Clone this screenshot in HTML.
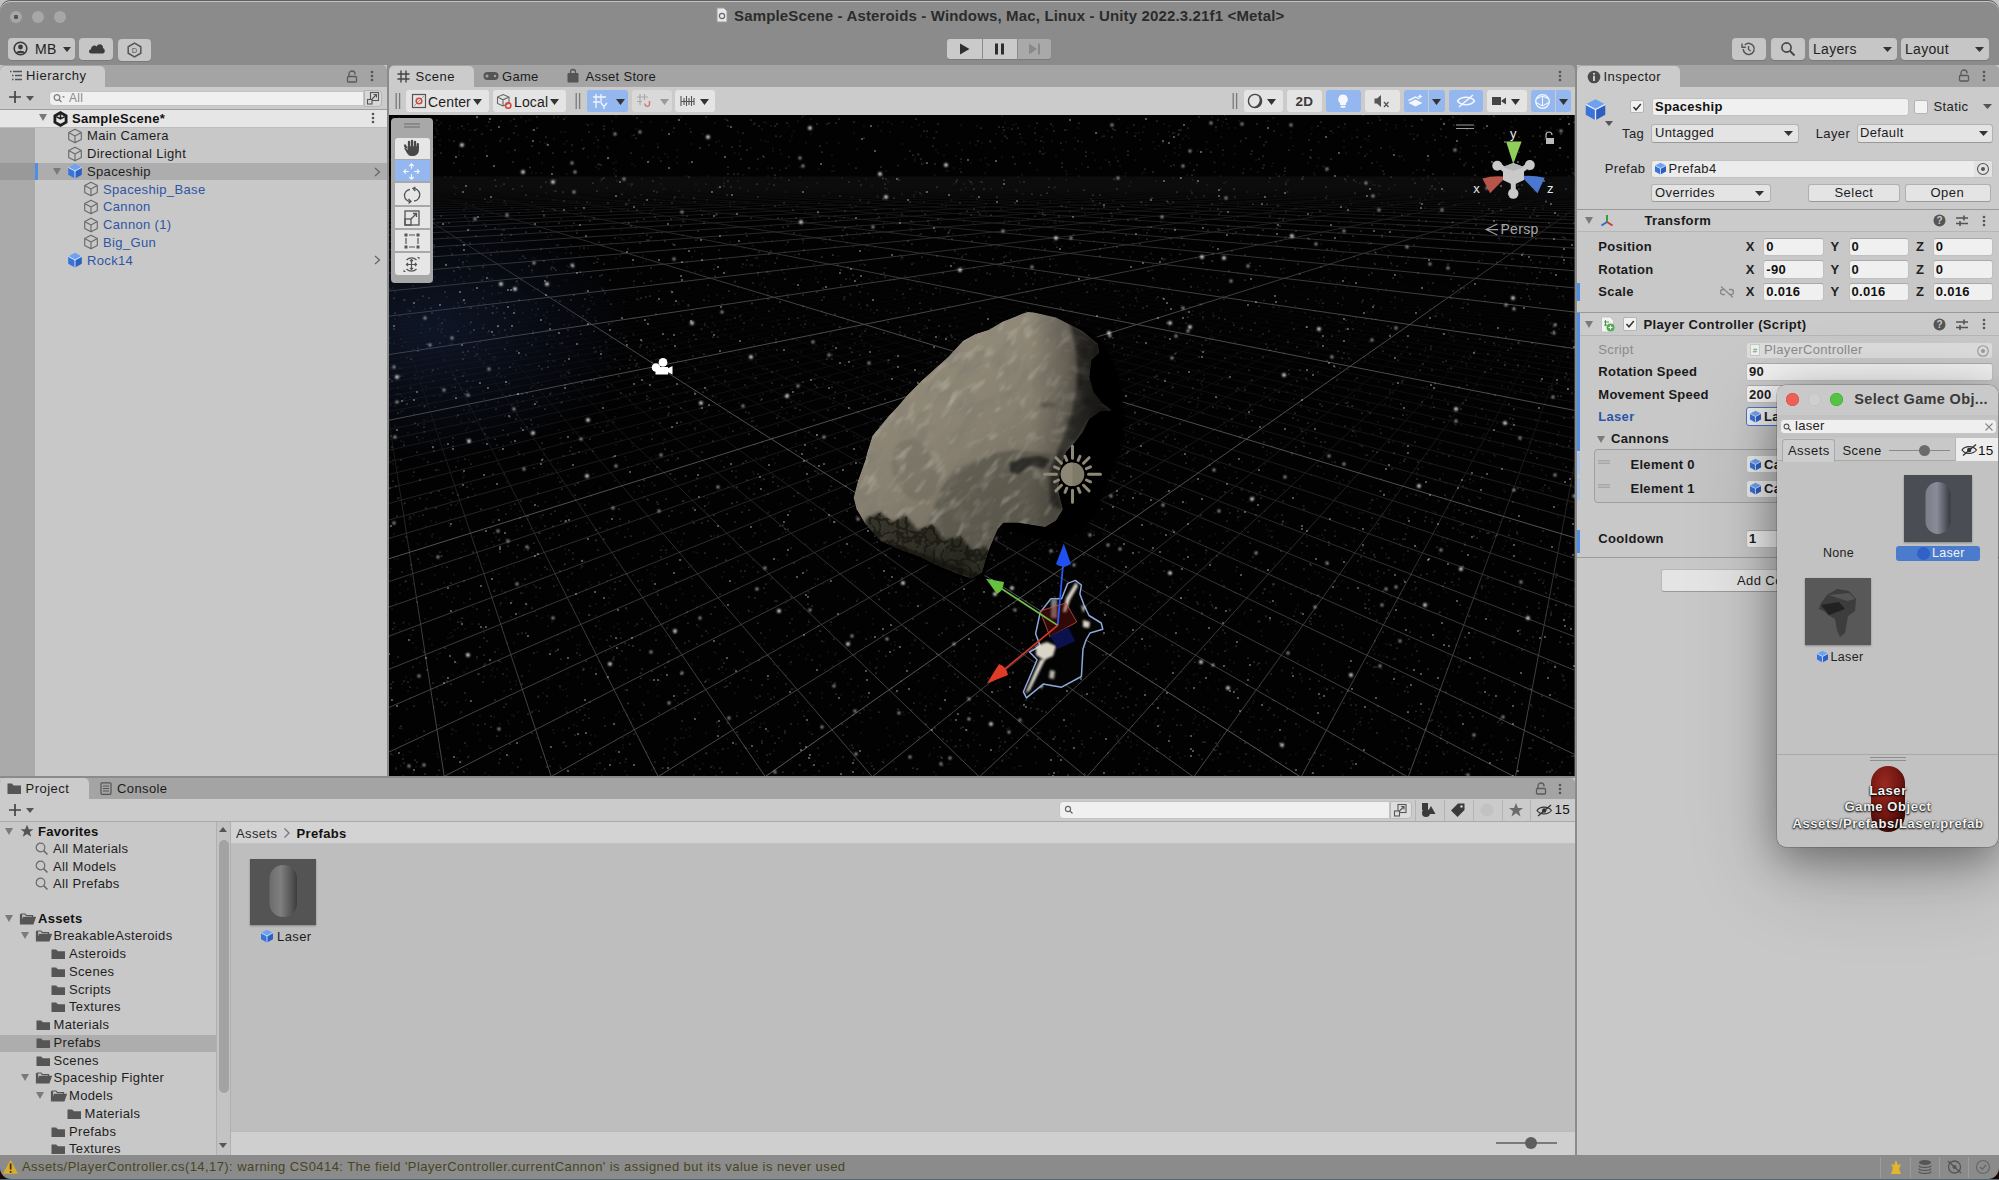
<!DOCTYPE html><html><head><meta charset="utf-8"><title>Unity</title><style>
*{box-sizing:border-box;margin:0;padding:0}
html,body{width:1999px;height:1180px;overflow:hidden;background:#c3c3c3}
body{position:relative;font-family:"Liberation Sans",sans-serif;font-size:13px;color:#1c1c1c}
div{position:absolute}
.t{height:18px;line-height:18px;white-space:nowrap;letter-spacing:0.4px}
.b{font-weight:bold;letter-spacing:0.2px}
.btn{background:#e4e4e4;border:1px solid #b0b0b0;border-bottom-color:#999;border-radius:3px}
.tb{background:#c6c6c6;border-radius:4px;box-shadow:0 1px 0 #7a7a7a}
.fld{background:#f0f0f0;border:1px solid #c0c0c0;border-top-color:#aaa;border-radius:3px}
.dd{background:#e4e4e4;border:1px solid #b3b3b3;border-bottom-color:#999;border-radius:3px}
svg{position:absolute;overflow:visible}
</style></head><body><div style="left:0;top:0;width:1999px;height:1180px;background:#8b8b8b;border-radius:11px 11px 0 0;overflow:hidden;box-shadow:inset 0 1px 0 #5e5e5e, inset 0 2px 0 #c4c4c4">
</div>
<div style="left:9.5px;top:10.5px;width:12px;height:12px;border-radius:6px;background:#a7a7a7"></div>
<div style="left:31.700000000000003px;top:10.5px;width:12px;height:12px;border-radius:6px;background:#a7a7a7"></div>
<div style="left:54px;top:10.5px;width:12px;height:12px;border-radius:6px;background:#a7a7a7"></div>
<div style="left:13.5px;top:14.5px;width:4px;height:4px;border-radius:1px;background:#555"></div>
<svg style="left:716px;top:7px" width="12" height="16"><path d="M1 1H8L11 4V15H1Z" fill="#e8e8e8" stroke="#9a9a9a"/><circle cx="6" cy="9" r="2.6" fill="none" stroke="#666" stroke-width="1.2"/></svg>
<div class="t" style="left:734px;top:7px;font-weight:bold;font-size:15px;letter-spacing:0.15px;color:#2b2b2b">SampleScene - Asteroids - Windows, Mac, Linux - Unity 2022.3.21f1 &lt;Metal&gt;</div>
<div class="tb" style="left:8px;top:38px;width:67px;height:21.5px;"></div>
<svg style="left:13px;top:41px" width="16" height="16"><circle cx="7.5" cy="7.5" r="6.3" fill="none" stroke="#3a3a3a" stroke-width="1.6"/><circle cx="7.5" cy="6" r="2.4" fill="#3a3a3a"/><path d="M3.3 12.2C4.5 9.8 10.5 9.8 11.7 12.2" fill="#3a3a3a" stroke="#3a3a3a" stroke-width="1.4"/></svg>
<div class="t" style="left:35px;top:39.5px;font-size:14px;color:#222;letter-spacing:0.3px">MB</div>
<svg style="left:63px;top:46.5px" width="8" height="5"><path d="M0 0H8L4.0 5Z" fill="#333"/></svg>
<div class="tb" style="left:79px;top:38px;width:34px;height:21.5px;"></div>
<svg style="left:88px;top:42px" width="18" height="13"><path d="M3 11.5C0.5 11.5 0.3 7.6 3 7.3C3 4 6.5 2.4 8.8 4.5C10 1 15.5 1.8 15 6.3C17.5 6.8 17.3 11.5 14.8 11.5Z" fill="#3c3c3c"/></svg>
<div class="tb" style="left:118px;top:38.5px;width:33px;height:22.5px;"></div>
<svg style="left:126px;top:42px" width="17" height="16"><path d="M8.5 1.2L14.8 4.8V11.2L8.5 14.8L2.2 11.2V4.8Z" fill="none" stroke="#555" stroke-width="1.5"/><text x="8.5" y="11.3" font-size="7.5" text-anchor="middle" fill="#555" font-family="Liberation Sans">D</text></svg>
<div style="left:947px;top:38.5px;width:35px;height:20.5px;background:#cacaca;border-radius:3px 0 0 3px;box-shadow:0 1px 0 #7a7a7a"></div>
<div style="left:982.5px;top:38.5px;width:34.5px;height:20.5px;background:#cacaca;box-shadow:0 1px 0 #7a7a7a"></div>
<div style="left:1017.5px;top:38.5px;width:33.5px;height:20.5px;background:#a9a9a9;border-radius:0 3px 3px 0;box-shadow:0 1px 0 #7a7a7a"></div>
<svg style="left:959px;top:43px" width="12" height="12"><path d="M1 0.5L10.5 6L1 11.5Z" fill="#2e2e2e"/></svg>
<svg style="left:994px;top:43px" width="12" height="12"><rect x="1" y="0.5" width="3" height="11" fill="#2e2e2e"/><rect x="7" y="0.5" width="3" height="11" fill="#2e2e2e"/></svg>
<svg style="left:1028px;top:43px" width="14" height="12"><path d="M1 0.5L9 6L1 11.5Z" fill="#8a8a8a"/><rect x="10" y="0.5" width="2" height="11" fill="#8a8a8a"/></svg>
<div class="tb" style="left:1732px;top:38px;width:34px;height:21.5px;"></div>
<svg style="left:1740px;top:41px" width="17" height="16"><path d="M3.2 8A5.5 5.5 0 1 0 4.8 4" fill="none" stroke="#555" stroke-width="1.5"/><path d="M2 2.5V6.3H5.8" fill="none" stroke="#555" stroke-width="1.4"/><path d="M8.5 5V8.5L10.7 10" fill="none" stroke="#555" stroke-width="1.4"/></svg>
<div class="tb" style="left:1771px;top:38px;width:34px;height:21.5px;"></div>
<svg style="left:1780px;top:41px" width="17" height="16"><circle cx="6.5" cy="6.5" r="4.6" fill="none" stroke="#444" stroke-width="1.6"/><path d="M10 10L14.5 14.5" stroke="#444" stroke-width="1.8"/></svg>
<div class="tb" style="left:1809px;top:38px;width:87.5px;height:21.5px;"></div>
<div class="t" style="left:1813px;top:39.5px;font-size:14px;color:#222;letter-spacing:0.3px">Layers</div>
<svg style="left:1883px;top:46.5px" width="9" height="5"><path d="M0 0H9L4.5 5Z" fill="#333"/></svg>
<div class="tb" style="left:1901px;top:38px;width:88px;height:21.5px;"></div>
<div class="t" style="left:1905px;top:39.5px;font-size:14px;color:#222;letter-spacing:0.3px">Layout</div>
<svg style="left:1975px;top:46.5px" width="9" height="5"><path d="M0 0H9L4.5 5Z" fill="#333"/></svg>
<div style="left:0px;top:65px;width:386.5px;height:711px;background:#c8c8c8"></div>
<div style="left:0px;top:65px;width:386.5px;height:22px;background:#a4a4a4;border-radius:5px 5px 0 0"></div>
<div style="left:0px;top:65.5px;width:105px;height:21.5px;background:#cbcbcb;border-radius:5px 5px 0 0"></div>
<svg style="left:9px;top:70px" width="14" height="12" viewBox="0 0 14 12"><path d="M1 1.5H2.5 M4 1.5H13 M3 5.5H4.5 M6 5.5H13 M3 9.5H4.5 M6 9.5H13" stroke="#555" stroke-width="1.3"/></svg>
<div class="t" style="left:26px;top:67px;color:#1e1e1e;letter-spacing:0.55px">Hierarchy</div>
<svg style="left:346px;top:70px" width="12" height="13" viewBox="0 0 12 13"><path d="M3 6V4A3 3 0 0 1 9 4V4.5" fill="none" stroke="#5a5a5a" stroke-width="1.3"/><rect x="1.5" y="6.5" width="9" height="5.5" rx="1" fill="none" stroke="#5a5a5a" stroke-width="1.3"/></svg>
<svg style="left:370px;top:70px" width="4" height="12" viewBox="0 0 4 12"><circle cx="2" cy="2" r="1.3" fill="#555"/><circle cx="2" cy="6" r="1.3" fill="#555"/><circle cx="2" cy="10" r="1.3" fill="#555"/></svg>
<div style="left:0px;top:87px;width:386.5px;height:22.5px;background:#cbcbcb;border-bottom:1px solid #9d9d9d"></div>
<svg style="left:8px;top:90px" width="14" height="14" viewBox="0 0 14 14"><path d="M7 1V13 M1 7H13" stroke="#444" stroke-width="1.7"/></svg>
<svg style="left:26px;top:95.5px" width="8" height="5"><path d="M0 0H8L4.0 5Z" fill="#555"/></svg>
<div style="left:49px;top:90.5px;width:315px;height:15.5px;background:#f0f0f0;border:1px solid #c4c4c4;border-radius:4px 0 0 4px"></div>
<svg style="left:53px;top:93px" width="12" height="10" viewBox="0 0 12 10"><circle cx="4" cy="4.5" r="2.8" fill="none" stroke="#777" stroke-width="1.2"/><path d="M6 6.5L8.5 9 M9.5 3.8L11.5 3.8" stroke="#777" stroke-width="1.2"/></svg>
<div class="t" style="left:69px;top:89.3px;color:#8a8a8a;font-size:12px;letter-spacing:0.3px">All</div>
<div style="left:364px;top:90px;width:18px;height:16.5px;background:#d8d8d8;border:1px solid #b5b5b5;border-radius:0 4px 4px 0"></div>
<svg style="left:366px;top:91px" width="14" height="14" viewBox="0 0 14 14"><rect x="4.5" y="1.5" width="8" height="8" fill="none" stroke="#555" stroke-width="1.1"/><rect x="1.5" y="8.5" width="4.5" height="4.5" fill="#d8d8d8" stroke="#555" stroke-width="1.1"/><path d="M6 8L10.5 3.5 M7.5 3.5H10.5V6.5" fill="none" stroke="#555" stroke-width="1.1"/></svg>
<div style="left:0px;top:127.5px;width:35px;height:648.5px;background:#aaaaaa"></div>
<div style="left:0px;top:110px;width:386.5px;height:17.5px;background:#e6e6e6;border-bottom:1px solid #bdbdbd"></div>
<svg style="left:38px;top:113px" width="10" height="10" viewBox="0 0 10 10"><path d="M1 1H9L5 8Z" fill="#7a7a7a"/></svg>
<svg style="left:52px;top:109.5px" width="17" height="18" viewBox="0 0 17 18"><path d="M8.5 1L15.5 5V13L8.5 17L1.5 13V5Z" fill="#1e1e1e"/><path d="M8.5 4.2L12.7 6.6V11.4L8.5 13.8L4.3 11.4V6.6Z" fill="#e6e6e6"/><path d="M8.5 4.2V9 M4.3 6.6L8.5 9L12.7 6.6" stroke="#1e1e1e" stroke-width="1.5" fill="none"/></svg>
<div class="t" style="left:72px;top:109.5px;font-weight:bold;letter-spacing:0.3px;color:#111">SampleScene*</div>
<svg style="left:371px;top:112px" width="4" height="12" viewBox="0 0 4 12"><circle cx="2" cy="2" r="1.3" fill="#555"/><circle cx="2" cy="6" r="1.3" fill="#555"/><circle cx="2" cy="10" r="1.3" fill="#555"/></svg>
<svg style="left:66.5px;top:127.80000000000001px" width="16" height="16" viewBox="0 0 16 16"><path d="M8 1.2L14.3 4.6V11.4L8 14.8L1.7 11.4V4.6Z M1.7 4.6L8 8L14.3 4.6 M8 8V14.8" fill="none" stroke="#6a6a6a" stroke-width="1.15" stroke-linejoin="round"/></svg>
<div class="t" style="left:87px;top:127.30000000000001px;color:#1e1e1e;letter-spacing:0.35px">Main Camera</div>
<svg style="left:66.5px;top:145.55px" width="16" height="16" viewBox="0 0 16 16"><path d="M8 1.2L14.3 4.6V11.4L8 14.8L1.7 11.4V4.6Z M1.7 4.6L8 8L14.3 4.6 M8 8V14.8" fill="none" stroke="#6a6a6a" stroke-width="1.15" stroke-linejoin="round"/></svg>
<div class="t" style="left:87px;top:145.05px;color:#1e1e1e;letter-spacing:0.35px">Directional Light</div>
<div style="left:0px;top:162.8px;width:386.5px;height:17px;background:#adadad"></div>
<div style="left:0px;top:162.8px;width:35px;height:17px;background:#999"></div>
<div style="left:35px;top:162.8px;width:3px;height:17px;background:#4c8fe8"></div>
<svg style="left:52px;top:167.3px" width="10" height="10" viewBox="0 0 10 10"><path d="M1 1H9L5 8Z" fill="#7a7a7a"/></svg>
<svg style="left:66.5px;top:163.3px" width="16" height="16" viewBox="0 0 16 16"><g transform="scale(1.0)"><path d="M8 0.8L14.8 4.4L8 8L1.2 4.4Z" fill="#6ea2f0"/><path d="M1.2 4.4L8 8V15.4L1.2 11.7Z" fill="#3a73d9"/><path d="M14.8 4.4L8 8V15.4L14.8 11.7Z" fill="#2d5fc0"/><path d="M8 8V15.4 M1.2 4.4L8 8L14.8 4.4" stroke="#e8eefc" stroke-width="0.9" fill="none"/></g></svg>
<div class="t" style="left:87px;top:162.8px;color:#1e1e1e;letter-spacing:0.35px">Spaceship</div>
<svg style="left:82.5px;top:181.05px" width="16" height="16" viewBox="0 0 16 16"><path d="M8 1.2L14.3 4.6V11.4L8 14.8L1.7 11.4V4.6Z M1.7 4.6L8 8L14.3 4.6 M8 8V14.8" fill="none" stroke="#6a6a6a" stroke-width="1.15" stroke-linejoin="round"/></svg>
<div class="t" style="left:103px;top:180.55px;color:#2f55a4;letter-spacing:0.35px">Spaceship_Base</div>
<svg style="left:82.5px;top:198.8px" width="16" height="16" viewBox="0 0 16 16"><path d="M8 1.2L14.3 4.6V11.4L8 14.8L1.7 11.4V4.6Z M1.7 4.6L8 8L14.3 4.6 M8 8V14.8" fill="none" stroke="#6a6a6a" stroke-width="1.15" stroke-linejoin="round"/></svg>
<div class="t" style="left:103px;top:198.3px;color:#2f55a4;letter-spacing:0.35px">Cannon</div>
<svg style="left:82.5px;top:216.55px" width="16" height="16" viewBox="0 0 16 16"><path d="M8 1.2L14.3 4.6V11.4L8 14.8L1.7 11.4V4.6Z M1.7 4.6L8 8L14.3 4.6 M8 8V14.8" fill="none" stroke="#6a6a6a" stroke-width="1.15" stroke-linejoin="round"/></svg>
<div class="t" style="left:103px;top:216.05px;color:#2f55a4;letter-spacing:0.35px">Cannon (1)</div>
<svg style="left:82.5px;top:234.3px" width="16" height="16" viewBox="0 0 16 16"><path d="M8 1.2L14.3 4.6V11.4L8 14.8L1.7 11.4V4.6Z M1.7 4.6L8 8L14.3 4.6 M8 8V14.8" fill="none" stroke="#6a6a6a" stroke-width="1.15" stroke-linejoin="round"/></svg>
<div class="t" style="left:103px;top:233.8px;color:#2f55a4;letter-spacing:0.35px">Big_Gun</div>
<svg style="left:66.5px;top:252.05px" width="16" height="16" viewBox="0 0 16 16"><g transform="scale(1.0)"><path d="M8 0.8L14.8 4.4L8 8L1.2 4.4Z" fill="#6ea2f0"/><path d="M1.2 4.4L8 8V15.4L1.2 11.7Z" fill="#3a73d9"/><path d="M14.8 4.4L8 8V15.4L14.8 11.7Z" fill="#2d5fc0"/><path d="M8 8V15.4 M1.2 4.4L8 8L14.8 4.4" stroke="#e8eefc" stroke-width="0.9" fill="none"/></g></svg>
<div class="t" style="left:87px;top:251.55px;color:#2f55a4;letter-spacing:0.35px">Rock14</div>
<svg style="left:374px;top:166.5px" width="7" height="10" viewBox="0 0 7 10"><path d="M1 1L5.5 5L1 9" fill="none" stroke="#666" stroke-width="1.3"/></svg>
<svg style="left:374px;top:255.10000000000002px" width="7" height="10" viewBox="0 0 7 10"><path d="M1 1L5.5 5L1 9" fill="none" stroke="#666" stroke-width="1.3"/></svg>
<div style="left:389px;top:65px;width:1186px;height:22px;background:#a4a4a4;border-radius:5px 5px 0 0"></div>
<div style="left:389px;top:65.5px;width:85px;height:21.5px;background:#cbcbcb;border-radius:5px 5px 0 0"></div>
<svg style="left:397px;top:70px" width="13" height="13" viewBox="0 0 13 13"><path d="M4 0.5V12.5 M9 0.5V12.5 M0.5 4H12.5 M0.5 9H12.5" stroke="#444" stroke-width="1.4"/></svg>
<div class="t" style="left:415.5px;top:67.5px;letter-spacing:0.5px">Scene</div>
<svg style="left:483px;top:71px" width="16" height="10" viewBox="0 0 16 10"><rect x="0.5" y="1" width="15" height="8" rx="4" fill="#555"/><circle cx="4" cy="5" r="1.5" fill="#a4a4a4"/><circle cx="12" cy="5" r="1.2" fill="#a4a4a4"/></svg>
<div class="t" style="left:502px;top:67.5px;letter-spacing:0.3px">Game</div>
<svg style="left:567px;top:69px" width="12" height="14" viewBox="0 0 12 14"><path d="M3.5 4V3A2.5 2.5 0 0 1 8.5 3V4" fill="none" stroke="#555" stroke-width="1.3"/><rect x="0.5" y="4" width="11" height="9.5" rx="1.2" fill="#555"/></svg>
<div class="t" style="left:585.5px;top:67.5px;letter-spacing:0.3px">Asset Store</div>
<svg style="left:1558px;top:70px" width="4" height="12" viewBox="0 0 4 12"><circle cx="2" cy="2" r="1.3" fill="#555"/><circle cx="2" cy="6" r="1.3" fill="#555"/><circle cx="2" cy="10" r="1.3" fill="#555"/></svg>
<div style="left:389px;top:87px;width:1186px;height:28px;background:#cbcbcb"></div>
<svg style="left:395px;top:92px" width="6" height="18" viewBox="0 0 6 18"><path d="M1.2 1V17 M4.6 1V17" stroke="#7a7a7a" stroke-width="1.3"/></svg>
<svg style="left:575px;top:92px" width="6" height="18" viewBox="0 0 6 18"><path d="M1.2 1V17 M4.6 1V17" stroke="#7a7a7a" stroke-width="1.3"/></svg>
<svg style="left:1232px;top:92px" width="6" height="18" viewBox="0 0 6 18"><path d="M1.2 1V17 M4.6 1V17" stroke="#7a7a7a" stroke-width="1.3"/></svg>
<div style="left:406px;top:90.2px;width:83px;height:21.6px;background:#e4e4e4;border-radius:3px"></div>
<svg style="left:411px;top:93px" width="16" height="16" viewBox="0 0 16 16"><rect x="1.5" y="1.5" width="13" height="13" fill="none" stroke="#555" stroke-width="1.2"/><circle cx="8" cy="8" r="2.8" fill="none" stroke="#d8453a" stroke-width="1.6"/><path d="M3 13L13 3" stroke="#888" stroke-width="0.8"/></svg>
<div class="t" style="left:428px;top:92.5px;font-size:14px;letter-spacing:0.15px">Center</div>
<svg style="left:472.5px;top:98.5px" width="9" height="6"><path d="M0 0H9L4.5 6Z" fill="#333"/></svg>
<div style="left:493px;top:90.2px;width:73px;height:21.6px;background:#e4e4e4;border-radius:3px"></div>
<svg style="left:496px;top:93px" width="18" height="17" viewBox="0 0 18 17"><path d="M7 1.5L13 4V10.5L7 13L1.5 10.5V4Z M1.5 4L7 6.8L13 4 M7 6.8V13" fill="none" stroke="#666" stroke-width="1.1"/><circle cx="12.2" cy="12.5" r="2.7" fill="none" stroke="#d8453a" stroke-width="1.6"/></svg>
<div class="t" style="left:514px;top:92.5px;font-size:14px;letter-spacing:0.15px">Local</div>
<svg style="left:550px;top:98.5px" width="9" height="6"><path d="M0 0H9L4.5 6Z" fill="#333"/></svg>
<div style="left:587px;top:90.2px;width:25px;height:21.6px;background:#93b7ee;border-radius:3px"></div>
<div style="left:612.6px;top:90.2px;width:15px;height:21.6px;background:#93b7ee;border-radius:0 3px 3px 0"></div>
<div style="left:587px;top:90.2px;width:25.5px;height:21.6px;background:#93b7ee;border-radius:3px 0 0 3px"></div>
<svg style="left:592px;top:93px" width="16" height="16" viewBox="0 0 16 16"><path d="M4 1V15 M9 1V10 M1 4H14 M1 9H8" stroke="#f2f6ff" stroke-width="1.3"/><path d="M9 10L12 13.5L15 10 M12 13.5V16" stroke="#f2f6ff" stroke-width="1.3" fill="none"/></svg>
<svg style="left:615.5px;top:98.5px" width="9" height="6"><path d="M0 0H9L4.5 6Z" fill="#333"/></svg>
<div style="left:631.7px;top:90.2px;width:24px;height:21.6px;background:#d9d9d9;border-radius:3px 0 0 3px"></div>
<div style="left:656px;top:90.2px;width:16px;height:21.6px;background:#d9d9d9;border-radius:0 3px 3px 0"></div>
<svg style="left:636px;top:93px" width="17" height="16" viewBox="0 0 17 16"><path d="M4 1V12 M8.5 1V7 M1 4H12 M1 8.5H6" stroke="#a9a9a9" stroke-width="1.2"/><path d="M9 10.5A2.3 2.3 0 1 0 13.5 10.5V8" fill="none" stroke="#d07a70" stroke-width="1.5"/></svg>
<svg style="left:659.5px;top:98.5px" width="9" height="6"><path d="M0 0H9L4.5 6Z" fill="#9a9a9a"/></svg>
<div style="left:675px;top:90.2px;width:40px;height:21.6px;background:#e4e4e4;border-radius:3px"></div>
<svg style="left:680px;top:93px" width="16" height="16" viewBox="0 0 16 16"><path d="M1 3V13 M4 5V12 M6.5 3V13 M9 5V12 M11.5 3V13 M14 5V12 M1 8.5H14" stroke="#555" stroke-width="1.1"/></svg>
<svg style="left:700px;top:98.5px" width="9" height="6"><path d="M0 0H9L4.5 6Z" fill="#333"/></svg>
<div style="left:1244px;top:90.2px;width:39.299999999999955px;height:21.6px;background:#e4e4e4;border-radius:3px"></div>
<svg style="left:1247px;top:93px" width="17" height="16" viewBox="0 0 17 16"><circle cx="8" cy="8" r="6.6" fill="none" stroke="#444" stroke-width="1.4"/><path d="M14.6 8A6.6 6.6 0 0 1 5 13.9A7 7 0 0 0 11.5 3.2A6.6 6.6 0 0 1 14.6 8Z" fill="#444"/></svg>
<svg style="left:1267px;top:98.5px" width="9" height="6"><path d="M0 0H9L4.5 6Z" fill="#333"/></svg>
<div style="left:1287px;top:90.2px;width:35px;height:21.6px;background:#e4e4e4;border-radius:3px"></div>
<div class="t" style="left:1295.5px;top:92.5px;font-size:13.5px;font-weight:bold;letter-spacing:0.2px;color:#3a3a3a">2D</div>
<div style="left:1326px;top:90.2px;width:35px;height:21.6px;background:#93b7ee;border-radius:3px"></div>
<svg style="left:1336px;top:93px" width="14" height="16" viewBox="0 0 14 16"><path d="M7 1.5A4.8 4.8 0 0 0 4 10V12H10V10A4.8 4.8 0 0 0 7 1.5Z" fill="#f4f7fd"/><rect x="4.5" y="12.8" width="5" height="2" rx="1" fill="#f4f7fd"/></svg>
<div style="left:1365px;top:90.2px;width:35px;height:21.6px;background:#e4e4e4;border-radius:3px"></div>
<svg style="left:1373px;top:93px" width="18" height="16" viewBox="0 0 18 16"><path d="M1.5 5.5H4L8 2V14L4 10.5H1.5Z" fill="#555"/><path d="M11 9L15.5 14 M15.5 9L11 14" stroke="#555" stroke-width="1.3"/></svg>
<div style="left:1404px;top:90.2px;width:24px;height:21.6px;background:#93b7ee;border-radius:3px 0 0 3px"></div>
<div style="left:1428.5px;top:90.2px;width:16px;height:21.6px;background:#93b7ee;border-radius:0 3px 3px 0"></div>
<svg style="left:1407px;top:93px" width="18" height="16" viewBox="0 0 18 16"><path d="M1.5 10L8.5 6.5L15.5 10L8.5 13.5Z" fill="#f4f7fd"/><path d="M1.5 7.5L8.5 4L12 5.8" fill="none" stroke="#f4f7fd" stroke-width="1.4"/><path d="M13 0.8L13.8 2.8L15.8 3.5L13.8 4.3L13 6.3L12.2 4.3L10.2 3.5L12.2 2.8Z" fill="#f4f7fd"/></svg>
<svg style="left:1431.5px;top:98.5px" width="9" height="6"><path d="M0 0H9L4.5 6Z" fill="#333"/></svg>
<div style="left:1448.6px;top:90.2px;width:34.40000000000009px;height:21.6px;background:#93b7ee;border-radius:3px"></div>
<svg style="left:1456px;top:93px" width="20" height="16" viewBox="0 0 20 16"><path d="M1.5 8C5 3 15 3 18.5 8C15 13 5 13 1.5 8Z" fill="none" stroke="#f4f7fd" stroke-width="1.4"/><path d="M3 14L17 2" stroke="#f4f7fd" stroke-width="1.5"/></svg>
<div style="left:1487px;top:90.2px;width:40px;height:21.6px;background:#e4e4e4;border-radius:3px"></div>
<svg style="left:1491px;top:93px" width="17" height="16" viewBox="0 0 17 16"><rect x="1" y="4" width="9" height="8" fill="#444"/><path d="M10.5 7.5L15 4.5V11.5L10.5 8.5Z" fill="#444"/></svg>
<svg style="left:1511px;top:98.5px" width="9" height="6"><path d="M0 0H9L4.5 6Z" fill="#333"/></svg>
<div style="left:1530.5px;top:90.2px;width:24.5px;height:21.6px;background:#93b7ee;border-radius:3px 0 0 3px"></div>
<div style="left:1555.5px;top:90.2px;width:15.5px;height:21.6px;background:#93b7ee;border-radius:0 3px 3px 0"></div>
<svg style="left:1534px;top:93px" width="17" height="17" viewBox="0 0 17 17"><circle cx="8.5" cy="8.5" r="6.8" fill="none" stroke="#f4f7fd" stroke-width="1.3"/><path d="M3 5.5L8.5 3L14 5.5 M2 9.5L8.5 13L15 9.5 M8.5 3V13" fill="none" stroke="#f4f7fd" stroke-width="1.1"/></svg>
<svg style="left:1558.5px;top:98.5px" width="9" height="6"><path d="M0 0H9L4.5 6Z" fill="#333"/></svg>
<svg style="left:389px;top:115px;overflow:hidden" width="1185.6" height="661" viewBox="0 0 1185.6 661"><rect x="0" y="0" width="1185.6" height="661" fill="#020203"/><defs><linearGradient id="fadeMin" x1="0" y1="61.5" x2="0" y2="661" gradientUnits="userSpaceOnUse"><stop offset="0" stop-color="#fff" stop-opacity="0"/><stop offset="0.12" stop-color="#fff" stop-opacity="0.01"/><stop offset="0.25" stop-color="#fff" stop-opacity="0.07"/><stop offset="0.45" stop-color="#fff" stop-opacity="0.3"/><stop offset="0.7" stop-color="#fff" stop-opacity="0.75"/><stop offset="1" stop-color="#fff" stop-opacity="1"/></linearGradient><mask id="mMin" maskUnits="userSpaceOnUse" x="0" y="0" width="1185.6" height="661"><rect x="0" y="0" width="1185.6" height="661" fill="url(#fadeMin)"/></mask><linearGradient id="fadeMaj" x1="0" y1="61.5" x2="0" y2="661" gradientUnits="userSpaceOnUse"><stop offset="0" stop-color="#fff" stop-opacity="0"/><stop offset="0.03" stop-color="#fff" stop-opacity="0.08"/><stop offset="0.1" stop-color="#fff" stop-opacity="0.45"/><stop offset="0.25" stop-color="#fff" stop-opacity="0.8"/><stop offset="1" stop-color="#fff" stop-opacity="1"/></linearGradient><mask id="mMaj" maskUnits="userSpaceOnUse" x="0" y="0" width="1185.6" height="661"><rect x="0" y="0" width="1185.6" height="661" fill="url(#fadeMaj)"/></mask><radialGradient id="rockG" cx="0.35" cy="0.3" r="0.8"><stop offset="0" stop-color="#9d9685"/><stop offset="0.55" stop-color="#8c8574"/><stop offset="1" stop-color="#6d685b"/></radialGradient><filter id="blur1" x="-50%" y="-50%" width="200%" height="200%"><feGaussianBlur stdDeviation="0.8"/></filter><filter id="blur2" x="-50%" y="-50%" width="200%" height="200%"><feGaussianBlur stdDeviation="1.6"/></filter></defs><defs><linearGradient id="haze" x1="0" y1="0" x2="0" y2="1"><stop offset="0" stop-color="#141414" stop-opacity="0.6"/><stop offset="1" stop-color="#161616" stop-opacity="0"/></linearGradient></defs><rect x="0" y="61.5" width="1185.6" height="22" fill="url(#haze)"/><g mask="url(#mMin)"><path d="M-39.1 61.5L-51.8 663.0M-38.0 61.5L55.5 663.0M-36.8 61.5L162.7 663.0M-35.7 61.5L269.9 663.0M-34.6 61.5L377.2 663.0M-33.4 61.5L484.4 663.0M-32.3 61.5L591.6 663.0M-31.1 61.5L698.8 663.0M-30.0 61.5L806.1 663.0M-27.7 61.5L1020.5 663.0M-26.5 61.5L1127.8 663.0M-25.4 61.5L1235.0 663.0M-24.2 61.5L1342.2 663.0M-23.1 61.5L1449.4 663.0M-21.9 61.5L1556.7 663.0M-20.8 61.5L1663.9 663.0M-19.6 61.5L1771.1 663.0M-18.5 61.5L1878.4 663.0M-16.2 61.5L2092.8 663.0M-15.1 61.5L2200.0 663.0M-13.9 61.5L2307.3 663.0M-12.8 61.5L2414.5 663.0M-11.6 61.5L2521.7 663.0M-10.5 61.5L2629.0 663.0M-9.3 61.5L2736.2 663.0M-8.2 61.5L2843.4 663.0M-7.0 61.5L2950.7 663.0M-4.7 61.5L3165.1 663.0M-3.6 61.5L3272.3 663.0M-2.5 61.5L3379.6 663.0M-1.3 61.5L3486.8 663.0M-0.2 61.5L3594.0 663.0M1.0 61.5L3701.3 663.0M2.1 61.5L3808.5 663.0M3.3 61.5L3915.7 663.0M4.4 61.5L4022.9 663.0M6.7 61.5L4237.4 663.0M7.9 61.5L4344.6 663.0M9.0 61.5L4451.9 663.0M10.2 61.5L4559.1 663.0M11.3 61.5L4666.3 663.0M12.4 61.5L4773.5 663.0M13.6 61.5L4880.8 663.0M14.7 61.5L4988.0 663.0M15.9 61.5L5095.2 663.0M18.2 61.5L5309.7 663.0M19.3 61.5L5416.9 663.0M20.5 61.5L5524.1 663.0M21.6 61.5L5631.4 663.0M22.8 61.5L5738.6 663.0M23.9 61.5L5845.8 663.0M25.1 61.5L5953.1 663.0M26.2 61.5L6060.3 663.0M27.4 61.5L6167.5 663.0M29.6 61.5L6382.0 663.0M30.8 61.5L6489.2 663.0M31.9 61.5L6596.4 663.0M33.1 61.5L6703.7 663.0M34.2 61.5L6810.9 663.0M35.4 61.5L6918.1 663.0M36.5 61.5L7025.4 663.0M37.7 61.5L7132.6 663.0M38.8 61.5L7239.8 663.0M41.1 61.5L7454.3 663.0M42.3 61.5L7561.5 663.0M43.4 61.5L7668.7 663.0M44.5 61.5L7776.0 663.0M45.7 61.5L7883.2 663.0M46.8 61.5L7990.4 663.0M48.0 61.5L8097.6 663.0M49.1 61.5L8204.9 663.0M50.3 61.5L8312.1 663.0M52.6 61.5L8526.6 663.0M53.7 61.5L8633.8 663.0M54.9 61.5L8741.0 663.0M56.0 61.5L8848.3 663.0M57.2 61.5L8955.5 663.0M58.3 61.5L9062.7 663.0M59.5 61.5L9169.9 663.0M60.6 61.5L9277.2 663.0M61.7 61.5L9384.4 663.0M64.0 61.5L9598.9 663.0M65.2 61.5L9706.1 663.0M66.3 61.5L9813.3 663.0M67.5 61.5L9920.5 663.0M68.6 61.5L10027.8 663.0M69.8 61.5L10135.0 663.0M70.9 61.5L10242.2 663.0M72.1 61.5L10349.5 663.0M73.2 61.5L10456.7 663.0M75.5 61.5L10671.1 663.0M76.6 61.5L10778.4 663.0M77.8 61.5L10885.6 663.0M78.9 61.5L10992.8 663.0M80.1 61.5L11100.1 663.0M81.2 61.5L11207.3 663.0M82.4 61.5L11314.5 663.0M83.5 61.5L11421.7 663.0M84.7 61.5L11529.0 663.0M87.0 61.5L11743.4 663.0M88.1 61.5L11850.7 663.0M89.3 61.5L11957.9 663.0M90.4 61.5L12065.1 663.0M91.5 61.5L12172.4 663.0M92.7 61.5L12279.6 663.0M93.8 61.5L12386.8 663.0M95.0 61.5L12494.0 663.0M96.1 61.5L12601.3 663.0M98.4 61.5L12815.7 663.0M99.6 61.5L12923.0 663.0M100.7 61.5L13030.2 663.0M101.9 61.5L13137.4 663.0M103.0 61.5L13244.6 663.0M104.2 61.5L13351.9 663.0M105.3 61.5L13459.1 663.0M106.5 61.5L13566.3 663.0M107.6 61.5L13673.6 663.0M109.9 61.5L13888.0 663.0M111.0 61.5L13995.2 663.0M112.2 61.5L14102.5 663.0M113.3 61.5L14209.7 663.0M114.5 61.5L14316.9 663.0M115.6 61.5L14424.2 663.0M116.8 61.5L14531.4 663.0M117.9 61.5L14638.6 663.0M119.1 61.5L14745.9 663.0M121.4 61.5L14960.3 663.0M122.5 61.5L15067.5 663.0M123.6 61.5L15174.8 663.0M124.8 61.5L15282.0 663.0M125.9 61.5L15389.2 663.0M127.1 61.5L15496.5 663.0M128.2 61.5L15603.7 663.0M129.4 61.5L15710.9 663.0M130.5 61.5L15818.1 663.0M132.8 61.5L16032.6 663.0M134.0 61.5L16139.8 663.0M135.1 61.5L16247.1 663.0M136.3 61.5L16354.3 663.0M137.4 61.5L16461.5 663.0M138.5 61.5L16568.7 663.0M139.7 61.5L16676.0 663.0M140.8 61.5L16783.2 663.0M142.0 61.5L16890.4 663.0M144.3 61.5L17104.9 663.0M145.4 61.5L17212.1 663.0M146.6 61.5L17319.3 663.0M147.7 61.5L17426.6 663.0M148.9 61.5L17533.8 663.0M150.0 61.5L17641.0 663.0M151.2 61.5L17748.3 663.0M152.3 61.5L17855.5 663.0M153.5 61.5L17962.7 663.0M155.7 61.5L18177.2 663.0M156.9 61.5L18284.4 663.0M158.0 61.5L18391.6 663.0M159.2 61.5L18498.9 663.0M160.3 61.5L18606.1 663.0M161.5 61.5L18713.3 663.0M162.6 61.5L18820.6 663.0M163.8 61.5L18927.8 663.0M164.9 61.5L19035.0 663.0M167.2 61.5L19249.5 663.0M168.4 61.5L19356.7 663.0M169.5 61.5L19463.9 663.0M170.6 61.5L19571.2 663.0M171.8 61.5L19678.4 663.0M172.9 61.5L19785.6 663.0M174.1 61.5L19892.8 663.0M175.2 61.5L20000.1 663.0M176.4 61.5L20107.3 663.0M178.7 61.5L20321.8 663.0M179.8 61.5L20429.0 663.0M181.0 61.5L20536.2 663.0M182.1 61.5L20643.5 663.0M183.3 61.5L20750.7 663.0M184.4 61.5L20857.9 663.0M185.6 61.5L20965.1 663.0M186.7 61.5L21072.4 663.0M187.8 61.5L21179.6 663.0M190.1 61.5L21394.1 663.0M191.3 61.5L21501.3 663.0M192.4 61.5L21608.5 663.0M193.6 61.5L21715.7 663.0M194.7 61.5L21823.0 663.0M195.9 61.5L21930.2 663.0M197.0 61.5L22037.4 663.0M198.2 61.5L22144.7 663.0M199.3 61.5L22251.9 663.0M201.6 61.5L22466.3 663.0M202.7 61.5L22573.6 663.0M203.9 61.5L22680.8 663.0M205.0 61.5L22788.0 663.0M206.2 61.5L22895.3 663.0M207.3 61.5L23002.5 663.0M208.5 61.5L23109.7 663.0M209.6 61.5L23216.9 663.0M210.8 61.5L23324.2 663.0M213.1 61.5L23538.6 663.0M214.2 61.5L23645.9 663.0M215.4 61.5L23753.1 663.0M216.5 61.5L23860.3 663.0M217.6 61.5L23967.6 663.0M218.8 61.5L24074.8 663.0M219.9 61.5L24182.0 663.0M221.1 61.5L24289.2 663.0M222.2 61.5L24396.5 663.0M224.5 61.5L24610.9 663.0M225.7 61.5L24718.2 663.0M226.8 61.5L24825.4 663.0M228.0 61.5L24932.6 663.0M229.1 61.5L25039.8 663.0M230.3 61.5L25147.1 663.0M231.4 61.5L25254.3 663.0M232.6 61.5L25361.5 663.0M233.7 61.5L25468.8 663.0M236.0 61.5L25683.2 663.0M237.1 61.5L25790.4 663.0M238.3 61.5L25897.7 663.0M239.4 61.5L26004.9 663.0M240.6 61.5L26112.1 663.0M241.7 61.5L26219.4 663.0M242.9 61.5L26326.6 663.0M244.0 61.5L26433.8 663.0M245.2 61.5L26541.1 663.0M247.5 61.5L26755.5 663.0M248.6 61.5L26862.7 663.0M249.7 61.5L26970.0 663.0M250.9 61.5L27077.2 663.0M252.0 61.5L27184.4 663.0M253.2 61.5L27291.7 663.0M254.3 61.5L27398.9 663.0M255.5 61.5L27506.1 663.0M256.6 61.5L27613.3 663.0M258.9 61.5L27827.8 663.0M260.1 61.5L27935.0 663.0M261.2 61.5L28042.3 663.0M262.4 61.5L28149.5 663.0M263.5 61.5L28256.7 663.0M264.6 61.5L28363.9 663.0M265.8 61.5L28471.2 663.0M266.9 61.5L28578.4 663.0M268.1 61.5L28685.6 663.0M270.4 61.5L28900.1 663.0M271.5 61.5L29007.3 663.0M272.7 61.5L29114.5 663.0M273.8 61.5L29221.8 663.0M275.0 61.5L29329.0 663.0M276.1 61.5L29436.2 663.0M277.3 61.5L29543.5 663.0M278.4 61.5L29650.7 663.0M279.6 61.5L29757.9 663.0M281.8 61.5L29972.4 663.0M283.0 61.5L30079.6 663.0M284.1 61.5L30186.8 663.0M285.3 61.5L30294.1 663.0M286.4 61.5L30401.3 663.0M287.6 61.5L30508.5 663.0M288.7 61.5L30615.8 663.0M289.9 61.5L30723.0 663.0M291.0 61.5L30830.2 663.0M293.3 61.5L31044.7 663.0M294.5 61.5L31151.9 663.0M295.6 61.5L31259.1 663.0M296.7 61.5L31366.4 663.0M297.9 61.5L31473.6 663.0M299.0 61.5L31580.8 663.0M300.2 61.5L31688.0 663.0M301.3 61.5L31795.3 663.0M302.5 61.5L31902.5 663.0M304.8 61.5L32117.0 663.0M305.9 61.5L32224.2 663.0M307.1 61.5L32331.4 663.0M308.2 61.5L32438.7 663.0M309.4 61.5L32545.9 663.0M310.5 61.5L32653.1 663.0M311.7 61.5L32760.3 663.0M312.8 61.5L32867.6 663.0M313.9 61.5L32974.8 663.0M316.2 61.5L33189.3 663.0M317.4 61.5L33296.5 663.0M318.5 61.5L33403.7 663.0M319.7 61.5L33510.9 663.0M320.8 61.5L33618.2 663.0M322.0 61.5L33725.4 663.0M323.1 61.5L33832.6 663.0M324.3 61.5L33939.9 663.0M325.4 61.5L34047.1 663.0M327.7 61.5L34261.5 663.0M328.8 61.5L34368.8 663.0M330.0 61.5L34476.0 663.0M331.1 61.5L34583.2 663.0M332.3 61.5L34690.5 663.0M333.4 61.5L34797.7 663.0M334.6 61.5L34904.9 663.0M335.7 61.5L35012.1 663.0M336.9 61.5L35119.4 663.0M339.2 61.5L35333.8 663.0M340.3 61.5L35441.1 663.0M341.5 61.5L35548.3 663.0M342.6 61.5L35655.5 663.0M343.7 61.5L35762.8 663.0M344.9 61.5L35870.0 663.0M346.0 61.5L35977.2 663.0M347.2 61.5L36084.4 663.0M348.3 61.5L36191.7 663.0M350.6 61.5L36406.1 663.0M351.8 61.5L36513.4 663.0M352.9 61.5L36620.6 663.0M354.1 61.5L36727.8 663.0M355.2 61.5L36835.0 663.0M356.4 61.5L36942.3 663.0M357.5 61.5L37049.5 663.0M358.7 61.5L37156.7 663.0M359.8 61.5L37264.0 663.0M362.1 61.5L37478.4 663.0M363.2 61.5L37585.6 663.0M364.4 61.5L37692.9 663.0M365.5 61.5L37800.1 663.0M366.7 61.5L37907.3 663.0M367.8 61.5L38014.6 663.0M369.0 61.5L38121.8 663.0M370.1 61.5L38229.0 663.0M371.3 61.5L38336.3 663.0M373.6 61.5L38550.7 663.0M374.7 61.5L38657.9 663.0M375.8 61.5L38765.2 663.0M377.0 61.5L38872.4 663.0M378.1 61.5L38979.6 663.0M379.3 61.5L39086.9 663.0M380.4 61.5L39194.1 663.0M381.6 61.5L39301.3 663.0M382.7 61.5L39408.5 663.0M385.0 61.5L39623.0 663.0M386.2 61.5L39730.2 663.0M387.3 61.5L39837.5 663.0M388.5 61.5L39944.7 663.0M389.6 61.5L40051.9 663.0M390.7 61.5L40159.1 663.0M391.9 61.5L40266.4 663.0M393.0 61.5L40373.6 663.0M394.2 61.5L40480.8 663.0M396.5 61.5L40695.3 663.0M397.6 61.5L40802.5 663.0M398.8 61.5L40909.7 663.0M399.9 61.5L41017.0 663.0M401.1 61.5L41124.2 663.0M402.2 61.5L41231.4 663.0M403.4 61.5L41338.7 663.0M404.5 61.5L41445.9 663.0M405.7 61.5L41553.1 663.0M407.9 61.5L41767.6 663.0M409.1 61.5L41874.8 663.0M410.2 61.5L41982.0 663.0M411.4 61.5L42089.3 663.0M412.5 61.5L42196.5 663.0M413.7 61.5L42303.7 663.0M414.8 61.5L42411.0 663.0M416.0 61.5L42518.2 663.0M417.1 61.5L42625.4 663.0M419.4 61.5L42839.9 663.0M420.6 61.5L42947.1 663.0M421.7 61.5L43054.3 663.0M422.8 61.5L43161.6 663.0M424.0 61.5L43268.8 663.0M425.1 61.5L43376.0 663.0M426.3 61.5L43483.2 663.0M427.4 61.5L43590.5 663.0M428.6 61.5L43697.7 663.0M430.9 61.5L43912.2 663.0M432.0 61.5L44019.4 663.0M433.2 61.5L44126.6 663.0M434.3 61.5L44233.9 663.0M435.5 61.5L44341.1 663.0M436.6 61.5L44448.3 663.0M437.8 61.5L44555.5 663.0M438.9 61.5L44662.8 663.0M440.0 61.5L44770.0 663.0M442.3 61.5L44984.5 663.0M443.5 61.5L45091.7 663.0M444.6 61.5L45198.9 663.0M445.8 61.5L45306.1 663.0M446.9 61.5L45413.4 663.0M448.1 61.5L45520.6 663.0M449.2 61.5L45627.8 663.0M450.4 61.5L45735.1 663.0M451.5 61.5L45842.3 663.0M453.8 61.5L46056.7 663.0M454.9 61.5L46164.0 663.0M456.1 61.5L46271.2 663.0M457.2 61.5L46378.4 663.0M458.4 61.5L46485.7 663.0M459.5 61.5L46592.9 663.0M460.7 61.5L46700.1 663.0M461.8 61.5L46807.3 663.0M463.0 61.5L46914.6 663.0M465.3 61.5L47129.0 663.0M466.4 61.5L47236.3 663.0M467.6 61.5L47343.5 663.0M468.7 61.5L47450.7 663.0M469.8 61.5L47558.0 663.0M471.0 61.5L47665.2 663.0M472.1 61.5L47772.4 663.0M473.3 61.5L47879.6 663.0M474.4 61.5L47986.9 663.0M476.7 61.5L48201.3 663.0M477.9 61.5L48308.6 663.0M479.0 61.5L48415.8 663.0M480.2 61.5L48523.0 663.0M481.3 61.5L48630.2 663.0M482.5 61.5L48737.5 663.0M483.6 61.5L48844.7 663.0M484.8 61.5L48951.9 663.0M485.9 61.5L49059.2 663.0M488.2 61.5L49273.6 663.0M489.3 61.5L49380.8 663.0M490.5 61.5L49488.1 663.0M491.6 61.5L49595.3 663.0M492.8 61.5L49702.5 663.0M493.9 61.5L49809.8 663.0M495.1 61.5L49917.0 663.0M496.2 61.5L50024.2 663.0M497.4 61.5L50131.5 663.0M499.7 61.5L50345.9 663.0M500.8 61.5L50453.1 663.0M501.9 61.5L50560.4 663.0M503.1 61.5L50667.6 663.0M504.2 61.5L50774.8 663.0M505.4 61.5L50882.1 663.0M506.5 61.5L50989.3 663.0M507.7 61.5L51096.5 663.0M508.8 61.5L51203.7 663.0M511.1 61.5L51418.2 663.0M512.3 61.5L51525.4 663.0M513.4 61.5L51632.7 663.0M514.6 61.5L51739.9 663.0M515.7 61.5L51847.1 663.0M516.8 61.5L51954.3 663.0M518.0 61.5L52061.6 663.0M519.1 61.5L52168.8 663.0M520.3 61.5L52276.0 663.0M522.6 61.5L52490.5 663.0M523.7 61.5L52597.7 663.0M524.9 61.5L52704.9 663.0M526.0 61.5L52812.2 663.0M527.2 61.5L52919.4 663.0M528.3 61.5L53026.6 663.0M529.5 61.5L53133.9 663.0M530.6 61.5L53241.1 663.0M531.8 61.5L53348.3 663.0M534.0 61.5L53562.8 663.0M535.2 61.5L53670.0 663.0M536.3 61.5L53777.2 663.0M537.5 61.5L53884.5 663.0M538.6 61.5L53991.7 663.0M539.8 61.5L54098.9 663.0M540.9 61.5L54206.2 663.0M542.1 61.5L54313.4 663.0M543.2 61.5L54420.6 663.0M545.5 61.5L54635.1 663.0M546.7 61.5L54742.3 663.0M547.8 61.5L54849.5 663.0M548.9 61.5L54956.8 663.0M550.1 61.5L55064.0 663.0M551.2 61.5L55171.2 663.0M552.4 61.5L55278.4 663.0M553.5 61.5L55385.7 663.0M554.7 61.5L55492.9 663.0M557.0 61.5L55707.4 663.0M558.1 61.5L55814.6 663.0M559.3 61.5L55921.8 663.0M560.4 61.5L56029.1 663.0M561.6 61.5L56136.3 663.0M562.7 61.5L56243.5 663.0M563.9 61.5L56350.7 663.0M565.0 61.5L56458.0 663.0M566.1 61.5L56565.2 663.0M568.4 61.5L56779.7 663.0M569.6 61.5L56886.9 663.0M570.7 61.5L56994.1 663.0M571.9 61.5L57101.3 663.0M573.0 61.5L57208.6 663.0M574.2 61.5L57315.8 663.0M575.3 61.5L57423.0 663.0M576.5 61.5L57530.3 663.0M577.6 61.5L57637.5 663.0M579.9 61.5L57851.9 663.0M581.0 61.5L57959.2 663.0M582.2 61.5L58066.4 663.0M583.3 61.5L58173.6 663.0M584.5 61.5L58280.9 663.0M585.6 61.5L58388.1 663.0M586.8 61.5L58495.3 663.0M587.9 61.5L58602.5 663.0M589.1 61.5L58709.8 663.0M591.4 61.5L58924.2 663.0M592.5 61.5L59031.5 663.0M593.7 61.5L59138.7 663.0M594.8 61.5L59245.9 663.0M595.9 61.5L59353.2 663.0M597.1 61.5L59460.4 663.0M598.2 61.5L59567.6 663.0M599.4 61.5L59674.8 663.0M600.5 61.5L59782.1 663.0M602.8 61.5L59996.5 663.0M604.0 61.5L60103.8 663.0M605.1 61.5L60211.0 663.0M606.3 61.5L60318.2 663.0M607.4 61.5L60425.4 663.0M608.6 61.5L60532.7 663.0M609.7 61.5L60639.9 663.0M610.9 61.5L60747.1 663.0M612.0 61.5L60854.4 663.0M614.3 61.5L61068.8 663.0M615.4 61.5L61176.0 663.0M616.6 61.5L61283.3 663.0M617.7 61.5L61390.5 663.0M618.9 61.5L61497.7 663.0M620.0 61.5L61605.0 663.0M621.2 61.5L61712.2 663.0M622.3 61.5L61819.4 663.0M623.5 61.5L61926.7 663.0M625.8 61.5L62141.1 663.0M626.9 61.5L62248.3 663.0M628.0 61.5L62355.6 663.0M629.2 61.5L62462.8 663.0M630.3 61.5L62570.0 663.0M631.5 61.5L62677.3 663.0M632.6 61.5L62784.5 663.0M633.8 61.5L62891.7 663.0M634.9 61.5L62998.9 663.0M637.2 61.5L63213.4 663.0M638.4 61.5L63320.6 663.0M639.5 61.5L63427.9 663.0M640.7 61.5L63535.1 663.0M641.8 61.5L63642.3 663.0M642.9 61.5L63749.5 663.0M644.1 61.5L63856.8 663.0M645.2 61.5L63964.0 663.0M646.4 61.5L64071.2 663.0M648.7 61.5L64285.7 663.0M649.8 61.5L64392.9 663.0M651.0 61.5L64500.1 663.0M652.1 61.5L64607.4 663.0M653.3 61.5L64714.6 663.0M654.4 61.5L64821.8 663.0M655.6 61.5L64929.1 663.0M656.7 61.5L65036.3 663.0M657.9 61.5L65143.5 663.0M660.1 61.5L65358.0 663.0M661.3 61.5L65465.2 663.0M662.4 61.5L65572.4 663.0M663.6 61.5L65679.7 663.0M664.7 61.5L65786.9 663.0M665.9 61.5L65894.1 663.0M667.0 61.5L66001.4 663.0M668.2 61.5L66108.6 663.0M669.3 61.5L66215.8 663.0M671.6 61.5L66430.3 663.0M672.8 61.5L66537.5 663.0M673.9 61.5L66644.7 663.0M675.0 61.5L66752.0 663.0M676.2 61.5L66859.2 663.0M677.3 61.5L66966.4 663.0M678.5 61.5L67073.6 663.0M679.6 61.5L67180.9 663.0M680.8 61.5L67288.1 663.0M683.1 61.5L67502.6 663.0M684.2 61.5L67609.8 663.0M685.4 61.5L67717.0 663.0M686.5 61.5L67824.3 663.0M687.7 61.5L67931.5 663.0M688.8 61.5L68038.7 663.0M690.0 61.5L68145.9 663.0M691.1 61.5L68253.2 663.0M692.2 61.5L68360.4 663.0M694.5 61.5L68574.9 663.0M695.7 61.5L68682.1 663.0M696.8 61.5L68789.3 663.0M698.0 61.5L68896.5 663.0M699.1 61.5L69003.8 663.0M700.3 61.5L69111.0 663.0M701.4 61.5L69218.2 663.0M702.6 61.5L69325.5 663.0M703.7 61.5L69432.7 663.0M706.0 61.5L69647.1 663.0M707.1 61.5L69754.4 663.0M708.3 61.5L69861.6 663.0M709.4 61.5L69968.8 663.0M710.6 61.5L70076.1 663.0M711.7 61.5L70183.3 663.0M712.9 61.5L70290.5 663.0M714.0 61.5L70397.7 663.0M715.2 61.5L70505.0 663.0M717.5 61.5L70719.4 663.0M718.6 61.5L70826.7 663.0M719.8 61.5L70933.9 663.0M720.9 61.5L71041.1 663.0M722.0 61.5L71148.4 663.0M723.2 61.5L71255.6 663.0M724.3 61.5L71362.8 663.0M725.5 61.5L71470.0 663.0M726.6 61.5L71577.3 663.0M728.9 61.5L71791.7 663.0M730.1 61.5L71899.0 663.0M731.2 61.5L72006.2 663.0M732.4 61.5L72113.4 663.0M733.5 61.5L72220.6 663.0M734.7 61.5L72327.9 663.0M735.8 61.5L72435.1 663.0M737.0 61.5L72542.3 663.0M738.1 61.5L72649.6 663.0M740.4 61.5L72864.0 663.0M741.5 61.5L72971.2 663.0M742.7 61.5L73078.5 663.0M743.8 61.5L73185.7 663.0M745.0 61.5L73292.9 663.0M746.1 61.5L73400.2 663.0M747.3 61.5L73507.4 663.0M748.4 61.5L73614.6 663.0M749.6 61.5L73721.9 663.0M751.9 61.5L73936.3 663.0M753.0 61.5L74043.5 663.0M754.1 61.5L74150.8 663.0M755.3 61.5L74258.0 663.0M756.4 61.5L74365.2 663.0M757.6 61.5L74472.5 663.0M758.7 61.5L74579.7 663.0M759.9 61.5L74686.9 663.0M761.0 61.5L74794.1 663.0M763.3 61.5L75008.6 663.0M764.5 61.5L75115.8 663.0M765.6 61.5L75223.1 663.0M766.8 61.5L75330.3 663.0M767.9 61.5L75437.5 663.0M769.0 61.5L75544.7 663.0M770.2 61.5L75652.0 663.0M771.3 61.5L75759.2 663.0M772.5 61.5L75866.4 663.0M774.8 61.5L76080.9 663.0M775.9 61.5L76188.1 663.0M777.1 61.5L76295.3 663.0M778.2 61.5L76402.6 663.0M779.4 61.5L76509.8 663.0M780.5 61.5L76617.0 663.0M781.7 61.5L76724.3 663.0M782.8 61.5L76831.5 663.0M784.0 61.5L76938.7 663.0M786.2 61.5L77153.2 663.0M787.4 61.5L77260.4 663.0M788.5 61.5L77367.6 663.0M789.7 61.5L77474.9 663.0M790.8 61.5L77582.1 663.0M792.0 61.5L77689.3 663.0M793.1 61.5L77796.6 663.0M794.3 61.5L77903.8 663.0M795.4 61.5L78011.0 663.0M797.7 61.5L78225.5 663.0M798.9 61.5L78332.7 663.0M800.0 61.5L78439.9 663.0M801.1 61.5L78547.2 663.0M802.3 61.5L78654.4 663.0M803.4 61.5L78761.6 663.0M804.6 61.5L78868.8 663.0M805.7 61.5L78976.1 663.0M806.9 61.5L79083.3 663.0M809.2 61.5L79297.8 663.0M810.3 61.5L79405.0 663.0M811.5 61.5L79512.2 663.0M812.6 61.5L79619.5 663.0M813.8 61.5L79726.7 663.0M814.9 61.5L79833.9 663.0M816.1 61.5L79941.1 663.0M817.2 61.5L80048.4 663.0M818.3 61.5L80155.6 663.0M820.6 61.5L80370.1 663.0M821.8 61.5L80477.3 663.0M822.9 61.5L80584.5 663.0M824.1 61.5L80691.7 663.0M825.2 61.5L80799.0 663.0M826.4 61.5L80906.2 663.0M827.5 61.5L81013.4 663.0M828.7 61.5L81120.7 663.0M829.8 61.5L81227.9 663.0M832.1 61.5L81442.3 663.0M833.2 61.5L81549.6 663.0M834.4 61.5L81656.8 663.0M835.5 61.5L81764.0 663.0M836.7 61.5L81871.3 663.0M837.8 61.5L81978.5 663.0M839.0 61.5L82085.7 663.0M840.1 61.5L82192.9 663.0M841.3 61.5L82300.2 663.0M843.6 61.5L82514.6 663.0M844.7 61.5L82621.9 663.0M845.9 61.5L82729.1 663.0M847.0 61.5L82836.3 663.0M848.1 61.5L82943.6 663.0M849.3 61.5L83050.8 663.0M850.4 61.5L83158.0 663.0M851.6 61.5L83265.2 663.0M852.7 61.5L83372.5 663.0M855.0 61.5L83586.9 663.0M856.2 61.5L83694.2 663.0M857.3 61.5L83801.4 663.0M858.5 61.5L83908.6 663.0M859.6 61.5L84015.8 663.0M860.8 61.5L84123.1 663.0M861.9 61.5L84230.3 663.0M863.1 61.5L84337.5 663.0M864.2 61.5L84444.8 663.0M866.5 61.5L84659.2 663.0M867.6 61.5L84766.4 663.0M868.8 61.5L84873.7 663.0M869.9 61.5L84980.9 663.0M871.1 61.5L85088.1 663.0M872.2 61.5L85195.4 663.0M873.4 61.5L85302.6 663.0M874.5 61.5L85409.8 663.0M875.7 61.5L85517.1 663.0M878.0 61.5L85731.5 663.0M879.1 61.5L85838.7 663.0M880.2 61.5L85946.0 663.0M881.4 61.5L86053.2 663.0M882.5 61.5L86160.4 663.0M883.7 61.5L86267.7 663.0M884.8 61.5L86374.9 663.0M886.0 61.5L86482.1 663.0M887.1 61.5L86589.3 663.0M889.4 61.5L86803.8 663.0M890.6 61.5L86911.0 663.0M891.7 61.5L87018.3 663.0M892.9 61.5L87125.5 663.0M894.0 61.5L87232.7 663.0M895.1 61.5L87339.9 663.0M896.3 61.5L87447.2 663.0M897.4 61.5L87554.4 663.0M898.6 61.5L87661.6 663.0M900.9 61.5L87876.1 663.0M902.0 61.5L87983.3 663.0M903.2 61.5L88090.5 663.0M904.3 61.5L88197.8 663.0M905.5 61.5L88305.0 663.0M906.6 61.5L88412.2 663.0M907.8 61.5L88519.5 663.0M908.9 61.5L88626.7 663.0M910.1 61.5L88733.9 663.0M912.3 61.5L88948.4 663.0M913.5 61.5L89055.6 663.0M914.6 61.5L89162.8 663.0M915.8 61.5L89270.1 663.0M916.9 61.5L89377.3 663.0M918.1 61.5L89484.5 663.0M919.2 61.5L89591.8 663.0M920.4 61.5L89699.0 663.0M921.5 61.5L89806.2 663.0M923.8 61.5L90020.7 663.0M925.0 61.5L90127.9 663.0M926.1 61.5L90235.1 663.0M927.2 61.5L90342.4 663.0M928.4 61.5L90449.6 663.0M929.5 61.5L90556.8 663.0M930.7 61.5L90664.0 663.0M931.8 61.5L90771.3 663.0M933.0 61.5L90878.5 663.0M935.3 61.5L91093.0 663.0M936.4 61.5L91200.2 663.0M937.6 61.5L91307.4 663.0M938.7 61.5L91414.7 663.0M939.9 61.5L91521.9 663.0M941.0 61.5L91629.1 663.0M942.2 61.5L91736.3 663.0M943.3 61.5L91843.6 663.0M944.4 61.5L91950.8 663.0M946.7 61.5L92165.3 663.0M947.9 61.5L92272.5 663.0M949.0 61.5L92379.7 663.0M950.2 61.5L92486.9 663.0M951.3 61.5L92594.2 663.0M952.5 61.5L92701.4 663.0M953.6 61.5L92808.6 663.0M954.8 61.5L92915.9 663.0M955.9 61.5L93023.1 663.0M958.2 61.5L93237.5 663.0M959.3 61.5L93344.8 663.0M960.5 61.5L93452.0 663.0M961.6 61.5L93559.2 663.0M962.8 61.5L93666.5 663.0M963.9 61.5L93773.7 663.0M965.1 61.5L93880.9 663.0M966.2 61.5L93988.1 663.0M967.4 61.5L94095.4 663.0M969.7 61.5L94309.8 663.0M970.8 61.5L94417.1 663.0M972.0 61.5L94524.3 663.0M973.1 61.5L94631.5 663.0M974.2 61.5L94738.8 663.0M975.4 61.5L94846.0 663.0M976.5 61.5L94953.2 663.0M977.7 61.5L95060.4 663.0M978.8 61.5L95167.7 663.0M981.1 61.5L95382.1 663.0M982.3 61.5L95489.4 663.0M983.4 61.5L95596.6 663.0M984.6 61.5L95703.8 663.0M985.7 61.5L95811.0 663.0M986.9 61.5L95918.3 663.0M988.0 61.5L96025.5 663.0M989.2 61.5L96132.7 663.0M990.3 61.5L96240.0 663.0M992.6 61.5L96454.4 663.0M205.0 61.5L-95668.2 663.0M206.1 61.5L-95560.7 663.0M207.3 61.5L-95453.3 663.0M208.4 61.5L-95345.9 663.0M210.7 61.5L-95131.0 663.0M211.9 61.5L-95023.6 663.0M213.0 61.5L-94916.2 663.0M214.2 61.5L-94808.7 663.0M215.3 61.5L-94701.3 663.0M216.4 61.5L-94593.9 663.0M217.6 61.5L-94486.4 663.0M218.7 61.5L-94379.0 663.0M219.9 61.5L-94271.6 663.0M222.2 61.5L-94056.7 663.0M223.3 61.5L-93949.3 663.0M224.5 61.5L-93841.9 663.0M225.6 61.5L-93734.4 663.0M226.8 61.5L-93627.0 663.0M227.9 61.5L-93519.6 663.0M229.1 61.5L-93412.1 663.0M230.2 61.5L-93304.7 663.0M231.4 61.5L-93197.3 663.0M233.7 61.5L-92982.4 663.0M234.8 61.5L-92875.0 663.0M236.0 61.5L-92767.6 663.0M237.1 61.5L-92660.1 663.0M238.3 61.5L-92552.7 663.0M239.4 61.5L-92445.3 663.0M240.6 61.5L-92337.8 663.0M241.7 61.5L-92230.4 663.0M242.9 61.5L-92123.0 663.0M245.2 61.5L-91908.1 663.0M246.3 61.5L-91800.7 663.0M247.5 61.5L-91693.3 663.0M248.6 61.5L-91585.8 663.0M249.8 61.5L-91478.4 663.0M250.9 61.5L-91371.0 663.0M252.1 61.5L-91263.5 663.0M253.2 61.5L-91156.1 663.0M254.4 61.5L-91048.7 663.0M256.6 61.5L-90833.8 663.0M257.8 61.5L-90726.4 663.0M258.9 61.5L-90619.0 663.0M260.1 61.5L-90511.5 663.0M261.2 61.5L-90404.1 663.0M262.4 61.5L-90296.7 663.0M263.5 61.5L-90189.2 663.0M264.7 61.5L-90081.8 663.0M265.8 61.5L-89974.4 663.0M268.1 61.5L-89759.5 663.0M269.3 61.5L-89652.1 663.0M270.4 61.5L-89544.7 663.0M271.6 61.5L-89437.2 663.0M272.7 61.5L-89329.8 663.0M273.9 61.5L-89222.4 663.0M275.0 61.5L-89114.9 663.0M276.2 61.5L-89007.5 663.0M277.3 61.5L-88900.1 663.0M279.6 61.5L-88685.2 663.0M280.8 61.5L-88577.8 663.0M281.9 61.5L-88470.4 663.0M283.1 61.5L-88362.9 663.0M284.2 61.5L-88255.5 663.0M285.4 61.5L-88148.1 663.0M286.5 61.5L-88040.6 663.0M287.7 61.5L-87933.2 663.0M288.8 61.5L-87825.8 663.0M291.1 61.5L-87610.9 663.0M292.3 61.5L-87503.5 663.0M293.4 61.5L-87396.1 663.0M294.5 61.5L-87288.6 663.0M295.7 61.5L-87181.2 663.0M296.8 61.5L-87073.8 663.0M298.0 61.5L-86966.3 663.0M299.1 61.5L-86858.9 663.0M300.3 61.5L-86751.5 663.0M302.6 61.5L-86536.6 663.0M303.7 61.5L-86429.2 663.0M304.9 61.5L-86321.8 663.0M306.0 61.5L-86214.3 663.0M307.2 61.5L-86106.9 663.0M308.3 61.5L-85999.5 663.0M309.5 61.5L-85892.0 663.0M310.6 61.5L-85784.6 663.0M311.8 61.5L-85677.2 663.0M314.1 61.5L-85462.3 663.0M315.2 61.5L-85354.9 663.0M316.4 61.5L-85247.5 663.0M317.5 61.5L-85140.0 663.0M318.7 61.5L-85032.6 663.0M319.8 61.5L-84925.2 663.0M321.0 61.5L-84817.7 663.0M322.1 61.5L-84710.3 663.0M323.3 61.5L-84602.9 663.0M325.6 61.5L-84388.0 663.0M326.7 61.5L-84280.6 663.0M327.9 61.5L-84173.2 663.0M329.0 61.5L-84065.7 663.0M330.2 61.5L-83958.3 663.0M331.3 61.5L-83850.9 663.0M332.4 61.5L-83743.4 663.0M333.6 61.5L-83636.0 663.0M334.7 61.5L-83528.6 663.0M337.0 61.5L-83313.7 663.0M338.2 61.5L-83206.3 663.0M339.3 61.5L-83098.9 663.0M340.5 61.5L-82991.4 663.0M341.6 61.5L-82884.0 663.0M342.8 61.5L-82776.6 663.0M343.9 61.5L-82669.1 663.0M345.1 61.5L-82561.7 663.0M346.2 61.5L-82454.3 663.0M348.5 61.5L-82239.4 663.0M349.7 61.5L-82132.0 663.0M350.8 61.5L-82024.5 663.0M352.0 61.5L-81917.1 663.0M353.1 61.5L-81809.7 663.0M354.3 61.5L-81702.3 663.0M355.4 61.5L-81594.8 663.0M356.6 61.5L-81487.4 663.0M357.7 61.5L-81380.0 663.0M360.0 61.5L-81165.1 663.0M361.2 61.5L-81057.7 663.0M362.3 61.5L-80950.2 663.0M363.5 61.5L-80842.8 663.0M364.6 61.5L-80735.4 663.0M365.8 61.5L-80628.0 663.0M366.9 61.5L-80520.5 663.0M368.1 61.5L-80413.1 663.0M369.2 61.5L-80305.7 663.0M371.5 61.5L-80090.8 663.0M372.6 61.5L-79983.4 663.0M373.8 61.5L-79875.9 663.0M374.9 61.5L-79768.5 663.0M376.1 61.5L-79661.1 663.0M377.2 61.5L-79553.7 663.0M378.4 61.5L-79446.2 663.0M379.5 61.5L-79338.8 663.0M380.7 61.5L-79231.4 663.0M383.0 61.5L-79016.5 663.0M384.1 61.5L-78909.1 663.0M385.3 61.5L-78801.6 663.0M386.4 61.5L-78694.2 663.0M387.6 61.5L-78586.8 663.0M388.7 61.5L-78479.4 663.0M389.9 61.5L-78371.9 663.0M391.0 61.5L-78264.5 663.0M392.2 61.5L-78157.1 663.0M394.5 61.5L-77942.2 663.0M395.6 61.5L-77834.8 663.0M396.8 61.5L-77727.3 663.0M397.9 61.5L-77619.9 663.0M399.1 61.5L-77512.5 663.0M400.2 61.5L-77405.1 663.0M401.4 61.5L-77297.6 663.0M402.5 61.5L-77190.2 663.0M403.7 61.5L-77082.8 663.0M406.0 61.5L-76867.9 663.0M407.1 61.5L-76760.5 663.0M408.3 61.5L-76653.0 663.0M409.4 61.5L-76545.6 663.0M410.5 61.5L-76438.2 663.0M411.7 61.5L-76330.8 663.0M412.8 61.5L-76223.3 663.0M414.0 61.5L-76115.9 663.0M415.1 61.5L-76008.5 663.0M417.4 61.5L-75793.6 663.0M418.6 61.5L-75686.2 663.0M419.7 61.5L-75578.7 663.0M420.9 61.5L-75471.3 663.0M422.0 61.5L-75363.9 663.0M423.2 61.5L-75256.5 663.0M424.3 61.5L-75149.0 663.0M425.5 61.5L-75041.6 663.0M426.6 61.5L-74934.2 663.0M428.9 61.5L-74719.3 663.0M430.1 61.5L-74611.9 663.0M431.2 61.5L-74504.4 663.0M432.4 61.5L-74397.0 663.0M433.5 61.5L-74289.6 663.0M434.7 61.5L-74182.2 663.0M435.8 61.5L-74074.7 663.0M437.0 61.5L-73967.3 663.0M438.1 61.5L-73859.9 663.0M440.4 61.5L-73645.0 663.0M441.6 61.5L-73537.6 663.0M442.7 61.5L-73430.1 663.0M443.9 61.5L-73322.7 663.0M445.0 61.5L-73215.3 663.0M446.2 61.5L-73107.9 663.0M447.3 61.5L-73000.4 663.0M448.4 61.5L-72893.0 663.0M449.6 61.5L-72785.6 663.0M451.9 61.5L-72570.7 663.0M453.0 61.5L-72463.3 663.0M454.2 61.5L-72355.8 663.0M455.3 61.5L-72248.4 663.0M456.5 61.5L-72141.0 663.0M457.6 61.5L-72033.6 663.0M458.8 61.5L-71926.1 663.0M459.9 61.5L-71818.7 663.0M461.1 61.5L-71711.3 663.0M463.4 61.5L-71496.4 663.0M464.5 61.5L-71389.0 663.0M465.7 61.5L-71281.5 663.0M466.8 61.5L-71174.1 663.0M468.0 61.5L-71066.7 663.0M469.1 61.5L-70959.3 663.0M470.3 61.5L-70851.8 663.0M471.4 61.5L-70744.4 663.0M472.6 61.5L-70637.0 663.0M474.9 61.5L-70422.1 663.0M476.0 61.5L-70314.7 663.0M477.2 61.5L-70207.2 663.0M478.3 61.5L-70099.8 663.0M479.5 61.5L-69992.4 663.0M480.6 61.5L-69885.0 663.0M481.8 61.5L-69777.5 663.0M482.9 61.5L-69670.1 663.0M484.1 61.5L-69562.7 663.0M486.4 61.5L-69347.8 663.0M487.5 61.5L-69240.4 663.0M488.6 61.5L-69132.9 663.0M489.8 61.5L-69025.5 663.0M490.9 61.5L-68918.1 663.0M492.1 61.5L-68810.6 663.0M493.2 61.5L-68703.2 663.0M494.4 61.5L-68595.8 663.0M495.5 61.5L-68488.4 663.0M497.8 61.5L-68273.5 663.0M499.0 61.5L-68166.1 663.0M500.1 61.5L-68058.6 663.0M501.3 61.5L-67951.2 663.0M502.4 61.5L-67843.8 663.0M503.6 61.5L-67736.3 663.0M504.7 61.5L-67628.9 663.0M505.9 61.5L-67521.5 663.0M507.0 61.5L-67414.1 663.0M509.3 61.5L-67199.2 663.0M510.5 61.5L-67091.8 663.0M511.6 61.5L-66984.3 663.0M512.8 61.5L-66876.9 663.0M513.9 61.5L-66769.5 663.0M515.1 61.5L-66662.0 663.0M516.2 61.5L-66554.6 663.0M517.4 61.5L-66447.2 663.0M518.5 61.5L-66339.8 663.0M520.8 61.5L-66124.9 663.0M522.0 61.5L-66017.5 663.0M523.1 61.5L-65910.0 663.0M524.3 61.5L-65802.6 663.0M525.4 61.5L-65695.2 663.0M526.5 61.5L-65587.7 663.0M527.7 61.5L-65480.3 663.0M528.8 61.5L-65372.9 663.0M530.0 61.5L-65265.5 663.0M532.3 61.5L-65050.6 663.0M533.4 61.5L-64943.2 663.0M534.6 61.5L-64835.7 663.0M535.7 61.5L-64728.3 663.0M536.9 61.5L-64620.9 663.0M538.0 61.5L-64513.4 663.0M539.2 61.5L-64406.0 663.0M540.3 61.5L-64298.6 663.0M541.5 61.5L-64191.2 663.0M543.8 61.5L-63976.3 663.0M544.9 61.5L-63868.9 663.0M546.1 61.5L-63761.4 663.0M547.2 61.5L-63654.0 663.0M548.4 61.5L-63546.6 663.0M549.5 61.5L-63439.1 663.0M550.7 61.5L-63331.7 663.0M551.8 61.5L-63224.3 663.0M553.0 61.5L-63116.9 663.0M555.3 61.5L-62902.0 663.0M556.4 61.5L-62794.6 663.0M557.6 61.5L-62687.1 663.0M558.7 61.5L-62579.7 663.0M559.9 61.5L-62472.3 663.0M561.0 61.5L-62364.8 663.0M562.2 61.5L-62257.4 663.0M563.3 61.5L-62150.0 663.0M564.4 61.5L-62042.6 663.0M566.7 61.5L-61827.7 663.0M567.9 61.5L-61720.3 663.0M569.0 61.5L-61612.8 663.0M570.2 61.5L-61505.4 663.0M571.3 61.5L-61398.0 663.0M572.5 61.5L-61290.5 663.0M573.6 61.5L-61183.1 663.0M574.8 61.5L-61075.7 663.0M575.9 61.5L-60968.3 663.0M578.2 61.5L-60753.4 663.0M579.4 61.5L-60646.0 663.0M580.5 61.5L-60538.5 663.0M581.7 61.5L-60431.1 663.0M582.8 61.5L-60323.7 663.0M584.0 61.5L-60216.2 663.0M585.1 61.5L-60108.8 663.0M586.3 61.5L-60001.4 663.0M587.4 61.5L-59894.0 663.0M589.7 61.5L-59679.1 663.0M590.9 61.5L-59571.7 663.0M592.0 61.5L-59464.2 663.0M593.2 61.5L-59356.8 663.0M594.3 61.5L-59249.4 663.0M595.5 61.5L-59141.9 663.0M596.6 61.5L-59034.5 663.0M597.8 61.5L-58927.1 663.0M598.9 61.5L-58819.7 663.0M601.2 61.5L-58604.8 663.0M602.3 61.5L-58497.4 663.0M603.5 61.5L-58389.9 663.0M604.6 61.5L-58282.5 663.0M605.8 61.5L-58175.1 663.0M606.9 61.5L-58067.6 663.0M608.1 61.5L-57960.2 663.0M609.2 61.5L-57852.8 663.0M610.4 61.5L-57745.4 663.0M612.7 61.5L-57530.5 663.0M613.8 61.5L-57423.1 663.0M615.0 61.5L-57315.6 663.0M616.1 61.5L-57208.2 663.0M617.3 61.5L-57100.8 663.0M618.4 61.5L-56993.3 663.0M619.6 61.5L-56885.9 663.0M620.7 61.5L-56778.5 663.0M621.9 61.5L-56671.1 663.0M624.2 61.5L-56456.2 663.0M625.3 61.5L-56348.8 663.0M626.5 61.5L-56241.3 663.0M627.6 61.5L-56133.9 663.0M628.8 61.5L-56026.5 663.0M629.9 61.5L-55919.0 663.0M631.1 61.5L-55811.6 663.0M632.2 61.5L-55704.2 663.0M633.4 61.5L-55596.7 663.0M635.7 61.5L-55381.9 663.0M636.8 61.5L-55274.5 663.0M638.0 61.5L-55167.0 663.0M639.1 61.5L-55059.6 663.0M640.3 61.5L-54952.2 663.0M641.4 61.5L-54844.7 663.0M642.5 61.5L-54737.3 663.0M643.7 61.5L-54629.9 663.0M644.8 61.5L-54522.4 663.0M647.1 61.5L-54307.6 663.0M648.3 61.5L-54200.2 663.0M649.4 61.5L-54092.7 663.0M650.6 61.5L-53985.3 663.0M651.7 61.5L-53877.9 663.0M652.9 61.5L-53770.4 663.0M654.0 61.5L-53663.0 663.0M655.2 61.5L-53555.6 663.0M656.3 61.5L-53448.1 663.0M658.6 61.5L-53233.3 663.0M659.8 61.5L-53125.9 663.0M660.9 61.5L-53018.4 663.0M662.1 61.5L-52911.0 663.0M663.2 61.5L-52803.6 663.0M664.4 61.5L-52696.1 663.0M665.5 61.5L-52588.7 663.0M666.7 61.5L-52481.3 663.0M667.8 61.5L-52373.8 663.0M670.1 61.5L-52159.0 663.0M671.3 61.5L-52051.6 663.0M672.4 61.5L-51944.1 663.0M673.6 61.5L-51836.7 663.0M674.7 61.5L-51729.3 663.0M675.9 61.5L-51621.8 663.0M677.0 61.5L-51514.4 663.0M678.2 61.5L-51407.0 663.0M679.3 61.5L-51299.5 663.0M681.6 61.5L-51084.7 663.0M682.7 61.5L-50977.3 663.0M683.9 61.5L-50869.8 663.0M685.0 61.5L-50762.4 663.0M686.2 61.5L-50655.0 663.0M687.3 61.5L-50547.5 663.0M688.5 61.5L-50440.1 663.0M689.6 61.5L-50332.7 663.0M690.8 61.5L-50225.2 663.0M693.1 61.5L-50010.4 663.0M694.2 61.5L-49903.0 663.0M695.4 61.5L-49795.5 663.0M696.5 61.5L-49688.1 663.0M697.7 61.5L-49580.7 663.0M698.8 61.5L-49473.2 663.0M700.0 61.5L-49365.8 663.0M701.1 61.5L-49258.4 663.0M702.3 61.5L-49150.9 663.0M704.6 61.5L-48936.1 663.0M705.7 61.5L-48828.7 663.0M706.9 61.5L-48721.2 663.0M708.0 61.5L-48613.8 663.0M709.2 61.5L-48506.4 663.0M710.3 61.5L-48398.9 663.0M711.5 61.5L-48291.5 663.0M712.6 61.5L-48184.1 663.0M713.8 61.5L-48076.6 663.0M716.1 61.5L-47861.8 663.0M717.2 61.5L-47754.4 663.0M718.3 61.5L-47646.9 663.0M719.5 61.5L-47539.5 663.0M720.6 61.5L-47432.1 663.0M721.8 61.5L-47324.6 663.0M722.9 61.5L-47217.2 663.0M724.1 61.5L-47109.8 663.0M725.2 61.5L-47002.3 663.0M727.5 61.5L-46787.5 663.0M728.7 61.5L-46680.1 663.0M729.8 61.5L-46572.6 663.0M731.0 61.5L-46465.2 663.0M732.1 61.5L-46357.8 663.0M733.3 61.5L-46250.3 663.0M734.4 61.5L-46142.9 663.0M735.6 61.5L-46035.5 663.0M736.7 61.5L-45928.0 663.0M739.0 61.5L-45713.2 663.0M740.2 61.5L-45605.8 663.0M741.3 61.5L-45498.3 663.0M742.5 61.5L-45390.9 663.0M743.6 61.5L-45283.5 663.0M744.8 61.5L-45176.0 663.0M745.9 61.5L-45068.6 663.0M747.1 61.5L-44961.2 663.0M748.2 61.5L-44853.7 663.0M750.5 61.5L-44638.9 663.0M751.7 61.5L-44531.5 663.0M752.8 61.5L-44424.0 663.0M754.0 61.5L-44316.6 663.0M755.1 61.5L-44209.2 663.0M756.3 61.5L-44101.7 663.0M757.4 61.5L-43994.3 663.0M758.5 61.5L-43886.9 663.0M759.7 61.5L-43779.4 663.0M762.0 61.5L-43564.6 663.0M763.1 61.5L-43457.2 663.0M764.3 61.5L-43349.7 663.0M765.4 61.5L-43242.3 663.0M766.6 61.5L-43134.9 663.0M767.7 61.5L-43027.4 663.0M768.9 61.5L-42920.0 663.0M770.0 61.5L-42812.6 663.0M771.2 61.5L-42705.1 663.0M773.5 61.5L-42490.3 663.0M774.6 61.5L-42382.8 663.0M775.8 61.5L-42275.4 663.0M776.9 61.5L-42168.0 663.0M778.1 61.5L-42060.6 663.0M779.2 61.5L-41953.1 663.0M780.4 61.5L-41845.7 663.0M781.5 61.5L-41738.3 663.0M782.7 61.5L-41630.8 663.0M785.0 61.5L-41416.0 663.0M786.1 61.5L-41308.5 663.0M787.3 61.5L-41201.1 663.0M788.4 61.5L-41093.7 663.0M789.6 61.5L-40986.3 663.0M790.7 61.5L-40878.8 663.0M791.9 61.5L-40771.4 663.0M793.0 61.5L-40664.0 663.0M794.2 61.5L-40556.5 663.0M796.4 61.5L-40341.7 663.0M797.6 61.5L-40234.2 663.0M798.7 61.5L-40126.8 663.0M799.9 61.5L-40019.4 663.0M801.0 61.5L-39912.0 663.0M802.2 61.5L-39804.5 663.0M803.3 61.5L-39697.1 663.0M804.5 61.5L-39589.7 663.0M805.6 61.5L-39482.2 663.0M807.9 61.5L-39267.4 663.0M809.1 61.5L-39159.9 663.0M810.2 61.5L-39052.5 663.0M811.4 61.5L-38945.1 663.0M812.5 61.5L-38837.7 663.0M813.7 61.5L-38730.2 663.0M814.8 61.5L-38622.8 663.0M816.0 61.5L-38515.4 663.0M817.1 61.5L-38407.9 663.0M819.4 61.5L-38193.1 663.0M820.6 61.5L-38085.6 663.0M821.7 61.5L-37978.2 663.0M822.9 61.5L-37870.8 663.0M824.0 61.5L-37763.4 663.0M825.2 61.5L-37655.9 663.0M826.3 61.5L-37548.5 663.0M827.5 61.5L-37441.1 663.0M828.6 61.5L-37333.6 663.0M830.9 61.5L-37118.8 663.0M832.1 61.5L-37011.3 663.0M833.2 61.5L-36903.9 663.0M834.3 61.5L-36796.5 663.0M835.5 61.5L-36689.1 663.0M836.6 61.5L-36581.6 663.0M837.8 61.5L-36474.2 663.0M838.9 61.5L-36366.8 663.0M840.1 61.5L-36259.3 663.0M842.4 61.5L-36044.5 663.0M843.5 61.5L-35937.0 663.0M844.7 61.5L-35829.6 663.0M845.8 61.5L-35722.2 663.0M847.0 61.5L-35614.8 663.0M848.1 61.5L-35507.3 663.0M849.3 61.5L-35399.9 663.0M850.4 61.5L-35292.5 663.0M851.6 61.5L-35185.0 663.0M853.9 61.5L-34970.2 663.0M855.0 61.5L-34862.7 663.0M856.2 61.5L-34755.3 663.0M857.3 61.5L-34647.9 663.0M858.5 61.5L-34540.5 663.0M859.6 61.5L-34433.0 663.0M860.8 61.5L-34325.6 663.0M861.9 61.5L-34218.2 663.0M863.1 61.5L-34110.7 663.0M865.4 61.5L-33895.9 663.0M866.5 61.5L-33788.4 663.0M867.7 61.5L-33681.0 663.0M868.8 61.5L-33573.6 663.0M870.0 61.5L-33466.2 663.0M871.1 61.5L-33358.7 663.0M872.3 61.5L-33251.3 663.0M873.4 61.5L-33143.9 663.0M874.5 61.5L-33036.4 663.0M876.8 61.5L-32821.6 663.0M878.0 61.5L-32714.1 663.0M879.1 61.5L-32606.7 663.0M880.3 61.5L-32499.3 663.0M881.4 61.5L-32391.9 663.0M882.6 61.5L-32284.4 663.0M883.7 61.5L-32177.0 663.0M884.9 61.5L-32069.6 663.0M886.0 61.5L-31962.1 663.0M888.3 61.5L-31747.3 663.0M889.5 61.5L-31639.8 663.0M890.6 61.5L-31532.4 663.0M891.8 61.5L-31425.0 663.0M892.9 61.5L-31317.6 663.0M894.1 61.5L-31210.1 663.0M895.2 61.5L-31102.7 663.0M896.4 61.5L-30995.3 663.0M897.5 61.5L-30887.8 663.0M899.8 61.5L-30673.0 663.0M901.0 61.5L-30565.5 663.0M902.1 61.5L-30458.1 663.0M903.3 61.5L-30350.7 663.0M904.4 61.5L-30243.2 663.0M905.6 61.5L-30135.8 663.0M906.7 61.5L-30028.4 663.0M907.9 61.5L-29921.0 663.0M909.0 61.5L-29813.5 663.0M911.3 61.5L-29598.7 663.0M912.4 61.5L-29491.2 663.0M913.6 61.5L-29383.8 663.0M914.7 61.5L-29276.4 663.0M915.9 61.5L-29168.9 663.0M917.0 61.5L-29061.5 663.0M918.2 61.5L-28954.1 663.0M919.3 61.5L-28846.7 663.0M920.5 61.5L-28739.2 663.0M922.8 61.5L-28524.4 663.0M923.9 61.5L-28416.9 663.0M925.1 61.5L-28309.5 663.0M926.2 61.5L-28202.1 663.0M927.4 61.5L-28094.6 663.0M928.5 61.5L-27987.2 663.0M929.7 61.5L-27879.8 663.0M930.8 61.5L-27772.4 663.0M932.0 61.5L-27664.9 663.0M934.3 61.5L-27450.1 663.0M935.4 61.5L-27342.6 663.0M936.6 61.5L-27235.2 663.0M937.7 61.5L-27127.8 663.0M938.9 61.5L-27020.3 663.0M940.0 61.5L-26912.9 663.0M941.2 61.5L-26805.5 663.0M942.3 61.5L-26698.1 663.0M943.5 61.5L-26590.6 663.0M945.8 61.5L-26375.8 663.0M946.9 61.5L-26268.3 663.0M948.1 61.5L-26160.9 663.0M949.2 61.5L-26053.5 663.0M950.3 61.5L-25946.0 663.0M951.5 61.5L-25838.6 663.0M952.6 61.5L-25731.2 663.0M953.8 61.5L-25623.8 663.0M954.9 61.5L-25516.3 663.0M957.2 61.5L-25301.5 663.0M958.4 61.5L-25194.0 663.0M959.5 61.5L-25086.6 663.0M960.7 61.5L-24979.2 663.0M961.8 61.5L-24871.7 663.0M963.0 61.5L-24764.3 663.0M964.1 61.5L-24656.9 663.0M965.3 61.5L-24549.5 663.0M966.4 61.5L-24442.0 663.0M968.7 61.5L-24227.2 663.0M969.9 61.5L-24119.7 663.0M971.0 61.5L-24012.3 663.0M972.2 61.5L-23904.9 663.0M973.3 61.5L-23797.4 663.0M974.5 61.5L-23690.0 663.0M975.6 61.5L-23582.6 663.0M976.8 61.5L-23475.2 663.0M977.9 61.5L-23367.7 663.0M980.2 61.5L-23152.9 663.0M981.4 61.5L-23045.4 663.0M982.5 61.5L-22938.0 663.0M983.7 61.5L-22830.6 663.0M984.8 61.5L-22723.1 663.0M986.0 61.5L-22615.7 663.0M987.1 61.5L-22508.3 663.0M988.2 61.5L-22400.9 663.0M989.4 61.5L-22293.4 663.0M991.7 61.5L-22078.6 663.0M992.8 61.5L-21971.1 663.0M994.0 61.5L-21863.7 663.0M995.1 61.5L-21756.3 663.0M996.3 61.5L-21648.8 663.0M997.4 61.5L-21541.4 663.0M998.6 61.5L-21434.0 663.0M999.7 61.5L-21326.6 663.0M1000.9 61.5L-21219.1 663.0M1003.2 61.5L-21004.3 663.0M1004.3 61.5L-20896.8 663.0M1005.5 61.5L-20789.4 663.0M1006.6 61.5L-20682.0 663.0M1007.8 61.5L-20574.5 663.0M1008.9 61.5L-20467.1 663.0M1010.1 61.5L-20359.7 663.0M1011.2 61.5L-20252.3 663.0M1012.4 61.5L-20144.8 663.0M1014.7 61.5L-19930.0 663.0M1015.8 61.5L-19822.5 663.0M1017.0 61.5L-19715.1 663.0M1018.1 61.5L-19607.7 663.0M1019.3 61.5L-19500.2 663.0M1020.4 61.5L-19392.8 663.0M1021.6 61.5L-19285.4 663.0M1022.7 61.5L-19178.0 663.0M1023.9 61.5L-19070.5 663.0M1026.2 61.5L-18855.7 663.0M1027.3 61.5L-18748.2 663.0M1028.4 61.5L-18640.8 663.0M1029.6 61.5L-18533.4 663.0M1030.7 61.5L-18425.9 663.0M1031.9 61.5L-18318.5 663.0M1033.0 61.5L-18211.1 663.0M1034.2 61.5L-18103.7 663.0M1035.3 61.5L-17996.2 663.0M1037.6 61.5L-17781.4 663.0M1038.8 61.5L-17673.9 663.0M1039.9 61.5L-17566.5 663.0M1041.1 61.5L-17459.1 663.0M1042.2 61.5L-17351.6 663.0M1043.4 61.5L-17244.2 663.0M1044.5 61.5L-17136.8 663.0M1045.7 61.5L-17029.3 663.0M1046.8 61.5L-16921.9 663.0M1049.1 61.5L-16707.1 663.0M1050.3 61.5L-16599.6 663.0M1051.4 61.5L-16492.2 663.0M1052.6 61.5L-16384.8 663.0M1053.7 61.5L-16277.3 663.0M1054.9 61.5L-16169.9 663.0M1056.0 61.5L-16062.5 663.0M1057.2 61.5L-15955.0 663.0M1058.3 61.5L-15847.6 663.0M1060.6 61.5L-15632.8 663.0M1061.8 61.5L-15525.3 663.0M1062.9 61.5L-15417.9 663.0M1064.1 61.5L-15310.5 663.0M1065.2 61.5L-15203.0 663.0M1066.3 61.5L-15095.6 663.0M1067.5 61.5L-14988.2 663.0M1068.6 61.5L-14880.7 663.0M1069.8 61.5L-14773.3 663.0M1072.1 61.5L-14558.5 663.0M1073.2 61.5L-14451.0 663.0M1074.4 61.5L-14343.6 663.0M1075.5 61.5L-14236.2 663.0M1076.7 61.5L-14128.7 663.0M1077.8 61.5L-14021.3 663.0M1079.0 61.5L-13913.9 663.0M1080.1 61.5L-13806.4 663.0M1081.3 61.5L-13699.0 663.0M1083.6 61.5L-13484.2 663.0M1084.7 61.5L-13376.7 663.0M1085.9 61.5L-13269.3 663.0M1087.0 61.5L-13161.9 663.0M1088.2 61.5L-13054.4 663.0M1089.3 61.5L-12947.0 663.0M1090.5 61.5L-12839.6 663.0M1091.6 61.5L-12732.1 663.0M1092.8 61.5L-12624.7 663.0M1095.1 61.5L-12409.9 663.0M1096.2 61.5L-12302.4 663.0M1097.4 61.5L-12195.0 663.0M1098.5 61.5L-12087.6 663.0M1099.7 61.5L-11980.1 663.0M1100.8 61.5L-11872.7 663.0M1102.0 61.5L-11765.3 663.0M1103.1 61.5L-11657.8 663.0M1104.2 61.5L-11550.4 663.0M1106.5 61.5L-11335.6 663.0M1107.7 61.5L-11228.1 663.0M1108.8 61.5L-11120.7 663.0M1110.0 61.5L-11013.3 663.0M1111.1 61.5L-10905.8 663.0M1112.3 61.5L-10798.4 663.0M1113.4 61.5L-10691.0 663.0M1114.6 61.5L-10583.5 663.0M1115.7 61.5L-10476.1 663.0M1118.0 61.5L-10261.3 663.0M1119.2 61.5L-10153.8 663.0M1120.3 61.5L-10046.4 663.0M1121.5 61.5L-9939.0 663.0M1122.6 61.5L-9831.5 663.0M1123.8 61.5L-9724.1 663.0M1124.9 61.5L-9616.7 663.0M1126.1 61.5L-9509.2 663.0M1127.2 61.5L-9401.8 663.0M1129.5 61.5L-9187.0 663.0M1130.7 61.5L-9079.5 663.0M1131.8 61.5L-8972.1 663.0M1133.0 61.5L-8864.7 663.0M1134.1 61.5L-8757.2 663.0M1135.3 61.5L-8649.8 663.0M1136.4 61.5L-8542.4 663.0M1137.6 61.5L-8434.9 663.0M1138.7 61.5L-8327.5 663.0M1141.0 61.5L-8112.7 663.0M1142.2 61.5L-8005.2 663.0M1143.3 61.5L-7897.8 663.0M1144.4 61.5L-7790.4 663.0M1145.6 61.5L-7682.9 663.0M1146.7 61.5L-7575.5 663.0M1147.9 61.5L-7468.1 663.0M1149.0 61.5L-7360.6 663.0M1150.2 61.5L-7253.2 663.0M1152.5 61.5L-7038.4 663.0M1153.6 61.5L-6930.9 663.0M1154.8 61.5L-6823.5 663.0M1155.9 61.5L-6716.1 663.0M1157.1 61.5L-6608.6 663.0M1158.2 61.5L-6501.2 663.0M1159.4 61.5L-6393.8 663.0M1160.5 61.5L-6286.3 663.0M1161.7 61.5L-6178.9 663.0M1164.0 61.5L-5964.1 663.0M1165.1 61.5L-5856.6 663.0M1166.3 61.5L-5749.2 663.0M1167.4 61.5L-5641.8 663.0M1168.6 61.5L-5534.3 663.0M1169.7 61.5L-5426.9 663.0M1170.9 61.5L-5319.5 663.0M1172.0 61.5L-5212.0 663.0M1173.2 61.5L-5104.6 663.0M1175.5 61.5L-4889.8 663.0M1176.6 61.5L-4782.3 663.0M1177.8 61.5L-4674.9 663.0M1178.9 61.5L-4567.5 663.0M1180.1 61.5L-4460.0 663.0M1181.2 61.5L-4352.6 663.0M1182.3 61.5L-4245.2 663.0M1183.5 61.5L-4137.7 663.0M1184.6 61.5L-4030.3 663.0M1186.9 61.5L-3815.4 663.0M1188.1 61.5L-3708.0 663.0M1189.2 61.5L-3600.6 663.0M1190.4 61.5L-3493.2 663.0M1191.5 61.5L-3385.7 663.0M1192.7 61.5L-3278.3 663.0M1193.8 61.5L-3170.9 663.0M1195.0 61.5L-3063.4 663.0M1196.1 61.5L-2956.0 663.0M1198.4 61.5L-2741.1 663.0M1199.6 61.5L-2633.7 663.0M1200.7 61.5L-2526.3 663.0M1201.9 61.5L-2418.9 663.0M1203.0 61.5L-2311.4 663.0M1204.2 61.5L-2204.0 663.0M1205.3 61.5L-2096.6 663.0M1206.5 61.5L-1989.1 663.0M1207.6 61.5L-1881.7 663.0M1209.9 61.5L-1666.8 663.0M1211.1 61.5L-1559.4 663.0M1212.2 61.5L-1452.0 663.0M1213.4 61.5L-1344.6 663.0M1214.5 61.5L-1237.1 663.0M1215.7 61.5L-1129.7 663.0M1216.8 61.5L-1022.3 663.0M1218.0 61.5L-914.8 663.0M1219.1 61.5L-807.4 663.0M1221.4 61.5L-592.5 663.0M1222.5 61.5L-485.1 663.0M1223.7 61.5L-377.7 663.0M1224.8 61.5L-270.3 663.0M1226.0 61.5L-162.8 663.0M1227.1 61.5L-55.4 663.0M1228.3 61.5L52.0 663.0M1229.4 61.5L159.5 663.0M1230.6 61.5L266.9 663.0M1232.9 61.5L481.8 663.0M1234.0 61.5L589.2 663.0M1235.2 61.5L696.6 663.0M1236.3 61.5L804.0 663.0M1237.5 61.5L911.5 663.0M1238.6 61.5L1018.9 663.0M1239.8 61.5L1126.3 663.0M1240.9 61.5L1233.8 663.0" stroke="#565656" stroke-width="0.85" stroke-opacity="1" fill="none"/></g><g mask="url(#mMaj)"><path d="M-40.3 61.5L-159.0 663.0M-28.8 61.5L913.3 663.0M-17.4 61.5L1985.6 663.0M-5.9 61.5L3057.9 663.0M5.6 61.5L4130.2 663.0M17.0 61.5L5202.5 663.0M28.5 61.5L6274.8 663.0M40.0 61.5L7347.0 663.0M51.4 61.5L8419.3 663.0M62.9 61.5L9491.6 663.0M74.4 61.5L10563.9 663.0M85.8 61.5L11636.2 663.0M97.3 61.5L12708.5 663.0M108.7 61.5L13780.8 663.0M120.2 61.5L14853.1 663.0M131.7 61.5L15925.4 663.0M143.1 61.5L16997.7 663.0M154.6 61.5L18070.0 663.0M166.1 61.5L19142.2 663.0M177.5 61.5L20214.5 663.0M189.0 61.5L21286.8 663.0M200.5 61.5L22359.1 663.0M211.9 61.5L23431.4 663.0M223.4 61.5L24503.7 663.0M234.8 61.5L25576.0 663.0M246.3 61.5L26648.3 663.0M257.8 61.5L27720.6 663.0M269.2 61.5L28792.9 663.0M280.7 61.5L29865.2 663.0M292.2 61.5L30937.4 663.0M303.6 61.5L32009.7 663.0M315.1 61.5L33082.0 663.0M326.6 61.5L34154.3 663.0M338.0 61.5L35226.6 663.0M349.5 61.5L36298.9 663.0M360.9 61.5L37371.2 663.0M372.4 61.5L38443.5 663.0M383.9 61.5L39515.8 663.0M395.3 61.5L40588.1 663.0M406.8 61.5L41660.4 663.0M418.3 61.5L42732.6 663.0M429.7 61.5L43804.9 663.0M441.2 61.5L44877.2 663.0M452.7 61.5L45949.5 663.0M464.1 61.5L47021.8 663.0M475.6 61.5L48094.1 663.0M487.0 61.5L49166.4 663.0M498.5 61.5L50238.7 663.0M510.0 61.5L51311.0 663.0M521.4 61.5L52383.3 663.0M532.9 61.5L53455.6 663.0M544.4 61.5L54527.8 663.0M555.8 61.5L55600.1 663.0M567.3 61.5L56672.4 663.0M578.8 61.5L57744.7 663.0M590.2 61.5L58817.0 663.0M601.7 61.5L59889.3 663.0M613.1 61.5L60961.6 663.0M624.6 61.5L62033.9 663.0M636.1 61.5L63106.2 663.0M647.5 61.5L64178.5 663.0M659.0 61.5L65250.8 663.0M670.5 61.5L66323.0 663.0M681.9 61.5L67395.3 663.0M693.4 61.5L68467.6 663.0M704.9 61.5L69539.9 663.0M716.3 61.5L70612.2 663.0M727.8 61.5L71684.5 663.0M739.2 61.5L72756.8 663.0M750.7 61.5L73829.1 663.0M762.2 61.5L74901.4 663.0M773.6 61.5L75973.7 663.0M785.1 61.5L77046.0 663.0M796.6 61.5L78118.2 663.0M808.0 61.5L79190.5 663.0M819.5 61.5L80262.8 663.0M831.0 61.5L81335.1 663.0M842.4 61.5L82407.4 663.0M853.9 61.5L83479.7 663.0M865.3 61.5L84552.0 663.0M876.8 61.5L85624.3 663.0M888.3 61.5L86696.6 663.0M899.7 61.5L87768.9 663.0M911.2 61.5L88841.2 663.0M922.7 61.5L89913.4 663.0M934.1 61.5L90985.7 663.0M945.6 61.5L92058.0 663.0M957.1 61.5L93130.3 663.0M968.5 61.5L94202.6 663.0M980.0 61.5L95274.9 663.0M991.4 61.5L96347.2 663.0M209.6 61.5L-95238.4 663.0M221.0 61.5L-94164.1 663.0M232.5 61.5L-93089.8 663.0M244.0 61.5L-92015.5 663.0M255.5 61.5L-90941.2 663.0M267.0 61.5L-89866.9 663.0M278.5 61.5L-88792.6 663.0M290.0 61.5L-87718.3 663.0M301.4 61.5L-86644.0 663.0M312.9 61.5L-85569.7 663.0M324.4 61.5L-84495.4 663.0M335.9 61.5L-83421.1 663.0M347.4 61.5L-82346.8 663.0M358.9 61.5L-81272.5 663.0M370.4 61.5L-80198.2 663.0M381.8 61.5L-79123.9 663.0M393.3 61.5L-78049.6 663.0M404.8 61.5L-76975.3 663.0M416.3 61.5L-75901.0 663.0M427.8 61.5L-74826.7 663.0M439.3 61.5L-73752.4 663.0M450.7 61.5L-72678.1 663.0M462.2 61.5L-71603.8 663.0M473.7 61.5L-70529.5 663.0M485.2 61.5L-69455.2 663.0M496.7 61.5L-68380.9 663.0M508.2 61.5L-67306.6 663.0M519.7 61.5L-66232.3 663.0M531.1 61.5L-65158.0 663.0M542.6 61.5L-64083.7 663.0M554.1 61.5L-63009.4 663.0M565.6 61.5L-61935.1 663.0M577.1 61.5L-60860.8 663.0M588.6 61.5L-59786.5 663.0M600.1 61.5L-58712.2 663.0M611.5 61.5L-57637.9 663.0M623.0 61.5L-56563.6 663.0M634.5 61.5L-55489.3 663.0M646.0 61.5L-54415.0 663.0M657.5 61.5L-53340.7 663.0M669.0 61.5L-52266.4 663.0M680.4 61.5L-51192.1 663.0M691.9 61.5L-50117.8 663.0M703.4 61.5L-49043.5 663.0M714.9 61.5L-47969.2 663.0M726.4 61.5L-46894.9 663.0M737.9 61.5L-45820.6 663.0M749.4 61.5L-44746.3 663.0M760.8 61.5L-43672.0 663.0M772.3 61.5L-42597.7 663.0M783.8 61.5L-41523.4 663.0M795.3 61.5L-40449.1 663.0M806.8 61.5L-39374.8 663.0M818.3 61.5L-38300.5 663.0M829.8 61.5L-37226.2 663.0M841.2 61.5L-36151.9 663.0M852.7 61.5L-35077.6 663.0M864.2 61.5L-34003.3 663.0M875.7 61.5L-32929.0 663.0M887.2 61.5L-31854.7 663.0M898.7 61.5L-30780.4 663.0M910.2 61.5L-29706.1 663.0M921.6 61.5L-28631.8 663.0M933.1 61.5L-27557.5 663.0M944.6 61.5L-26483.2 663.0M956.1 61.5L-25408.9 663.0M967.6 61.5L-24334.6 663.0M979.1 61.5L-23260.3 663.0M990.5 61.5L-22186.0 663.0M1002.0 61.5L-21111.7 663.0M1013.5 61.5L-20037.4 663.0M1025.0 61.5L-18963.1 663.0M1036.5 61.5L-17888.8 663.0M1048.0 61.5L-16814.5 663.0M1059.5 61.5L-15740.2 663.0M1070.9 61.5L-14665.9 663.0M1082.4 61.5L-13591.6 663.0M1093.9 61.5L-12517.3 663.0M1105.4 61.5L-11443.0 663.0M1116.9 61.5L-10368.7 663.0M1128.4 61.5L-9294.4 663.0M1139.9 61.5L-8220.1 663.0M1151.3 61.5L-7145.8 663.0M1162.8 61.5L-6071.5 663.0M1174.3 61.5L-4997.2 663.0M1185.8 61.5L-3922.9 663.0M1197.3 61.5L-2848.6 663.0M1208.8 61.5L-1774.3 663.0M1220.2 61.5L-700.0 663.0M1231.7 61.5L374.3 663.0" stroke="#666666" stroke-width="0.9" stroke-opacity="1" fill="none"/></g><defs><radialGradient id="navy"><stop offset="0" stop-color="#1c2c50" stop-opacity="0.45"/><stop offset="1" stop-color="#1c2c50" stop-opacity="0"/></radialGradient></defs><ellipse cx="41" cy="215" rx="200" ry="130" fill="url(#navy)"/><path d="M494 7h0M978 197h0M437 128h0M671 107h0M147 286h0M666 115h0M656 235h0M1136 60h0M1160 272h0M597 98h0M852 126h0M405 16h0M403 640h0M1160 492h0M4 621h0M1032 510h0M212 66h0M491 585h0M685 487h0M276 346h0M841 545h0M957 154h0M1035 143h0M951 367h0M220 389h0M614 634h0M49 108h0M1166 550h0M178 151h0M639 104h0M384 33h0M844 52h0M1179 608h0M935 511h0M436 449h0M903 318h0M73 414h0M386 403h0M499 630h0M239 508h0M828 368h0M95 109h0M1147 152h0M194 191h0M637 343h0M4 2h0M588 122h0M720 528h0M114 334h0M482 522h0M1132 275h0M288 581h0M32 218h0M468 118h0M806 343h0M295 273h0M820 215h0M80 304h0M231 411h0M239 89h0M1060 218h0M347 356h0M822 444h0M947 172h0M506 241h0M613 379h0M746 45h0M440 468h0M42 493h0M813 266h0M533 175h0M874 318h0M314 19h0M409 609h0M802 414h0M1107 20h0M714 124h0M471 120h0M414 596h0M860 559h0M89 199h0M930 27h0M225 54h0M969 154h0M503 9h0M135 340h0M938 225h0M379 27h0M118 98h0M245 377h0M426 646h0M337 566h0M109 349h0M651 434h0M486 346h0M922 100h0M630 389h0M927 108h0M492 16h0M786 574h0M419 540h0M780 11h0M558 30h0M371 529h0M149 374h0M67 73h0M1129 64h0M206 621h0M366 143h0M114 330h0M70 145h0M263 493h0M192 389h0M287 657h0M1175 611h0M1067 366h0M1104 423h0M189 484h0M1007 10h0M231 518h0M911 371h0M145 175h0M279 648h0M267 245h0M817 438h0M667 430h0M1026 604h0M129 20h0M1083 602h0M436 264h0M812 279h0M132 165h0M360 374h0M203 482h0M1150 254h0M676 421h0M946 416h0M612 476h0M28 621h0M1065 459h0M239 414h0M33 263h0M255 371h0M297 61h0M941 166h0M664 11h0M668 522h0M931 217h0M152 403h0M363 189h0M249 260h0M809 265h0M766 481h0M961 377h0M1174 332h0M637 435h0M1152 464h0M1087 105h0M500 465h0M869 549h0M316 208h0M489 259h0M110 258h0M762 489h0M273 410h0M891 103h0M17 106h0M805 604h0M459 206h0M744 209h0M46 162h0M712 303h0M411 259h0M163 507h0M443 456h0M673 595h0M944 87h0M535 7h0M895 153h0M1158 149h0M603 325h0M981 393h0M1045 211h0M116 123h0M55 468h0M813 499h0M926 83h0M76 436h0M1 223h0M697 431h0M730 628h0M1156 205h0M373 14h0M144 290h0M761 156h0M118 453h0M797 331h0M167 130h0M318 564h0M1098 31h0M1111 603h0M940 154h0M1146 535h0M165 24h0M448 383h0M29 631h0M798 342h0M583 69h0M887 490h0M27 533h0M420 617h0M406 140h0M232 219h0M84 107h0M560 365h0M661 87h0M29 97h0M1066 90h0M811 367h0M711 619h0M303 464h0M614 244h0M476 134h0M120 609h0M759 112h0M952 122h0M785 388h0M945 273h0M1132 475h0M533 80h0M306 87h0M618 533h0M880 421h0M506 184h0M953 444h0M787 369h0M937 389h0M312 247h0M367 193h0M1065 470h0M728 298h0M575 69h0M563 389h0M415 335h0M1185 603h0M91 625h0M942 537h0M954 138h0M157 424h0M982 67h0M17 626h0M1079 173h0M983 197h0M998 9h0M721 149h0M754 17h0M767 66h0M526 46h0M455 103h0M389 310h0M781 419h0M621 564h0M487 95h0M812 236h0M1108 258h0M16 227h0M1138 316h0M976 243h0M721 50h0M240 69h0M477 214h0M661 429h0M284 177h0M29 80h0M452 594h0M223 270h0M15 389h0M499 219h0M462 180h0M484 122h0M845 617h0M1075 242h0M14 508h0M547 360h0M778 536h0M614 287h0M156 28h0M196 102h0M1115 375h0M33 210h0M488 552h0M490 361h0M313 214h0M95 518h0M580 483h0M678 59h0M319 212h0M929 229h0M1145 527h0M819 351h0M821 224h0M121 567h0M545 633h0M868 380h0M506 454h0M287 233h0M379 541h0M1126 64h0M29 233h0M809 289h0M901 640h0M790 440h0M170 387h0M744 129h0M31 448h0M1178 427h0M238 575h0M377 226h0M964 525h0M1104 585h0M3 151h0M691 153h0M1009 487h0M896 624h0M839 637h0M553 90h0M612 627h0M728 213h0M117 89h0M145 470h0M389 287h0M1157 220h0M775 231h0M457 282h0M527 77h0M761 368h0M132 644h0M1170 182h0M404 516h0M600 374h0M906 497h0M315 322h0M961 584h0M1027 529h0M780 17h0M434 469h0M288 42h0M704 508h0M1181 481h0M532 21h0M806 590h0M614 372h0M109 212h0M702 531h0M385 550h0M697 367h0M238 459h0M162 278h0M1051 574h0M1120 128h0M1072 310h0M195 593h0M1127 643h0M425 149h0M1096 471h0M1097 482h0M1167 483h0M972 610h0M509 608h0M490 635h0M643 424h0M12 224h0M326 8h0M371 170h0M129 169h0M1020 142h0M830 656h0M11 470h0M159 122h0M365 607h0M1039 61h0M937 56h0M425 661h0M1043 73h0M672 278h0M800 568h0M661 616h0M1063 108h0M68 131h0M602 459h0M1013 483h0M776 397h0M776 264h0M786 553h0M1015 475h0M801 48h0M389 301h0M364 131h0M444 551h0M317 618h0M8 279h0M855 499h0M14 76h0M84 374h0M112 262h0M335 68h0M444 288h0M686 228h0M82 217h0M823 2h0M619 13h0M1025 130h0M633 60h0M649 524h0M1084 522h0M1060 5h0M955 32h0M1032 659h0M851 401h0M869 57h0M1024 58h0M283 179h0M815 260h0M458 332h0M893 555h0M1002 187h0M62 62h0M136 493h0M100 500h0M2 454h0M293 426h0M901 433h0M88 14h0M454 600h0M551 174h0M558 542h0M246 82h0M1089 280h0M526 206h0M290 570h0M951 168h0M860 607h0M495 648h0M108 554h0M1009 167h0M328 180h0M162 536h0M828 521h0M761 173h0M103 171h0M935 13h0M632 212h0M342 221h0M701 112h0M189 562h0M895 238h0M295 386h0M1106 521h0M525 419h0M426 469h0M614 18h0M799 576h0M575 106h0M360 127h0M996 486h0M353 200h0M150 291h0M1157 500h0M1109 49h0M1097 603h0M961 85h0M1030 647h0M878 340h0M407 581h0M710 214h0M98 11h0M832 195h0M157 203h0M548 560h0M562 85h0M982 446h0M647 594h0M480 256h0M65 460h0M737 626h0M9 273h0M519 275h0M51 538h0M51 423h0M371 281h0M993 135h0M606 176h0M723 360h0M791 63h0M750 438h0M80 641h0M1009 524h0M932 331h0M1085 102h0M882 646h0M74 429h0M1154 94h0M663 593h0M313 139h0M851 525h0M1116 431h0M64 543h0M339 372h0M855 647h0M654 96h0M607 367h0M892 126h0M654 33h0M1168 15h0M641 115h0M326 266h0M300 173h0M366 330h0M1134 138h0M205 28h0M1086 518h0M985 99h0M523 444h0M630 484h0M230 597h0M702 404h0M695 293h0M15 108h0M571 54h0M705 126h0M812 268h0M780 173h0M148 439h0M979 139h0M43 574h0M893 507h0M937 276h0M1128 534h0M896 622h0M1077 373h0M67 390h0M588 11h0M373 542h0M741 615h0M896 123h0M846 31h0M1031 195h0M1151 32h0M880 67h0M1023 540h0M607 372h0M261 241h0M176 260h0M164 419h0M584 235h0M411 629h0M1124 647h0M430 54h0M193 569h0M416 97h0M1133 147h0M664 273h0M164 246h0M935 359h0M1017 11h0M128 286h0M761 272h0M327 538h0M1011 429h0M157 490h0M720 486h0M872 372h0M456 554h0M1097 629h0M360 140h0M228 450h0M1143 158h0M533 360h0M494 363h0M440 388h0M1160 505h0M1142 278h0M177 134h0M274 509h0M265 371h0M1099 278h0M281 587h0M1161 45h0M975 644h0M351 237h0M227 143h0M912 292h0M367 241h0M1076 659h0M379 177h0M319 518h0M1077 127h0M124 220h0M984 560h0M1126 278h0M51 30h0M956 248h0M202 186h0M119 606h0M510 334h0M237 345h0M301 621h0M1026 475h0M669 483h0M100 239h0M1045 523h0M374 254h0M165 1h0M1126 122h0M950 118h0M540 360h0M219 186h0M165 3h0M436 555h0M261 286h0M467 340h0M254 31h0M392 647h0M688 299h0M349 474h0M176 406h0M592 45h0M594 224h0M12 297h0M242 71h0M814 366h0M463 466h0M1039 242h0M624 589h0M316 298h0M577 238h0M664 521h0M1034 273h0M336 508h0M834 181h0M526 163h0M621 138h0M84 175h0M103 198h0M389 205h0M1102 505h0M310 598h0M572 10h0M557 56h0M326 635h0M630 651h0M524 220h0M272 164h0M915 391h0M1021 317h0M1032 595h0M88 442h0M89 233h0M151 418h0M147 58h0M872 448h0M1003 601h0M845 548h0M342 302h0M647 263h0M548 318h0M613 26h0M176 510h0M1026 137h0M133 155h0M1042 293h0M1161 328h0M138 506h0M142 460h0M1181 492h0M965 281h0M74 149h0M1018 521h0M681 133h0M566 541h0M129 597h0M93 477h0M22 565h0M373 365h0M52 441h0M1182 200h0M994 100h0M43 441h0M321 473h0M77 88h0M375 343h0M285 84h0M132 242h0M74 358h0M35 344h0M376 26h0M26 385h0M844 119h0M677 56h0M552 540h0M224 307h0M1071 177h0M928 51h0M325 513h0M1029 192h0M487 219h0M228 218h0M995 379h0M1000 377h0M803 367h0M252 324h0M408 151h0M375 608h0M1141 640h0M646 182h0M433 196h0M1141 571h0M934 344h0M575 486h0M1055 474h0M1123 399h0M995 401h0M652 543h0M529 558h0M306 644h0M867 129h0M811 191h0M115 87h0M514 627h0M282 359h0M521 113h0M824 201h0M54 562h0M904 31h0M536 211h0M778 207h0M829 30h0M1076 428h0M472 541h0M878 207h0M107 422h0M503 573h0M178 549h0M1000 136h0M303 406h0M337 322h0M632 260h0M147 188h0M962 528h0M120 458h0M1043 404h0M1139 389h0M555 265h0M692 437h0M1177 99h0M386 591h0M814 204h0M667 41h0M178 26h0M1003 90h0M442 218h0M826 48h0M11 114h0M674 234h0M90 189h0M314 481h0M846 13h0M990 71h0M474 280h0M35 71h0M879 455h0M935 640h0M1053 199h0M779 436h0M269 502h0M1078 391h0M927 186h0M1001 219h0M360 373h0M725 308h0M986 499h0M623 584h0M475 257h0M1162 208h0M158 565h0M817 212h0M957 448h0M537 350h0M1126 357h0M123 290h0M360 634h0M518 264h0M908 506h0M95 449h0M1107 384h0M329 616h0M77 324h0M235 367h0M476 582h0M86 307h0M342 72h0M1001 429h0M417 352h0M530 40h0M391 22h0M118 561h0M926 196h0M21 583h0M80 161h0M1006 380h0M520 516h0M1089 382h0M1093 46h0M616 454h0M1003 314h0M746 191h0M865 382h0M1174 349h0M228 524h0M535 87h0M1141 327h0M199 133h0M301 613h0M963 23h0M831 217h0M519 491h0M347 193h0M1104 521h0M985 491h0M1138 499h0M884 192h0M835 619h0M677 475h0M208 308h0M628 483h0M615 156h0M1169 320h0M140 556h0M434 629h0M36 504h0M806 473h0M44 333h0M598 198h0M105 405h0M434 651h0M278 258h0M781 89h0M178 59h0M1005 519h0M140 186h0M786 38h0M72 125h0M921 164h0M886 108h0M752 446h0M758 115h0M552 167h0M383 220h0M1078 123h0M469 517h0M94 514h0M1073 410h0M1097 301h0M923 658h0M587 300h0M1129 460h0M598 262h0M850 643h0M597 307h0M602 27h0M977 479h0M744 461h0M959 287h0M678 159h0M660 430h0M667 129h0M330 26h0M499 382h0M419 442h0M455 311h0M239 352h0M257 146h0M509 421h0M610 151h0M676 464h0M252 80h0M1029 226h0M665 323h0M607 208h0M179 462h0M805 619h0M590 562h0M596 653h0M198 198h0M913 279h0M668 586h0M253 43h0M21 409h0M1121 158h0M599 283h0M585 544h0M1050 386h0M561 600h0M526 200h0M567 437h0M278 493h0M443 40h0M827 585h0M1078 649h0M56 644h0M1068 589h0M9 444h0M234 596h0M327 38h0M696 458h0M632 272h0M81 478h0M10 383h0M116 301h0M690 163h0M894 169h0M1027 260h0M814 298h0M379 61h0M725 34h0M555 269h0M346 166h0M578 582h0M941 203h0M705 417h0M856 413h0M75 95h0M935 173h0M674 35h0M689 190h0M50 10h0M283 341h0M892 20h0M602 222h0M720 464h0M100 164h0M1030 439h0M198 356h0M431 102h0M482 351h0M779 584h0M325 653h0M436 428h0M469 297h0M815 490h0M81 15h0M412 210h0M529 625h0M357 150h0M511 220h0M488 347h0M134 500h0M751 498h0M522 116h0M880 577h0M1057 477h0M149 194h0M818 27h0M336 256h0M944 18h0M325 421h0M6 204h0M873 307h0M880 162h0M846 104h0M746 522h0M74 186h0M393 584h0M82 272h0M1180 61h0M1133 48h0M644 297h0M810 189h0M559 573h0M193 592h0M113 115h0M266 356h0M368 311h0M71 199h0M6 81h0M780 368h0M548 17h0M899 65h0M829 269h0M1034 64h0M417 28h0M1111 407h0M402 107h0M1056 235h0M149 310h0M431 541h0M72 507h0M1054 40h0M806 480h0M899 574h0M554 428h0M696 292h0M159 359h0M625 228h0M865 586h0M604 250h0M604 487h0M358 545h0M783 465h0M706 45h0M767 573h0M792 557h0M172 301h0M851 626h0M99 135h0M283 168h0M768 271h0M1095 446h0M825 599h0M1021 19h0M502 430h0M858 597h0M243 328h0M1067 123h0M51 281h0M207 22h0M467 420h0M764 566h0M334 183h0M1071 37h0M706 90h0M899 77h0M992 193h0M1104 417h0M913 134h0M797 434h0M475 367h0M636 556h0M1183 542h0M591 67h0M750 643h0M255 89h0M225 59h0M607 133h0M1050 589h0M1033 352h0M532 441h0M481 373h0M74 363h0M664 144h0M214 289h0M1067 656h0M841 217h0M390 612h0M316 395h0M856 186h0M1099 165h0M1176 467h0M626 382h0M1058 567h0M51 210h0M11 279h0M837 257h0M667 108h0M244 219h0M303 471h0M925 204h0M993 232h0M987 464h0M593 508h0M935 146h0M1065 226h0M74 656h0M1176 438h0M52 8h0M926 457h0M998 634h0M744 537h0M434 269h0M731 204h0M776 583h0M531 588h0M905 172h0M81 209h0M706 384h0M192 453h0M378 254h0M134 469h0M296 134h0M1062 221h0M957 38h0M598 427h0M835 307h0M204 359h0M1047 195h0M482 439h0M417 429h0M495 108h0M567 41h0M95 284h0M405 531h0M63 229h0M714 377h0M735 381h0M1144 148h0M600 50h0M906 363h0M1145 76h0M638 177h0M498 613h0M272 88h0M479 179h0M913 471h0M312 555h0M279 42h0M202 381h0M917 474h0M190 260h0M971 419h0M910 101h0M951 113h0M36 317h0M766 419h0M576 121h0M672 313h0M1 174h0M455 484h0M1154 646h0M673 233h0M1017 529h0M1138 169h0M1183 392h0M764 155h0M1093 96h0M818 612h0M952 141h0M1162 556h0M1180 529h0M1125 144h0M252 158h0M564 119h0M1071 551h0M405 169h0M161 137h0M324 208h0M834 40h0M662 535h0M286 418h0M313 591h0M594 242h0M1094 339h0M454 124h0M130 207h0M28 573h0M1064 556h0M572 234h0M341 91h0M341 205h0M597 126h0M622 329h0M167 382h0M1074 499h0M642 163h0M849 158h0M1006 183h0M230 514h0M250 185h0M826 253h0M467 605h0M1029 656h0M662 250h0M699 270h0M1145 174h0M980 520h0M331 516h0M821 527h0M612 94h0M572 631h0M1075 211h0M769 19h0M854 385h0M461 179h0M99 158h0M508 281h0M183 459h0M12 118h0M337 117h0M963 629h0M558 222h0M1000 501h0M771 610h0M88 391h0M318 639h0M77 585h0M1086 38h0M1049 334h0M1067 310h0M1161 209h0M228 418h0M1157 169h0M814 175h0M441 406h0M913 327h0M1103 432h0M42 406h0M42 160h0M634 270h0M813 270h0M960 366h0M703 406h0M596 352h0M7 99h0M370 151h0M228 458h0M524 107h0M777 117h0M355 133h0M804 333h0M16 467h0M213 173h0M122 394h0M660 166h0M1180 264h0M158 529h0M608 308h0M718 313h0M513 29h0M946 364h0M846 39h0M560 226h0M624 459h0M304 486h0M825 47h0M1018 413h0M319 590h0M52 380h0M1011 479h0M1083 321h0M1084 31h0M979 127h0M767 655h0M591 559h0M808 559h0M5 322h0M771 479h0M1113 120h0M621 411h0M473 607h0M598 49h0M760 492h0M829 323h0M554 565h0M833 466h0M971 68h0M830 565h0M869 624h0M469 500h0M907 494h0M609 319h0M1093 145h0M376 112h0M1001 552h0M423 264h0M935 423h0M511 629h0M629 62h0M436 233h0M179 414h0M656 465h0M1076 140h0M329 422h0M875 456h0M64 521h0M288 48h0M1147 76h0M1123 141h0M244 604h0M864 634h0M47 451h0M515 183h0M506 530h0M553 616h0M1111 400h0M143 87h0M639 547h0M1185 474h0M1 599h0M702 84h0M831 620h0M325 379h0M745 400h0M400 363h0M1092 364h0M200 378h0M883 51h0M1022 314h0M254 147h0M95 562h0M971 274h0M1169 147h0M4 548h0M902 120h0M379 53h0M660 352h0M750 557h0M1004 227h0M498 101h0M692 256h0M825 201h0M427 430h0M178 156h0M661 439h0M144 271h0M537 268h0M81 453h0M828 163h0M636 547h0M879 6h0M377 146h0M1030 462h0M889 9h0M884 94h0M219 307h0M721 168h0M1022 483h0M1145 95h0M559 242h0M470 66h0M1073 82h0M61 11h0M938 575h0M383 126h0M332 285h0M727 176h0M878 486h0M1102 621h0M883 622h0M924 256h0M29 143h0M1120 437h0M970 38h0M932 185h0M350 288h0M988 468h0M1172 4h0M518 409h0M531 257h0M1064 336h0M180 256h0M470 189h0M118 554h0M829 643h0M817 330h0M1092 406h0M1050 587h0M574 140h0M408 584h0M496 261h0M262 510h0M2 573h0M191 141h0M327 282h0M690 495h0M571 446h0M47 407h0M693 49h0M1149 395h0M569 139h0M617 561h0M826 57h0M372 609h0M128 415h0M1030 450h0M751 25h0M337 157h0M308 438h0M382 11h0M63 272h0M512 368h0M375 529h0M1102 593h0M1116 250h0M531 579h0M199 594h0M967 203h0M4 349h0M233 124h0M454 268h0M883 460h0M954 514h0M475 231h0M451 347h0M573 376h0M1086 236h0M665 127h0M676 385h0M802 298h0M163 232h0M326 124h0M1097 464h0M1117 623h0M323 201h0M588 269h0M497 56h0M1095 568h0M691 250h0M708 357h0M449 481h0M304 241h0M982 474h0M237 221h0M616 105h0M877 410h0M432 218h0M222 128h0M678 359h0M997 529h0M865 383h0M279 292h0M1061 517h0M884 585h0M992 168h0M1076 643h0M701 382h0M987 532h0M1066 309h0M1032 291h0M527 327h0M708 18h0M272 560h0M40 587h0M1099 309h0M1052 597h0M455 513h0M246 262h0M206 203h0M1158 421h0M386 63h0M1013 616h0M1172 33h0M939 202h0M232 325h0M363 615h0M180 241h0M197 474h0M585 322h0M1066 390h0M607 569h0M697 595h0M764 479h0M627 75h0M693 580h0M894 633h0M303 569h0M197 9h0M45 137h0M266 518h0M604 578h0M429 99h0M341 127h0M911 620h0M647 365h0M668 461h0M986 545h0M529 332h0M551 108h0M88 544h0M523 114h0M48 16h0M510 378h0M1087 502h0M478 387h0M24 107h0M521 390h0M804 608h0M427 260h0M167 185h0M225 545h0M738 521h0M77 315h0M775 146h0M633 27h0M767 398h0M764 27h0M647 240h0M273 653h0M621 467h0M585 589h0M195 321h0M831 114h0M171 323h0M637 577h0M762 155h0M390 551h0M193 206h0M380 397h0M849 102h0M515 569h0M779 569h0M1011 348h0M326 210h0M626 598h0M331 520h0M306 157h0M64 260h0M959 275h0M737 58h0M372 345h0M16 185h0M967 67h0M933 420h0M273 118h0M793 375h0M409 533h0M647 614h0M408 293h0M987 204h0M906 516h0M778 398h0M1031 115h0M1136 573h0M413 2h0M1186 591h0M758 644h0M185 202h0M468 110h0M210 569h0M606 270h0M485 463h0M833 264h0M122 214h0M357 118h0M695 632h0M686 34h0M165 618h0M1159 250h0M538 177h0M806 600h0M694 467h0M13 569h0M655 27h0M397 488h0M244 531h0M727 425h0M1057 602h0M374 91h0M825 494h0M325 270h0M1009 110h0M117 621h0M13 140h0M25 299h0M824 146h0M151 332h0M253 377h0M508 175h0M968 175h0M663 26h0M1033 122h0M783 656h0M262 459h0M84 609h0M784 468h0M49 254h0M706 169h0M895 375h0M251 572h0M765 165h0M414 442h0M759 286h0M790 40h0M272 63h0M814 477h0M837 416h0M399 335h0M505 95h0M962 89h0M334 491h0M1024 64h0M910 159h0M1083 65h0M1175 184h0M303 549h0M398 107h0M360 618h0M655 322h0M666 72h0M671 471h0M3 123h0M1100 326h0M313 404h0M468 34h0M1131 229h0M552 238h0M959 239h0M398 298h0M1155 595h0M64 615h0M709 95h0M389 445h0M1109 516h0M406 321h0M914 391h0M635 39h0M201 88h0M266 460h0M650 317h0M659 108h0M198 408h0M1153 124h0M631 134h0M72 648h0M924 534h0M775 46h0M423 651h0M567 470h0M1137 471h0M215 603h0M876 158h0M49 214h0M505 165h0M451 303h0M254 588h0M760 630h0M734 125h0M80 193h0M653 575h0M969 609h0M903 340h0M425 101h0M11 515h0M726 176h0M143 15h0M545 161h0M1015 45h0M578 306h0M790 132h0M698 163h0M474 149h0M976 340h0M19 318h0M1006 70h0M998 443h0M886 488h0M37 272h0M990 462h0M897 408h0M451 551h0M160 564h0M984 319h0M703 473h0M24 105h0M953 190h0M484 509h0M812 37h0M471 150h0M530 259h0M432 516h0M564 417h0M245 203h0M554 398h0M506 515h0M432 157h0M359 314h0M1007 491h0M258 637h0M1054 423h0M612 575h0M799 403h0M52 346h0M1001 278h0M1116 247h0M502 529h0M515 130h0M736 61h0M127 411h0M634 79h0M489 11h0M1014 562h0M97 235h0M292 430h0M608 369h0M1022 379h0M679 482h0M277 491h0M1101 406h0M1081 210h0M375 376h0M69 346h0M122 391h0M1123 12h0M400 11h0M408 225h0M6 95h0M737 320h0M815 236h0M845 423h0M916 198h0M582 48h0M378 332h0M981 613h0M875 186h0M477 497h0M1061 618h0M441 220h0M883 331h0M996 289h0M178 257h0M650 472h0M447 642h0M172 261h0M239 108h0M1020 605h0M1131 369h0M51 25h0M285 630h0M393 626h0M450 28h0M930 481h0M691 364h0M830 115h0M407 260h0M147 413h0M654 101h0M1028 55h0M446 131h0M905 122h0M79 540h0M434 494h0M846 575h0M412 530h0M617 543h0M329 73h0M757 606h0M365 369h0M687 54h0M733 519h0M366 8h0M403 274h0M714 118h0M58 588h0M656 284h0M925 58h0M811 553h0M469 266h0M1094 104h0M754 328h0M593 422h0M686 443h0M296 501h0M528 167h0M190 498h0M1092 578h0M936 636h0M1153 355h0M862 54h0M37 73h0M742 627h0M562 605h0M233 460h0M757 90h0M367 474h0M627 465h0M596 546h0M700 380h0M988 566h0M767 656h0M756 576h0M629 540h0M425 279h0M807 602h0M1009 580h0M767 605h0M1176 103h0M336 214h0M562 547h0M1049 417h0M75 258h0M819 573h0M171 573h0M952 527h0M770 658h0M872 290h0M1166 343h0M1152 375h0M920 464h0M28 80h0M1051 35h0M517 361h0M1019 145h0M397 560h0M513 491h0M168 470h0M580 632h0M504 252h0M366 134h0M748 104h0M375 332h0M1013 142h0M185 610h0M846 250h0M95 210h0M224 48h0M388 256h0M865 641h0M312 156h0M254 118h0M853 373h0M201 281h0M465 321h0M893 556h0M971 330h0M887 652h0M1123 344h0M1005 97h0M583 315h0M545 381h0M1109 222h0M481 548h0M612 361h0M1073 0h0M523 530h0M616 227h0M125 451h0M724 86h0M1 348h0M659 508h0M713 22h0M832 216h0M839 438h0M954 184h0M517 278h0M547 226h0M79 141h0M497 153h0M672 233h0M762 139h0M684 382h0M1115 500h0M1041 349h0M653 22h0M588 296h0M81 281h0M577 314h0M1183 54h0M629 206h0M398 288h0M1066 577h0M198 195h0M713 457h0M715 174h0M805 317h0M549 607h0M320 565h0M816 454h0M417 206h0M819 374h0M84 90h0M827 15h0M577 73h0M814 197h0M735 240h0M976 24h0M1155 466h0M6 51h0M567 591h0M414 1h0M950 108h0M279 510h0M696 580h0M968 15h0M743 518h0M675 516h0M829 348h0M1027 455h0M300 376h0M1056 427h0M1046 64h0M272 232h0M706 135h0M106 475h0M555 123h0M1151 13h0M814 596h0M880 309h0M284 433h0M191 628h0M633 258h0M541 639h0M134 478h0M170 171h0M292 445h0M748 186h0M620 541h0M64 281h0M420 505h0M1016 542h0M460 590h0M897 355h0M1077 48h0M400 492h0M783 632h0M1035 428h0M508 279h0M1120 172h0M297 9h0M104 553h0M367 247h0M1125 160h0M1042 231h0M1006 627h0M631 594h0M379 180h0M909 490h0M1108 308h0M1087 31h0M1135 141h0M810 610h0M1031 381h0M905 284h0M776 117h0M169 525h0M642 547h0M80 114h0M864 342h0M169 463h0M646 165h0M295 419h0M1174 232h0M264 426h0M816 444h0M503 540h0M337 554h0M1092 638h0M630 148h0M797 21h0M885 192h0M1038 27h0M1109 285h0M374 386h0M1177 570h0M518 330h0M142 387h0M227 56h0M555 40h0M428 356h0M975 209h0M803 200h0M390 209h0M509 51h0M635 589h0M494 401h0M653 364h0M60 14h0M346 578h0M38 384h0M169 2h0M175 450h0M35 305h0M882 430h0M475 595h0M653 144h0M231 551h0M265 229h0M886 379h0M458 128h0M45 281h0M751 513h0M116 262h0M177 574h0M479 337h0M886 402h0M6 512h0M61 385h0M631 568h0M1012 431h0M537 77h0M345 554h0M441 516h0M478 131h0M579 604h0M1057 383h0M238 660h0M466 228h0M327 163h0M43 257h0M471 586h0M847 357h0M1134 138h0M620 643h0M24 114h0M177 113h0M578 409h0M1168 243h0M1124 130h0M105 430h0M990 413h0M389 340h0M1078 212h0M1087 408h0M283 112h0M715 419h0M680 167h0M496 462h0M535 48h0M784 128h0M1065 238h0M627 501h0M677 92h0M614 645h0M559 56h0M1058 424h0M383 621h0M253 465h0M357 141h0M255 382h0M890 221h0M1095 363h0M566 412h0M646 501h0M1088 568h0M40 524h0M220 483h0M59 122h0M434 125h0M773 397h0M731 628h0M75 361h0M149 194h0M484 504h0M864 347h0M918 265h0M390 298h0M1050 498h0M570 253h0M502 198h0M616 8h0M1112 147h0M298 578h0M99 322h0M268 117h0M235 125h0M459 569h0M1114 434h0M360 224h0M301 231h0M961 220h0M915 328h0M15 285h0M528 457h0M292 201h0M225 512h0M49 539h0M651 444h0M466 467h0M803 440h0M942 644h0M627 9h0M268 104h0M602 131h0M767 521h0M822 162h0M627 632h0M783 273h0M31 548h0M766 314h0M964 617h0M209 280h0M739 13h0M573 568h0M320 387h0M810 525h0M985 439h0M887 59h0M286 585h0M696 169h0M446 294h0M444 51h0M609 253h0M68 548h0M209 50h0M1162 548h0M269 581h0M1025 130h0M914 64h0M962 245h0M292 614h0M490 409h0M464 577h0M982 597h0M670 552h0M547 660h0M704 94h0M644 479h0M310 512h0M821 487h0M691 313h0M688 307h0M653 299h0M283 226h0M645 142h0M677 27h0M245 170h0M49 19h0M572 400h0M766 608h0M470 390h0M149 174h0M68 587h0M902 469h0M1079 493h0M1136 531h0M174 250h0M468 358h0M913 438h0M506 453h0M1121 50h0M156 207h0M207 533h0M986 134h0M75 295h0M225 401h0M1124 308h0M676 419h0M132 645h0M158 215h0M701 333h0M19 195h0M792 220h0M63 487h0M108 136h0M205 658h0M685 307h0M864 394h0M1094 139h0M338 342h0M305 437h0M438 28h0M583 81h0M881 477h0M863 128h0M558 121h0M836 0h0M957 647h0M973 460h0M722 300h0M670 335h0M433 359h0M153 48h0M352 636h0M730 609h0M851 509h0M598 405h0M36 64h0M18 289h0M45 108h0M121 621h0M353 152h0M962 400h0M385 174h0M1062 113h0M52 273h0M826 455h0M109 287h0M664 478h0M828 293h0M892 328h0M139 95h0M148 453h0M19 149h0M1173 559h0M596 58h0M444 140h0M303 336h0M1043 82h0M753 88h0M175 341h0M954 182h0M740 603h0M685 244h0M359 495h0M798 435h0M782 420h0M584 641h0M126 35h0M585 606h0M515 600h0M503 345h0M876 615h0M595 281h0M1122 267h0M732 367h0M704 38h0M768 412h0M1061 571h0M778 377h0M882 137h0M22 454h0M466 268h0M182 130h0M664 271h0M1131 367h0M364 223h0M24 528h0M3 494h0M77 93h0M300 190h0M149 268h0M74 41h0M108 197h0M85 422h0M645 557h0M44 419h0M159 646h0M192 157h0M1118 585h0M983 8h0M47 14h0M620 618h0M175 210h0M577 369h0M1112 188h0M417 457h0M445 210h0M653 132h0M410 650h0M113 136h0M741 190h0M599 459h0M183 112h0M265 474h0M725 657h0M407 329h0M215 639h0M828 428h0M223 535h0M993 88h0M159 573h0M636 500h0M1111 513h0M188 115h0M839 416h0M1031 480h0M370 404h0M726 634h0M1161 339h0M537 435h0M605 294h0M223 112h0M641 272h0M611 487h0M197 176h0M932 203h0M419 596h0M18 243h0M208 649h0M1109 598h0M604 377h0M718 481h0M936 573h0M717 45h0M847 276h0M609 499h0M1087 442h0M740 659h0M19 474h0M118 367h0M304 241h0M989 215h0M1069 415h0M1071 417h0M723 365h0M1086 6h0M131 144h0M1058 637h0M205 189h0M557 151h0M251 121h0M957 92h0M711 567h0M260 283h0M20 77h0M513 408h0M242 607h0M679 660h0M583 389h0M799 424h0M688 407h0M306 481h0M888 400h0M412 237h0M327 27h0M649 576h0M647 648h0M686 23h0M719 16h0M417 655h0M1018 258h0M227 47h0M164 147h0M1006 227h0M1029 617h0M1176 210h0M905 447h0M181 516h0M740 71h0M498 196h0M572 152h0M223 6h0M777 195h0M364 421h0M856 273h0M1150 101h0M277 521h0M489 99h0M935 52h0M1036 216h0M900 255h0M639 193h0M1001 241h0M133 617h0M936 210h0M511 274h0M211 524h0M895 526h0M212 243h0M804 65h0M899 225h0M1 228h0M1081 240h0M378 74h0M453 63h0M14 426h0M944 263h0M1114 331h0M570 319h0M1054 339h0M482 195h0M596 395h0M523 595h0M35 292h0M106 242h0M1008 642h0M397 417h0M269 29h0M30 401h0M679 544h0M888 130h0M84 492h0M283 530h0M656 543h0M207 236h0M1055 76h0M599 281h0M1111 125h0M772 107h0M536 236h0M216 490h0M519 480h0M1039 78h0M1100 636h0M538 22h0M307 69h0M203 182h0M660 64h0M1117 309h0M301 14h0M696 532h0M1015 409h0M646 13h0M467 654h0M210 547h0M761 447h0M566 265h0M922 479h0M613 1h0M519 168h0M96 342h0M462 656h0M349 572h0M179 361h0M422 19h0M115 377h0M1029 20h0M230 539h0M763 454h0M638 161h0M587 30h0M1016 5h0M48 355h0M99 218h0M898 277h0M802 171h0M1137 50h0M734 137h0M485 198h0M4 640h0M822 528h0M0 453h0M782 124h0M89 456h0M490 236h0M1089 568h0M238 495h0M25 192h0M6 444h0M227 330h0M361 150h0M894 158h0M745 390h0M1084 122h0M138 490h0M428 520h0M354 60h0M1081 501h0M1160 656h0M220 43h0M282 176h0M930 458h0M266 452h0M442 626h0M1000 74h0M655 109h0M1031 638h0M871 507h0M211 244h0M1179 239h0M963 321h0M1021 631h0M1003 605h0M430 88h0M906 578h0M499 248h0M770 634h0M148 537h0M941 464h0M946 383h0M981 388h0M1035 622h0M60 408h0M1159 242h0M26 260h0M695 169h0M1072 5h0M351 536h0M294 120h0M363 128h0M871 571h0M271 566h0M1014 264h0M472 582h0M327 452h0M1124 376h0M296 361h0M678 318h0M247 14h0M990 2h0M812 189h0M362 33h0M673 131h0M171 354h0M450 212h0M296 286h0M882 639h0M607 216h0M220 488h0M236 107h0M699 326h0M67 0h0M6 177h0M984 535h0M349 620h0M510 388h0M887 75h0M218 563h0M308 492h0M535 214h0M1122 425h0M95 189h0M278 624h0M756 142h0M489 82h0M9 352h0M482 231h0M988 514h0M1014 445h0M1098 555h0M488 481h0M243 49h0M2 290h0M317 245h0M832 22h0M810 255h0M46 326h0M890 104h0M842 596h0M264 609h0M297 247h0M805 113h0M504 432h0M368 54h0M907 472h0M261 236h0M249 349h0M1015 440h0M918 422h0M473 172h0M110 459h0M403 21h0M424 590h0M755 280h0M67 495h0M666 106h0M777 520h0M239 621h0M669 657h0M295 418h0M620 106h0M152 58h0M1054 637h0M46 292h0M708 370h0M700 441h0M252 7h0M843 656h0M1068 638h0M338 503h0M791 33h0M539 145h0M865 171h0M655 374h0M685 600h0M125 464h0M572 75h0M1106 230h0M733 181h0M141 550h0M116 477h0M1153 154h0M75 227h0M123 658h0M126 112h0M48 660h0M712 53h0M13 281h0M320 553h0M935 163h0M4 173h0M180 152h0M263 441h0M514 597h0M966 317h0M562 335h0M1154 278h0M511 105h0M1066 524h0M800 517h0M450 546h0M244 0h0M797 495h0M679 355h0M647 25h0M665 571h0M24 171h0M614 263h0M811 102h0M725 331h0M929 421h0M812 189h0M1085 237h0M731 221h0M1009 483h0M682 616h0M1082 242h0M312 214h0M290 189h0M127 505h0M442 567h0M11 201h0M1139 575h0M1179 642h0M1053 426h0M1145 96h0M544 377h0M926 387h0M236 575h0M602 425h0M12 651h0M32 652h0M742 310h0M764 314h0M1111 539h0M16 283h0M381 515h0M379 231h0M1120 369h0M395 158h0M11 136h0M237 493h0M1136 255h0M75 14h0M1168 584h0M1040 474h0M601 214h0M416 322h0M237 280h0M1121 344h0M615 320h0M600 590h0M770 487h0M1099 501h0M838 554h0M492 404h0M312 577h0M971 314h0M768 633h0M376 381h0M1038 339h0M95 131h0M104 242h0M75 488h0M203 9h0M60 25h0M979 25h0M442 557h0M982 184h0M17 562h0M773 605h0M821 500h0M733 447h0M737 78h0M294 479h0M1108 105h0M223 208h0M667 583h0M188 630h0M573 35h0M614 234h0M475 594h0M36 194h0M649 234h0M585 453h0M546 60h0M656 38h0M411 497h0M298 152h0M224 14h0M684 120h0M867 45h0M142 414h0M730 188h0M179 559h0M734 314h0M160 221h0M731 97h0M662 572h0M482 356h0M488 81h0M648 55h0M1059 613h0M1090 577h0M292 398h0M885 287h0M826 419h0M84 32h0M1069 597h0M853 347h0M944 604h0M893 449h0M56 167h0M395 303h0M346 529h0M1178 260h0M953 208h0M928 173h0M414 128h0M631 204h0M1054 87h0M1063 144h0M258 455h0M807 96h0M710 243h0M720 279h0M580 66h0M106 562h0M168 553h0M364 452h0M490 324h0M300 191h0M183 522h0M19 576h0M932 165h0M237 544h0M512 144h0M642 613h0M1028 358h0M651 484h0M401 26h0M613 73h0M338 205h0M636 29h0M278 7h0M1014 652h0M840 13h0M148 501h0M564 469h0M419 609h0M356 391h0M673 177h0M339 633h0M1095 564h0M860 377h0M380 69h0M1108 514h0M306 584h0M690 61h0M381 157h0M909 546h0M744 289h0M1013 268h0M172 431h0M1075 588h0M979 289h0M573 422h0M634 607h0M805 560h0M727 42h0M94 162h0M702 585h0M1059 393h0M316 391h0M289 344h0M584 618h0M1072 33h0M971 398h0M711 296h0M1055 514h0M171 229h0M298 147h0M244 443h0M436 164h0M389 558h0M174 575h0M712 316h0M194 659h0M982 410h0M633 405h0M465 18h0M222 223h0M122 502h0M654 555h0M1049 386h0M783 145h0M123 486h0M1037 143h0M1004 278h0M692 583h0M1069 538h0M981 460h0M986 539h0M315 382h0M61 134h0M1112 118h0M480 135h0M278 272h0M111 490h0M261 98h0M543 313h0M479 641h0M1120 563h0M680 87h0M814 161h0M653 98h0M807 143h0M1114 508h0M665 73h0M247 293h0M844 311h0M1057 368h0M306 136h0M77 539h0M1052 554h0M1058 554h0M587 261h0M706 617h0M234 630h0M849 90h0M34 99h0M1048 198h0M953 466h0M231 223h0M290 76h0M396 462h0M598 358h0M552 421h0M665 98h0M118 220h0M837 528h0M621 568h0M785 537h0M748 584h0M375 163h0M751 423h0M653 163h0M889 432h0M546 368h0M349 257h0M1146 93h0M584 402h0M593 303h0M118 528h0M76 240h0M472 112h0M1055 546h0M27 25h0M71 154h0M206 312h0M151 27h0M1185 586h0M91 227h0M239 95h0M659 288h0M373 327h0M570 28h0M94 276h0M838 535h0M475 11h0M1024 19h0M319 389h0M574 175h0M726 111h0M902 23h0M41 214h0M946 563h0M1088 270h0M1086 252h0M610 131h0M748 174h0M1041 213h0M1084 366h0M450 431h0M276 324h0M530 164h0M36 89h0M950 12h0M396 137h0M110 335h0M1044 288h0M1126 173h0M955 13h0M207 489h0M51 318h0M574 532h0M749 492h0M80 109h0M685 341h0M1084 624h0M975 518h0M318 383h0M601 444h0M331 289h0M281 499h0M28 544h0M991 71h0M996 118h0M777 41h0M334 380h0M1128 419h0M218 32h0M958 172h0M539 468h0M823 127h0M605 644h0M392 389h0M501 17h0M1111 240h0M1170 317h0M637 197h0M69 513h0M309 542h0M751 600h0M404 224h0M793 340h0M1113 271h0M960 168h0M343 389h0M666 165h0M70 40h0M425 234h0M512 305h0M397 130h0M274 329h0M1124 625h0M1079 196h0M380 159h0M1023 475h0M1121 93h0M27 264h0M93 313h0M706 655h0M532 490h0M885 449h0M652 428h0M1002 138h0M41 475h0M178 498h0M501 621h0M780 213h0M175 29h0M97 290h0M850 656h0M876 349h0M688 386h0M69 388h0M80 106h0M1054 201h0M790 213h0M241 285h0M682 609h0M681 97h0M1 343h0M110 217h0M97 36h0M922 360h0M489 424h0M1007 13h0M1096 490h0M734 401h0M993 399h0M1009 231h0M218 407h0M872 633h0M1011 401h0M971 476h0M711 467h0M165 221h0M688 147h0M333 31h0M7 655h0M66 79h0M786 371h0M151 360h0M755 57h0M897 122h0M126 542h0M525 82h0M812 140h0M631 67h0M821 421h0M391 55h0M797 197h0M1018 625h0M86 43h0M46 8h0M14 640h0M349 498h0M750 468h0M384 212h0M243 21h0M650 97h0M744 137h0M235 187h0M129 291h0M959 61h0M794 24h0M289 187h0M419 510h0M30 290h0M455 182h0M185 148h0M672 563h0M1073 247h0M65 192h0M848 238h0M486 132h0M1028 433h0M532 317h0M68 302h0M1045 397h0M801 225h0M535 445h0M575 178h0M180 210h0M441 404h0M194 553h0M252 404h0M779 484h0M956 457h0M159 246h0M100 631h0M357 384h0M1026 431h0M1100 305h0M1000 399h0M397 264h0M832 74h0M776 341h0M493 60h0M770 31h0M206 654h0M53 614h0M588 226h0M177 593h0M226 443h0M571 99h0M162 120h0M78 654h0M286 628h0M309 341h0M207 426h0M349 17h0M172 288h0M87 59h0M432 404h0M282 414h0M796 483h0M1170 635h0M394 364h0M1106 527h0M901 576h0M592 240h0M521 488h0M509 63h0M1036 84h0M1117 527h0M560 649h0M183 200h0M110 111h0M516 44h0M841 294h0M481 276h0M361 548h0M202 470h0M147 482h0M426 104h0M934 51h0M929 231h0M246 51h0M1040 45h0M1003 150h0M711 353h0M799 265h0M538 264h0M720 461h0M379 579h0M1162 376h0M790 564h0M873 521h0M34 323h0M1058 409h0M869 79h0M116 86h0M291 437h0M831 84h0M1101 495h0M1054 359h0M674 107h0M469 435h0M1162 496h0M217 537h0M1090 118h0M1103 588h0M923 13h0M1032 601h0M125 601h0M980 129h0M255 268h0M758 465h0M588 285h0M360 53h0M509 109h0M139 228h0M606 637h0M605 488h0M87 445h0M516 161h0M922 226h0M229 509h0M1076 49h0M878 371h0M989 176h0M872 604h0M257 508h0M461 535h0M335 525h0M255 418h0M685 131h0M6 311h0M1094 433h0M1087 483h0M442 590h0M797 332h0M750 123h0M647 301h0M1073 209h0M461 164h0M1067 276h0M1104 41h0M997 439h0M1164 212h0M393 372h0M345 423h0M955 391h0M200 467h0M1075 549h0M808 292h0M98 431h0M384 36h0M72 307h0M155 334h0M565 632h0M243 479h0M549 38h0M75 167h0M151 443h0M454 406h0M143 157h0M755 12h0M454 202h0M1054 219h0M1058 657h0M294 101h0M236 342h0M158 109h0M460 49h0M139 44h0M483 407h0M420 372h0M623 494h0M103 164h0M888 109h0M933 555h0M832 315h0M623 287h0M134 286h0M319 399h0M464 123h0M50 355h0M292 2h0M670 612h0M791 30h0M972 53h0M452 580h0M298 315h0M624 451h0M530 566h0M5 419h0M491 445h0M190 471h0M858 77h0M919 545h0M884 48h0M285 190h0M949 561h0M31 364h0M1163 271h0M905 595h0M868 483h0M2 253h0M227 1h0M859 387h0M961 134h0M364 445h0M668 560h0M490 485h0M55 245h0M585 153h0M1103 465h0M1179 599h0M261 565h0M855 54h0M119 63h0M798 82h0M376 126h0M95 176h0M188 611h0M1110 85h0M236 615h0M398 179h0M966 265h0M929 540h0M82 369h0M399 473h0M597 290h0M1009 569h0M981 595h0M245 220h0M1082 360h0M68 643h0M482 288h0M817 655h0M664 319h0M272 69h0M97 31h0M80 295h0M725 343h0M732 90h0M1081 559h0M1047 398h0M503 453h0M1010 41h0M65 71h0M104 458h0M0 522h0M722 390h0M480 164h0M59 523h0M12 326h0M102 86h0M979 296h0M378 494h0M118 187h0M630 238h0M560 404h0M183 458h0M323 311h0M950 200h0M1147 282h0M771 582h0M1052 21h0M236 647h0M364 259h0M813 412h0M840 494h0M683 196h0M878 336h0M352 245h0M468 262h0M869 507h0M164 644h0M65 483h0M1114 328h0M602 268h0M478 592h0M1179 266h0M1161 110h0M930 43h0M1075 188h0M61 404h0M980 394h0M505 647h0M560 191h0M311 293h0M933 223h0M672 317h0M808 615h0M526 624h0M234 108h0M632 23h0M589 370h0M206 142h0M400 542h0M1028 21h0M529 654h0M786 355h0M635 86h0M374 279h0M100 341h0M25 400h0M966 252h0M864 588h0M440 78h0M326 406h0M996 132h0M1151 12h0M1038 384h0M1180 502h0M1052 609h0M954 145h0M546 338h0M174 615h0M355 93h0M310 76h0M199 639h0M349 66h0M169 480h0M127 566h0M501 165h0M103 427h0M749 177h0M206 41h0M217 311h0M22 52h0M875 278h0M1150 171h0M750 106h0M696 155h0M315 661h0M11 478h0M372 491h0M713 103h0M292 623h0M1154 91h0M751 277h0M325 537h0M161 455h0M78 104h0M29 78h0M1176 499h0M1113 566h0M64 560h0M393 103h0M926 60h0M420 477h0M755 514h0M982 437h0M4 345h0M426 394h0M744 263h0M1012 110h0M218 414h0M1127 109h0M782 505h0M405 574h0M738 351h0M172 328h0M549 642h0M663 470h0M945 595h0M233 138h0M946 176h0M219 33h0M599 343h0M234 623h0M155 200h0M205 237h0M1069 601h0M147 200h0M31 419h0M720 485h0M552 103h0M338 624h0M391 495h0M829 539h0M631 242h0M977 204h0M1064 402h0M345 87h0M566 203h0M260 46h0M111 609h0M1156 472h0M372 25h0M981 279h0M1036 312h0M615 108h0M833 288h0M6 291h0M1173 140h0M612 391h0M833 88h0M1139 170h0M992 345h0M800 84h0M472 193h0M209 32h0M398 485h0M22 404h0M832 61h0M973 449h0M809 592h0M723 110h0M679 266h0M403 504h0M7 488h0M13 231h0M67 280h0M277 438h0M503 473h0M218 73h0M258 384h0M623 623h0M154 578h0M1003 568h0M58 436h0M63 619h0M175 278h0M411 62h0M565 384h0M167 65h0M52 217h0M1058 108h0M575 344h0M482 603h0M421 222h0M1169 55h0M883 416h0M734 343h0M492 159h0M707 251h0M764 495h0M726 363h0M88 291h0M507 198h0M440 262h0M707 461h0M849 435h0M48 573h0M894 143h0M1083 559h0M210 54h0M78 553h0M62 522h0M506 306h0M349 446h0M1169 390h0M521 326h0M633 351h0M376 478h0M568 211h0M585 478h0M800 301h0M1185 60h0M570 225h0M1142 611h0M552 647h0M998 283h0M745 535h0M282 418h0M159 501h0M846 227h0M716 413h0M645 325h0M227 636h0M992 364h0M228 66h0M1013 629h0M750 18h0M411 351h0M276 39h0M789 595h0M194 272h0M1106 80h0M302 29h0M1139 214h0M117 270h0M481 595h0M218 233h0M230 436h0M169 348h0M566 591h0M944 283h0M40 439h0M334 558h0M413 110h0M604 658h0M1019 598h0M784 63h0M431 550h0M195 446h0M1105 340h0M494 64h0M933 192h0M144 216h0M400 51h0M1086 638h0M438 567h0M435 249h0M150 581h0M21 162h0M734 334h0M948 471h0M461 631h0M745 323h0M824 223h0M200 500h0M327 574h0M70 191h0M907 93h0M289 507h0M623 528h0M1014 331h0M152 460h0M363 497h0M115 360h0M336 4h0M172 323h0M73 646h0M1103 98h0M81 25h0M1029 110h0M682 189h0M482 648h0M868 550h0M730 413h0M464 585h0M826 398h0M109 534h0M992 392h0M365 359h0M291 474h0M694 356h0M602 74h0M1099 66h0M436 230h0M684 510h0M300 224h0M693 518h0M620 613h0M583 294h0M591 140h0M63 386h0M935 337h0M449 267h0M188 87h0M982 36h0M292 218h0M920 550h0M1022 460h0M982 371h0M1001 290h0M585 625h0M445 267h0M124 438h0M1059 254h0M907 509h0M928 227h0M49 474h0M726 502h0M48 544h0M21 282h0M526 278h0M635 476h0M954 660h0M340 270h0M554 422h0M1070 532h0M755 115h0M133 607h0M959 255h0M767 184h0M912 290h0M1067 618h0M837 311h0M963 646h0M426 264h0M233 528h0M261 511h0M1121 416h0M173 366h0M153 270h0M180 282h0M835 160h0M451 105h0M236 656h0M1058 499h0M182 398h0M678 402h0M1119 79h0M352 313h0M207 454h0M339 6h0M260 349h0M1064 382h0M516 551h0M966 231h0M860 594h0M745 618h0M640 458h0M593 473h0M191 133h0M358 273h0M586 651h0M723 512h0M803 282h0M783 548h0M249 176h0M923 215h0M174 341h0M1087 39h0M1065 396h0M495 412h0M22 273h0M601 403h0M1088 613h0M1064 213h0M1040 175h0M101 633h0M628 76h0M1013 41h0M900 255h0M859 111h0M848 633h0M315 96h0M622 316h0M783 179h0M769 619h0M6 75h0M1123 229h0M473 225h0M1059 541h0M333 462h0M143 309h0M882 338h0M628 301h0M786 33h0M59 394h0M545 314h0M989 307h0M631 535h0M382 464h0M368 654h0M964 312h0M809 172h0M105 245h0M915 634h0M395 196h0M1166 636h0M786 113h0M908 379h0M164 94h0M1031 239h0M674 493h0M839 291h0M338 145h0M426 464h0M1126 245h0M495 552h0M1067 30h0M468 164h0M720 612h0M687 420h0M671 192h0M876 396h0M102 413h0M204 522h0M865 602h0M752 34h0M1031 492h0M1001 276h0M738 348h0M1134 429h0M526 44h0M200 180h0M542 589h0M835 68h0M1183 150h0M221 252h0M417 544h0M885 229h0M211 312h0M288 35h0M1038 272h0M1050 481h0M509 428h0M972 533h0M964 291h0M747 515h0M757 388h0M159 511h0M249 313h0M210 468h0M596 509h0M777 144h0M345 280h0M24 32h0M168 284h0M1050 68h0M84 266h0M629 28h0M647 318h0M231 141h0M557 514h0M795 493h0M809 36h0M955 26h0M197 338h0M61 504h0M724 644h0M971 457h0M384 194h0M1144 351h0M1182 145h0M926 591h0M71 406h0M675 394h0M818 155h0M1069 557h0M96 372h0M988 596h0M296 107h0M817 432h0M520 598h0M127 570h0M1171 40h0M1146 614h0M895 510h0M1083 513h0M43 530h0M556 240h0M214 450h0M878 640h0M1039 45h0M75 557h0M492 123h0M613 42h0M439 442h0M449 228h0M963 646h0M980 227h0M536 601h0M689 13h0M363 303h0M510 532h0M838 483h0M654 431h0M61 229h0M33 535h0M79 153h0M164 191h0M1116 479h0M793 534h0M177 138h0M892 507h0M767 239h0M156 387h0M747 18h0M1128 408h0M137 304h0M1013 162h0M817 34h0M91 244h0M211 514h0M560 120h0M1088 479h0M194 160h0M1128 116h0M57 257h0M1040 510h0M2 116h0M570 363h0M777 153h0M758 142h0M225 112h0M1136 459h0M403 504h0M676 313h0M43 420h0M349 302h0M449 141h0M784 451h0M883 376h0M897 96h0M172 17h0M1018 634h0M467 91h0M425 404h0M573 394h0M21 435h0M21 637h0M930 188h0M164 615h0M191 216h0M239 589h0M1117 426h0M802 287h0M646 134h0M1046 576h0M563 391h0M547 581h0M311 33h0M202 620h0M774 28h0M112 120h0M789 536h0M829 574h0M721 366h0M710 585h0M550 221h0M479 254h0M956 629h0M1096 186h0M454 557h0M384 344h0M392 39h0M238 600h0M1032 4h0M617 641h0M488 163h0M479 191h0M1161 68h0M501 466h0M764 459h0M530 120h0M148 81h0M36 119h0M844 208h0M667 150h0M11 253h0M358 450h0M788 363h0M22 520h0M801 192h0M15 507h0M355 632h0M513 79h0M640 39h0M1009 373h0M710 564h0M18 594h0M411 286h0M364 203h0M1081 368h0M125 190h0M201 500h0M202 553h0M684 224h0M995 541h0M262 343h0M1126 5h0M24 361h0M932 352h0M892 300h0M58 182h0M382 111h0M44 449h0M207 237h0M957 66h0M1049 607h0M143 310h0M659 560h0M351 26h0M595 121h0M547 491h0M1014 225h0M357 556h0M884 471h0M447 305h0M798 60h0M467 402h0M1064 222h0M1186 360h0M418 72h0M596 425h0M726 208h0M174 628h0M1181 218h0M734 421h0M320 186h0M86 379h0M168 355h0M503 117h0M788 595h0M725 453h0M1069 178h0M1045 191h0M609 448h0M837 592h0M162 346h0M768 237h0M757 589h0M1080 244h0M1058 459h0M411 52h0M687 207h0M1099 653h0M497 393h0M389 141h0M610 633h0M1042 478h0M773 174h0M252 520h0M645 419h0M948 168h0M344 373h0M386 348h0M506 527h0M963 207h0M652 527h0M815 606h0M1126 473h0M930 143h0M475 326h0M153 352h0M445 56h0M1046 365h0M724 137h0M532 194h0M919 48h0M612 554h0M817 109h0M470 190h0M646 267h0M33 288h0M653 415h0M237 90h0M319 61h0M459 438h0M376 416h0M634 182h0M787 527h0M1161 331h0M367 311h0M974 432h0M565 53h0M950 373h0M332 346h0M665 108h0M1181 512h0M349 172h0M1145 280h0M382 543h0M192 98h0M593 28h0M963 563h0M747 655h0M690 206h0M117 267h0M444 305h0M372 410h0M590 155h0M514 266h0M321 363h0M57 149h0M499 448h0M130 498h0M789 638h0M575 152h0M993 153h0M304 195h0M884 3h0M346 468h0M1006 193h0M782 292h0M533 231h0M997 174h0M720 487h0M1048 341h0M341 509h0M13 32h0M89 193h0M1011 160h0M1100 477h0M824 645h0M588 620h0M109 178h0M955 429h0M870 120h0M620 210h0M72 507h0M359 76h0M655 312h0M165 446h0M918 616h0M726 429h0M612 149h0M877 548h0M263 368h0M329 638h0M469 631h0M1058 431h0M30 5h0M533 338h0M928 430h0M499 67h0M1031 84h0M126 195h0M263 655h0M146 497h0M688 494h0M226 645h0M276 634h0M1140 4h0M724 362h0M623 233h0M446 101h0M179 524h0M110 467h0M461 526h0M404 658h0M767 278h0M81 218h0M101 550h0M1040 637h0M1124 49h0M572 47h0M850 6h0M170 315h0M138 22h0M967 502h0M30 325h0M847 456h0M912 563h0M751 340h0M284 17h0M276 231h0M34 624h0M533 96h0M198 210h0M317 69h0M739 176h0M821 94h0M1104 472h0M477 309h0M742 632h0M943 347h0M343 452h0M387 285h0M169 363h0M269 244h0M94 100h0M215 21h0M837 67h0M96 658h0M666 496h0M676 635h0M580 402h0M200 529h0M147 224h0M1093 214h0M298 278h0M263 319h0M46 40h0M652 175h0M21 273h0M1182 148h0M1124 255h0M853 486h0M569 549h0M1014 120h0M691 641h0M672 311h0M456 285h0M533 137h0M241 123h0M399 151h0M903 196h0M797 621h0M1069 470h0M1093 394h0M1158 112h0M1045 457h0M673 265h0M691 660h0M882 324h0M1123 541h0M246 511h0M123 600h0M202 630h0M483 166h0M210 506h0M112 71h0M1075 418h0M714 520h0M691 240h0M556 586h0M24 234h0M886 81h0M595 93h0M313 493h0M813 190h0M464 132h0M67 616h0M1090 643h0M275 74h0M949 393h0M923 277h0M1138 382h0M901 197h0M263 466h0M862 602h0M427 163h0M374 123h0M230 123h0M1056 602h0M834 7h0M1122 598h0M250 252h0M364 357h0M567 446h0M757 653h0M851 215h0M739 240h0M785 319h0M889 428h0M702 170h0M349 641h0M100 661h0M273 15h0M125 528h0M303 450h0M111 638h0M1051 328h0M923 650h0M229 284h0M123 93h0M423 329h0M904 530h0M782 140h0M254 141h0M318 372h0M690 239h0M1077 249h0M329 215h0M694 489h0M984 385h0M63 614h0M988 47h0M143 438h0M401 549h0M932 129h0M729 625h0M177 165h0M849 405h0M435 527h0M112 547h0M1151 332h0M1072 193h0M608 280h0M677 230h0M1175 573h0M48 639h0M558 476h0M443 56h0M907 336h0M318 85h0M948 144h0M297 615h0M722 567h0M1174 2h0M193 445h0M730 4h0M1171 652h0M131 396h0M784 659h0M14 261h0M226 366h0M699 418h0M765 255h0M157 78h0M171 651h0M804 226h0M1116 50h0M656 491h0M433 578h0M771 499h0M155 359h0M421 643h0M1048 570h0M420 367h0M630 493h0M942 482h0M40 160h0M1056 494h0M392 63h0M1129 419h0M828 283h0M685 213h0M554 651h0M79 9h0M972 603h0M46 460h0M14 112h0M103 555h0M176 17h0M1000 529h0M72 162h0M485 303h0M134 198h0M875 588h0M730 176h0M1077 264h0M147 501h0M708 25h0M410 174h0M954 152h0M324 262h0M147 595h0M342 72h0M163 358h0M863 243h0M288 298h0M886 275h0M442 510h0M868 437h0M382 277h0M1111 610h0M1096 246h0M897 431h0M981 550h0M846 616h0M141 5h0M85 215h0M320 181h0M483 459h0M743 237h0M483 329h0M1055 8h0M802 159h0M495 153h0M720 486h0M365 263h0M37 429h0M127 167h0M333 545h0M713 467h0M72 273h0M800 23h0M229 156h0M1073 382h0M415 212h0M13 614h0M85 49h0M586 360h0M197 204h0M124 249h0M525 80h0M643 551h0M928 274h0M483 71h0M484 403h0M824 492h0M592 228h0M944 621h0M523 173h0M265 94h0M922 19h0M218 271h0M275 325h0M1050 439h0M540 641h0M14 296h0M702 416h0M6 45h0M78 631h0M354 214h0M141 53h0M71 372h0M340 429h0M1075 50h0M462 190h0M50 203h0M1122 7h0M885 586h0M535 396h0M211 261h0M853 375h0M66 515h0M1011 42h0M845 440h0M571 491h0M124 648h0M179 221h0M264 311h0M1004 327h0M600 376h0M743 573h0M464 202h0M109 515h0M992 51h0M1017 197h0M158 197h0M544 310h0M1082 468h0M512 323h0M132 2h0M1091 200h0M211 232h0M753 175h0M990 267h0M902 17h0M1001 395h0M836 353h0M530 328h0M249 159h0M971 641h0M736 468h0M1093 635h0M776 640h0M329 420h0M804 354h0M814 340h0M1147 644h0M643 587h0M410 540h0M189 317h0M470 394h0M244 460h0M850 329h0M266 502h0M974 398h0M1097 56h0M108 260h0M950 207h0M725 401h0M367 343h0M604 412h0M1078 320h0M284 300h0M244 331h0M270 43h0M693 27h0M659 342h0M498 74h0M956 163h0M473 275h0M496 285h0M938 81h0M425 210h0M819 594h0M499 290h0M306 315h0M218 466h0M564 575h0M658 14h0M917 318h0M859 120h0M1101 323h0M729 388h0M839 394h0M20 404h0M1048 627h0M781 296h0M904 518h0M3 335h0M632 304h0M411 119h0M921 202h0M69 13h0M838 9h0M881 416h0M864 562h0M694 319h0M458 208h0M348 598h0M253 604h0M530 10h0M849 469h0M1177 55h0M755 636h0M907 639h0M145 143h0M807 82h0M20 624h0M895 473h0M469 323h0M318 296h0M186 654h0M876 256h0M771 116h0M37 411h0M333 189h0M474 658h0M1148 517h0M651 560h0M362 608h0M906 191h0M910 289h0M289 246h0M463 82h0M1086 399h0M786 18h0M139 404h0M738 568h0M368 143h0M423 647h0M1096 31h0M822 371h0M1177 389h0M627 463h0M520 333h0M1042 232h0M412 165h0M473 581h0M128 300h0M671 91h0M434 436h0M478 648h0M1077 547h0M266 85h0M207 554h0M29 429h0M1071 410h0M169 520h0M1002 285h0M690 485h0M95 149h0M471 332h0M588 646h0M419 388h0M667 169h0M341 88h0M822 448h0M122 583h0M634 448h0M423 473h0M897 98h0M1044 598h0M965 426h0M391 35h0M102 561h0M682 599h0M1162 13h0M88 3h0M34 257h0M971 503h0M724 468h0M1044 570h0M117 424h0M369 182h0M435 81h0M897 67h0M44 141h0M656 358h0M538 426h0M366 582h0M693 581h0M688 552h0M796 641h0M375 7h0M80 345h0M62 518h0M1121 609h0M30 126h0M584 108h0M155 340h0M8 81h0M690 208h0M1166 578h0M588 392h0M211 373h0M354 462h0M265 653h0M449 648h0M1086 11h0M1067 530h0M1139 366h0M118 228h0M463 93h0M1020 591h0M83 509h0M56 205h0M710 413h0M414 532h0M56 330h0M615 427h0M903 208h0M137 6h0M480 87h0M307 256h0M335 457h0M1077 523h0M270 176h0M1040 489h0M788 511h0M120 268h0M528 479h0M766 34h0M743 611h0M593 355h0M872 516h0M993 554h0M535 338h0M303 142h0M24 658h0M1053 658h0M1002 482h0M508 296h0M665 352h0M724 169h0M792 464h0M1044 617h0M199 42h0M388 562h0M113 512h0M744 314h0M772 418h0M518 459h0M1101 346h0M79 313h0M1039 168h0M1072 584h0M390 90h0M70 37h0M44 167h0M934 462h0M600 323h0M821 558h0M409 6h0M870 655h0M72 443h0M669 292h0M263 96h0M280 546h0M325 344h0M1090 406h0M801 546h0M1155 614h0M334 621h0M1119 272h0M640 11h0M731 519h0M1158 203h0M407 319h0M840 427h0M499 272h0M821 130h0M699 204h0M27 652h0M875 185h0M985 148h0M81 453h0M258 238h0M289 588h0M652 473h0M301 309h0M558 513h0M5 228h0M1106 341h0M385 636h0M1075 636h0M268 478h0M1069 111h0M102 633h0M1154 376h0M1063 191h0M479 88h0M186 339h0M835 49h0M678 15h0M140 368h0M1138 55h0M786 246h0M579 286h0M804 503h0M983 204h0M253 64h0M210 467h0M606 560h0M603 537h0M311 326h0M164 464h0M621 558h0M99 87h0M856 497h0M120 641h0M417 106h0M307 651h0M260 204h0M368 143h0M1015 329h0M53 479h0M247 113h0M1162 56h0M643 397h0M639 621h0M1116 377h0M114 23h0M961 333h0M392 213h0M824 198h0M913 274h0M86 241h0M913 566h0M811 199h0M84 307h0M75 211h0M1008 424h0M815 264h0M798 565h0M999 88h0M472 145h0M677 65h0M739 453h0M545 657h0M158 588h0M809 91h0M323 651h0M183 490h0M747 279h0M373 168h0M1129 169h0M165 76h0M751 660h0M741 142h0M1004 544h0M262 7h0M679 76h0M294 186h0M141 658h0M1151 56h0M1147 305h0M443 235h0M562 625h0M1144 533h0M833 11h0M1058 522h0M129 337h0M597 89h0M1081 387h0M415 201h0M456 442h0M685 119h0M608 653h0M1149 429h0M76 514h0M442 366h0M1045 201h0M1065 59h0M553 285h0M947 135h0M267 341h0M910 612h0M117 483h0M527 382h0M488 544h0M604 232h0M193 25h0M203 282h0M113 476h0M578 488h0M378 337h0M1058 615h0M761 522h0M651 618h0M164 190h0M1056 284h0M419 138h0M651 38h0M249 439h0M392 21h0M364 180h0M465 207h0M391 187h0M686 508h0M710 601h0M1039 63h0M29 185h0M105 602h0M143 195h0M769 264h0M128 134h0M473 219h0M0 582h0M912 314h0M1085 442h0M473 334h0M330 296h0M456 182h0M823 216h0M992 642h0M1006 182h0M656 467h0M93 416h0M351 73h0M627 573h0M465 245h0M188 530h0M419 477h0M1079 184h0M566 293h0M183 36h0M902 270h0M696 99h0M557 241h0M1177 164h0M45 592h0M731 51h0M943 308h0M1 45h0M852 243h0M1101 62h0M805 365h0M875 474h0M27 115h0M66 165h0M562 616h0M268 186h0M35 309h0M886 617h0M1036 93h0M990 79h0M499 7h0M775 9h0M189 534h0M1036 236h0M212 236h0M808 68h0M779 320h0M63 373h0M730 517h0M314 649h0M273 187h0M818 168h0M418 194h0M466 540h0M756 534h0M69 188h0M585 237h0M35 317h0M346 38h0M636 229h0M1027 316h0M468 401h0M828 635h0M529 330h0M415 494h0M611 415h0M1169 402h0M1075 340h0M376 523h0M94 328h0M427 154h0M852 375h0M632 591h0M258 208h0M295 623h0M479 284h0M761 84h0M1078 251h0M567 154h0M773 404h0M729 623h0M1085 651h0M157 118h0M17 82h0M589 496h0M862 161h0M1052 88h0M543 436h0M433 583h0M300 227h0M1179 629h0M821 228h0M1135 338h0M111 186h0M1093 322h0M984 242h0M564 297h0M505 627h0M56 62h0M112 24h0M214 131h0M269 475h0M663 189h0M53 214h0M153 503h0M394 418h0M1012 239h0M895 60h0M801 395h0M533 220h0M607 549h0M288 639h0M437 427h0M822 221h0M762 138h0M745 223h0M935 590h0M1073 601h0M120 269h0M510 380h0M540 550h0M294 205h0M213 552h0M72 437h0M191 285h0M612 422h0M1157 360h0M326 150h0M818 70h0M511 490h0M1037 233h0M766 221h0M393 526h0M507 385h0M80 291h0M784 547h0M740 255h0M346 179h0M1110 397h0M393 155h0M671 387h0M610 240h0M113 280h0M496 73h0M707 572h0M742 67h0M207 501h0M244 149h0M547 35h0M1131 498h0M1018 300h0M461 90h0M340 313h0M1042 283h0M1105 529h0M990 540h0M91 601h0M1122 124h0M610 636h0M861 446h0M168 142h0M716 582h0M1132 325h0M525 148h0M581 28h0M1007 257h0M796 285h0M422 4h0M312 95h0M32 154h0M589 393h0M752 379h0M166 246h0M509 50h0M10 151h0M55 109h0M56 221h0M71 31h0M846 478h0M997 15h0M967 599h0M463 637h0M638 388h0M384 534h0M488 104h0M706 341h0M436 124h0M960 130h0M227 600h0M1167 149h0M148 623h0M219 251h0M222 645h0M724 132h0M1147 326h0M384 322h0M227 324h0M289 543h0M178 196h0M1041 194h0M1013 660h0M840 363h0M874 311h0M489 435h0M20 202h0M53 452h0M96 312h0M703 272h0M716 588h0M139 250h0M784 604h0M913 594h0M300 48h0M386 573h0M379 398h0M43 328h0M804 196h0M972 216h0M895 103h0M95 513h0M350 39h0M857 300h0M236 470h0M172 104h0M225 307h0M250 597h0M225 342h0M56 383h0M98 440h0M288 625h0M879 232h0M78 146h0M1007 528h0M668 322h0M1131 471h0M507 578h0M991 314h0M469 571h0M574 479h0M890 192h0M1167 552h0M463 431h0M547 17h0M984 70h0M113 539h0M716 470h0M1151 594h0M980 608h0M559 341h0M135 435h0M467 213h0M665 600h0M362 205h0M755 552h0M754 394h0M871 221h0M660 444h0M1054 612h0M1026 532h0M965 142h0M1167 657h0M792 191h0M523 12h0M115 576h0M365 306h0M1100 0h0M725 232h0M860 299h0M1178 514h0M22 461h0M221 473h0M511 140h0M557 281h0M1154 373h0M602 439h0M760 115h0M130 98h0M665 437h0M540 109h0M596 43h0M176 434h0M354 649h0M857 303h0M1075 51h0M1088 589h0M89 618h0M898 77h0M471 348h0M1129 252h0M1037 397h0M764 144h0M1095 588h0M832 639h0M43 422h0M993 419h0M20 509h0M1110 230h0M712 106h0M15 327h0M692 638h0M365 230h0M1102 390h0M601 369h0M551 177h0M878 415h0M593 283h0M293 453h0M178 401h0M962 106h0M659 629h0M768 480h0M682 166h0M800 182h0M988 384h0M446 540h0M840 656h0M1075 627h0M556 114h0M565 69h0M823 537h0M804 345h0M904 534h0M1095 319h0M248 206h0M144 596h0M949 12h0M111 424h0M733 539h0M818 436h0M219 310h0M1145 168h0M1 457h0M824 634h0M1147 230h0M383 463h0M112 6h0M848 312h0M514 7h0M1044 20h0M919 295h0M289 427h0M274 431h0M163 435h0M588 84h0M724 404h0M207 52h0M103 179h0M45 133h0M24 469h0M234 633h0M1059 134h0M1095 90h0M43 147h0M631 119h0M539 248h0M1060 524h0M1111 23h0M428 340h0M441 283h0M343 104h0M95 248h0M906 276h0M1046 269h0M986 70h0M839 116h0M1120 583h0M35 134h0M1094 414h0M540 551h0M266 370h0M649 88h0M495 645h0M404 301h0M767 299h0M127 255h0M839 263h0M119 37h0M1013 185h0M396 495h0M1072 590h0M576 645h0M1004 35h0M137 472h0M650 546h0M472 618h0M350 423h0M914 39h0M764 150h0M1131 437h0M1170 214h0M533 474h0M1024 502h0M486 392h0M956 288h0M68 255h0M514 285h0M426 350h0M901 120h0M861 266h0M320 99h0M1019 100h0M178 581h0M397 77h0M287 345h0M574 507h0M1167 35h0M71 56h0M1041 74h0M416 0h0M1125 294h0M781 336h0M71 636h0M469 484h0M1066 403h0M226 302h0M503 574h0M570 315h0M693 577h0M477 64h0M151 401h0M1149 503h0M456 598h0M485 428h0M142 273h0M532 171h0M889 602h0M369 160h0M219 44h0M1104 449h0M259 577h0M610 567h0M585 405h0M260 618h0M884 189h0M960 225h0M184 318h0M719 490h0M1005 502h0M831 382h0M239 563h0M58 482h0M693 626h0M928 591h0M1181 540h0M640 143h0M165 85h0M191 530h0M878 233h0M624 10h0M472 167h0M462 378h0M760 638h0M777 566h0M1001 657h0M21 87h0M978 39h0M952 498h0M1144 99h0M369 643h0M268 570h0M1001 32h0M1076 366h0M967 595h0M688 210h0M852 201h0M938 233h0M549 340h0M719 641h0M666 310h0M415 656h0M628 116h0M377 8h0M954 365h0M536 582h0M112 178h0M1132 153h0M1143 592h0M177 439h0M569 435h0M536 508h0M797 388h0M842 556h0M606 33h0M475 118h0M264 42h0M712 322h0M802 6h0M789 328h0M447 538h0M1092 538h0M1101 551h0M232 115h0M986 414h0M519 196h0M625 158h0M618 614h0M607 19h0M645 488h0M722 593h0M1181 499h0M875 652h0M400 209h0M7 636h0M294 81h0M657 545h0M427 230h0M923 98h0M189 239h0M352 205h0M1028 124h0M748 630h0M59 633h0M64 327h0M980 240h0M581 169h0M310 423h0M656 427h0M753 59h0M312 309h0M143 58h0M335 63h0M408 91h0M14 56h0M916 477h0M364 311h0M802 76h0M1023 591h0M1167 490h0M871 554h0M942 240h0M430 640h0M1134 423h0M435 428h0M44 266h0M538 130h0M781 21h0M486 95h0M625 653h0M1087 300h0M996 110h0M374 234h0M791 643h0M632 651h0M717 540h0M1046 456h0M921 296h0M1050 98h0M1012 469h0M122 6h0M439 537h0M562 537h0M557 91h0M25 439h0M967 321h0M88 229h0M359 556h0M435 462h0M514 143h0M428 68h0M49 642h0M288 640h0M522 595h0M177 2h0M50 610h0M976 246h0M678 246h0M224 480h0M113 635h0" stroke="#fff" stroke-opacity="0.28" stroke-width="1.0" stroke-linecap="round" /><path d="M511 217h0M755 275h0M814 627h0M169 535h0M64 378h0M308 510h0M932 120h0M407 103h0M1028 364h0M423 491h0M10 145h0M330 611h0M406 293h0M325 154h0M430 656h0M734 91h0M534 533h0M1017 148h0M395 88h0M1104 639h0M184 339h0M322 499h0M60 108h0M713 586h0M1174 122h0M775 597h0M457 371h0M532 44h0M444 140h0M927 323h0M28 487h0M876 474h0M76 101h0M90 509h0M1058 628h0M1090 146h0M389 589h0M1071 44h0M1061 301h0M817 435h0M776 222h0M919 123h0M246 277h0M299 575h0M1031 88h0M236 422h0M742 362h0M1092 432h0M93 165h0M1140 181h0M522 330h0M240 406h0M240 530h0M587 551h0M995 59h0M21 196h0M1144 21h0M372 285h0M1144 522h0M233 79h0M237 493h0M1091 416h0M435 182h0M276 126h0M1162 218h0M38 555h0M1169 281h0M935 142h0M747 528h0M856 140h0M367 239h0M932 327h0M456 113h0M1091 224h0M317 638h0M646 443h0M591 263h0M386 91h0M262 166h0M369 44h0M728 357h0M5 214h0M1090 88h0M547 319h0M918 431h0M39 67h0M885 16h0M262 153h0M334 634h0M358 365h0M428 9h0M566 224h0M465 645h0M852 617h0M456 250h0M602 368h0M856 165h0M56 177h0M280 298h0M898 594h0M324 326h0M112 488h0M881 487h0M813 498h0M1106 421h0M139 435h0M1070 272h0M564 322h0M89 559h0M881 593h0M1077 76h0M372 427h0M968 263h0M368 583h0M939 449h0M881 235h0M50 376h0M18 289h0M1127 643h0M265 76h0M127 11h0M205 148h0M447 8h0M416 209h0M917 212h0M242 111h0M196 390h0M1154 416h0M169 534h0M562 220h0M455 184h0M585 248h0M447 579h0M439 648h0M1159 547h0M352 44h0M224 544h0M300 263h0M610 623h0M73 503h0M572 464h0M373 626h0M238 575h0M305 660h0M34 400h0M1006 544h0M741 351h0M1062 118h0M988 618h0M752 87h0M433 526h0M1174 181h0M557 321h0M241 629h0M1102 254h0M965 614h0M840 156h0M1168 268h0M91 304h0M865 547h0M171 186h0M308 363h0M782 51h0M1100 37h0M644 169h0M585 74h0M791 309h0M426 270h0M328 443h0M471 240h0M192 219h0M132 386h0M15 566h0M1043 605h0M580 184h0M976 489h0M232 278h0M240 253h0M327 100h0M9 542h0M76 188h0M137 240h0M551 409h0M921 338h0M992 318h0M121 280h0M231 466h0M808 50h0M105 476h0M431 31h0M201 587h0M1037 106h0M531 224h0M507 654h0M834 515h0M1141 102h0M574 339h0M521 401h0M1151 157h0M994 517h0M705 638h0M1150 465h0M986 526h0M761 531h0M239 134h0M582 444h0M1019 577h0M751 129h0M756 531h0M1169 100h0M1117 153h0M1029 347h0M646 101h0M552 594h0M748 227h0M144 281h0M881 505h0M1004 163h0M298 101h0M490 484h0M601 159h0M175 86h0M369 359h0M1074 451h0M604 144h0M684 623h0M980 479h0M148 13h0M402 609h0M356 456h0M116 234h0M128 166h0M346 407h0M409 587h0M1156 24h0M908 266h0M894 407h0M382 584h0M847 117h0M1004 303h0M116 215h0M446 407h0M1131 519h0M1153 581h0M294 650h0M113 125h0M226 467h0M1054 471h0M286 623h0M188 597h0M446 568h0M709 456h0M374 41h0M1141 36h0M453 609h0M2 569h0M280 401h0M709 442h0M1086 60h0M653 596h0M65 48h0M995 458h0M402 482h0M76 628h0M769 182h0M268 77h0M871 377h0M693 286h0M143 230h0M538 16h0M284 129h0M812 400h0M52 101h0M161 209h0M786 324h0M644 224h0M1104 527h0M42 193h0M212 50h0M368 69h0M988 505h0M443 244h0M734 385h0M1146 42h0M133 561h0M122 327h0M843 304h0M231 254h0M634 259h0M399 182h0M213 64h0M130 339h0M1146 612h0M965 413h0M937 72h0M715 288h0M279 300h0M387 21h0M1006 557h0M104 198h0M754 424h0M759 338h0M938 246h0M605 445h0M729 578h0M414 180h0M572 44h0M302 17h0M208 76h0M1030 105h0M643 535h0M286 518h0M226 474h0M79 236h0M1034 249h0M85 232h0M626 223h0M180 258h0M1084 602h0M737 545h0M210 49h0M673 48h0M778 86h0M750 221h0M638 251h0M933 550h0M1005 338h0M561 115h0M896 56h0M86 15h0M250 371h0M440 8h0M1160 373h0M797 573h0M151 116h0M754 193h0M934 651h0M66 272h0M669 641h0M1177 74h0M261 181h0M471 177h0M241 279h0M205 103h0M739 327h0M756 54h0M538 319h0M803 101h0M520 356h0M1177 490h0M285 130h0M394 410h0M540 205h0M846 82h0M182 332h0M622 145h0M263 247h0M143 597h0M824 132h0M138 312h0M464 600h0M607 243h0M735 456h0M102 15h0M331 479h0M885 469h0M53 208h0M386 628h0M429 358h0M96 609h0M764 163h0M287 485h0M651 476h0M532 119h0M464 633h0M434 173h0M87 121h0M414 191h0M31 383h0M599 563h0M202 265h0M390 424h0M39 96h0M750 309h0M110 425h0M176 270h0M973 187h0M53 587h0M346 203h0M635 506h0M781 472h0M628 633h0M569 178h0M1016 503h0M965 65h0M722 539h0M352 456h0M442 371h0M762 504h0M611 591h0M549 104h0M53 441h0M1140 251h0M115 115h0M94 152h0M386 60h0M835 471h0M1027 380h0M425 305h0M688 325h0M468 394h0M671 633h0M859 543h0M1052 623h0M225 542h0M689 299h0M567 67h0M981 298h0M762 409h0M829 114h0M56 533h0M433 37h0M387 178h0M894 105h0M458 316h0M720 106h0M774 326h0M533 142h0M875 327h0M725 64h0M317 516h0M553 340h0M1141 184h0M107 294h0M1 264h0M803 60h0M5 508h0M920 238h0M82 193h0M521 548h0M75 466h0M829 5h0M878 536h0M411 295h0M22 244h0M255 104h0M187 93h0M255 365h0M394 657h0M867 453h0M179 215h0M484 390h0M558 626h0M1132 183h0M1173 142h0M245 619h0M613 346h0M715 92h0M588 581h0M17 422h0M337 445h0M1080 501h0M611 631h0M734 593h0M196 184h0M194 201h0M64 331h0M488 427h0M414 278h0M95 540h0M445 524h0M962 590h0M172 653h0M126 389h0M897 648h0M782 458h0M126 35h0M852 26h0M1084 123h0M409 378h0M195 33h0M624 557h0M978 548h0M300 62h0M622 639h0M1070 464h0M443 272h0M277 435h0M793 123h0M152 72h0M888 113h0M959 473h0M388 486h0M1013 100h0M239 588h0M369 158h0M548 247h0M658 506h0M935 529h0M545 563h0M983 403h0M217 227h0M176 407h0M1129 228h0M487 558h0M440 103h0M275 643h0M581 598h0M264 262h0M647 183h0M705 420h0M211 648h0M435 394h0M882 143h0M805 55h0M663 413h0M263 324h0M1133 70h0M810 242h0M896 171h0M248 509h0M237 89h0M202 162h0M551 632h0M1057 22h0M347 362h0M194 34h0M89 610h0M94 567h0M46 22h0M24 552h0M1000 327h0M34 181h0M479 410h0M454 642h0M138 278h0M922 35h0M200 603h0M1077 398h0M9 383h0M858 570h0M1044 304h0M729 203h0M1015 346h0M571 330h0M278 513h0M354 537h0M1184 226h0M74 244h0M1177 258h0M494 365h0M148 287h0M441 124h0M516 220h0M29 69h0M191 157h0M696 659h0M810 640h0M546 613h0M934 188h0M69 300h0M1121 406h0M373 570h0M9 102h0M1095 13h0M242 38h0M704 578h0M995 648h0M475 288h0M1096 227h0M98 526h0M1017 623h0M161 279h0M204 336h0M969 446h0M572 398h0M1168 459h0M371 612h0M519 126h0M1088 423h0M28 647h0M980 494h0M299 508h0M932 7h0M150 38h0M848 452h0M843 136h0M415 135h0M834 35h0M942 44h0M125 18h0M285 13h0M890 61h0M1038 210h0M896 606h0M326 492h0M804 273h0M1043 71h0M369 82h0M777 322h0M214 316h0M237 555h0M1116 250h0M545 375h0M758 124h0M1072 294h0M788 610h0M925 606h0M373 284h0M983 385h0M638 620h0M1037 614h0M948 361h0M286 82h0M296 578h0M956 64h0M711 134h0M315 108h0M948 265h0M363 188h0M328 99h0M666 427h0M931 501h0M609 576h0M171 571h0M313 100h0M116 203h0M671 586h0M81 128h0M676 15h0M120 24h0M492 475h0M578 615h0M870 548h0M649 594h0M724 14h0M970 403h0M809 489h0M78 266h0M100 216h0M964 121h0M1074 371h0M372 518h0M610 12h0M1060 341h0M613 606h0M897 186h0M1026 68h0M200 17h0M707 174h0M8 401h0M248 95h0M173 228h0M81 154h0M1181 658h0M488 279h0M45 104h0M974 0h0M600 122h0M841 349h0M566 559h0M684 344h0M149 378h0M647 553h0M839 111h0M994 56h0M1109 607h0M388 143h0M523 149h0M167 76h0M1163 274h0M115 69h0M63 139h0M809 283h0M1146 458h0M1175 565h0M671 162h0M985 552h0M369 508h0M316 210h0M550 211h0M852 474h0M645 352h0M497 541h0M565 275h0M1105 228h0M100 7h0M612 491h0M198 87h0M1168 329h0M249 466h0M711 141h0M693 528h0M921 449h0M1163 633h0M369 457h0M338 399h0M1144 625h0M261 293h0M1183 278h0M279 345h0M362 5h0M268 352h0M999 211h0M268 387h0M1121 303h0M307 224h0M44 255h0M899 509h0M227 61h0M744 600h0M711 377h0M797 348h0M704 80h0M892 154h0M186 370h0M566 136h0M1171 527h0M1087 72h0M645 583h0M255 590h0M539 396h0M949 236h0M93 19h0M303 199h0M132 478h0M134 141h0M622 418h0M1108 147h0M50 655h0M1085 421h0M1078 530h0M33 39h0M751 379h0M624 153h0M746 21h0M343 356h0M1082 396h0M563 222h0M1057 577h0M660 72h0M10 118h0M909 149h0M370 137h0M10 3h0M362 103h0M15 648h0M936 415h0M140 151h0M76 578h0M454 620h0M1150 488h0M725 456h0M373 628h0M1022 82h0M276 552h0M1026 327h0M1044 59h0M869 120h0M10 101h0M104 407h0M861 651h0M958 288h0M69 471h0M740 264h0M781 642h0M902 479h0M1122 233h0M943 221h0M1138 525h0M1167 490h0M799 13h0M862 495h0M789 257h0M132 313h0M1042 234h0M980 470h0M428 320h0M1175 148h0M451 212h0M536 99h0M577 139h0M1184 528h0M304 393h0M591 630h0M704 86h0M485 654h0M154 96h0M864 442h0M955 616h0M968 22h0M38 42h0M953 577h0M375 42h0M458 396h0M937 83h0M540 385h0M468 171h0M1124 214h0M570 511h0M985 190h0M875 30h0M891 628h0M964 624h0M657 356h0M666 622h0M375 364h0M565 536h0M31 365h0M1078 20h0M644 228h0M422 395h0M894 406h0M230 394h0M874 115h0M258 284h0M31 106h0M821 480h0M838 406h0M360 298h0M517 513h0M297 361h0M65 26h0M652 80h0M1015 111h0M4 366h0M124 47h0M807 450h0M1179 2h0M468 486h0M176 37h0M58 566h0M276 334h0M1027 473h0M267 525h0M272 46h0M593 222h0M391 187h0M670 326h0M992 33h0M614 12h0M167 536h0M979 8h0M307 371h0M1176 123h0M265 235h0M922 450h0M946 466h0M122 574h0M1142 338h0M379 184h0M1181 428h0M3 266h0M823 89h0M739 592h0M108 193h0M486 398h0M1029 158h0M911 159h0M1126 577h0M311 654h0M789 426h0M1081 364h0M699 52h0M348 372h0M1162 158h0M447 106h0M507 477h0M443 240h0M725 230h0M386 11h0M283 336h0M204 68h0M258 120h0M677 240h0M499 423h0M1159 648h0M689 26h0M534 258h0M462 349h0M15 330h0M560 551h0M784 87h0M608 82h0M457 164h0M956 311h0M494 112h0M129 519h0M341 568h0M960 243h0M187 411h0M309 116h0M610 559h0M1 373h0M1018 553h0M1005 424h0M542 300h0M635 67h0M545 483h0M779 87h0M1151 21h0M427 333h0M331 529h0M707 362h0M1075 173h0M444 231h0M786 239h0M867 400h0M562 495h0M908 232h0M739 36h0M717 276h0M338 5h0M1111 605h0M1175 447h0M747 104h0M591 488h0M1106 280h0M107 71h0M67 352h0M139 599h0M940 427h0M414 125h0M156 452h0M1051 364h0M525 588h0M553 643h0M215 14h0M800 287h0M588 530h0M598 252h0M497 440h0M102 140h0M528 654h0M1089 154h0M521 174h0M1157 86h0M472 70h0M716 130h0M79 382h0M582 100h0M1115 18h0M753 375h0M976 41h0M641 48h0M759 267h0M129 652h0M74 261h0M306 254h0M874 41h0M14 44h0M300 526h0M787 238h0M36 39h0M863 368h0M161 423h0M983 604h0M911 255h0M88 542h0M764 589h0M661 144h0M452 437h0M590 435h0M1064 107h0M96 319h0M767 564h0M829 631h0M741 574h0M943 134h0M397 53h0M24 515h0M964 316h0M511 295h0M402 287h0M390 623h0M855 115h0M876 273h0M768 261h0M180 435h0M991 376h0M548 539h0M690 279h0M1044 168h0M542 194h0M335 352h0M587 363h0M221 531h0M904 582h0M704 572h0M420 507h0M1134 112h0M859 417h0M409 203h0M905 214h0M1124 489h0M292 559h0M335 429h0M167 155h0M1175 303h0M856 628h0M91 532h0M1073 436h0M561 211h0M340 176h0M216 654h0M1096 563h0M568 266h0M587 165h0M283 88h0M823 146h0M589 26h0M959 634h0M171 367h0M551 370h0M790 19h0M106 585h0M370 545h0M573 340h0M133 569h0M574 510h0M410 139h0M1154 468h0M1134 267h0M306 313h0M811 426h0M582 398h0M172 406h0M533 49h0M598 158h0M841 293h0M42 378h0M333 657h0M1100 580h0M65 48h0M593 378h0M365 379h0M366 596h0M2 321h0M242 421h0M96 549h0M231 648h0M292 307h0M1002 62h0M1014 300h0M538 213h0M150 251h0M556 195h0M499 470h0M790 541h0M814 202h0M1156 370h0M584 450h0M463 630h0M520 193h0M462 564h0M153 254h0M508 515h0M164 38h0M509 594h0M280 539h0M1047 201h0M1157 58h0M111 644h0M56 590h0M1071 600h0M458 119h0M646 18h0M1033 287h0M674 489h0M383 268h0M400 65h0M892 660h0M758 655h0M465 7h0M324 281h0M471 598h0M1125 570h0M1020 654h0M1016 344h0M45 130h0M421 578h0M162 399h0M164 411h0M306 277h0M715 498h0M110 648h0M6 51h0M813 230h0M903 338h0M530 622h0M158 229h0M360 319h0M773 114h0M538 508h0M400 204h0M1064 413h0M266 102h0M327 661h0M759 156h0M305 83h0M459 152h0M224 342h0M347 629h0M644 525h0M830 203h0M161 651h0M1162 627h0M589 97h0M1055 121h0M252 230h0M119 431h0M322 421h0M660 659h0M182 138h0M768 6h0M1152 266h0M402 547h0M338 571h0M769 477h0M496 69h0M354 18h0M821 350h0M595 74h0M398 440h0M929 351h0M1156 448h0M931 583h0M720 570h0M74 237h0M219 272h0M429 511h0M176 246h0M616 21h0M593 601h0M862 39h0M574 612h0M398 8h0M723 22h0M626 49h0M494 63h0M269 548h0M904 553h0M419 366h0M449 150h0M362 598h0M1016 424h0M624 374h0M861 428h0M533 347h0M4 567h0M1184 214h0M605 323h0M1151 147h0M1179 242h0M637 585h0M287 467h0M270 598h0M319 406h0M494 365h0M476 392h0M124 74h0M221 165h0M365 9h0M426 356h0M702 623h0M717 539h0M920 124h0M131 403h0M757 309h0M1177 352h0M402 433h0M153 328h0M62 569h0M52 38h0M438 9h0M920 25h0M175 627h0M1043 407h0M536 341h0M799 475h0M158 29h0M14 119h0M946 252h0M104 359h0M1019 631h0M874 53h0M903 558h0M117 399h0M463 237h0M211 413h0M401 508h0M814 148h0M526 525h0M311 33h0M615 142h0M468 445h0M1126 477h0M709 257h0M106 113h0M1056 380h0M1004 269h0M222 96h0M100 495h0M900 35h0M109 395h0M739 336h0M666 482h0M1137 93h0M136 143h0M14 661h0M1182 370h0M802 172h0M780 258h0M362 565h0M637 465h0M637 457h0M744 658h0M720 47h0M863 295h0M651 403h0M875 50h0M452 155h0M989 409h0M993 120h0M1109 245h0M85 215h0M579 630h0M986 442h0M936 327h0M105 418h0M35 616h0M977 493h0M539 368h0M662 9h0M1125 294h0M1065 158h0M857 639h0M1124 304h0M88 494h0M267 199h0M1054 247h0M172 544h0M61 411h0M240 85h0M371 581h0M727 583h0M1034 597h0M1046 268h0M815 592h0M530 217h0M665 624h0M317 566h0M747 183h0M207 425h0M161 239h0M26 308h0M1096 257h0M601 356h0M129 279h0M29 236h0M653 491h0M88 239h0M428 272h0M745 10h0M619 515h0M773 280h0M860 255h0M256 350h0M117 589h0M1157 87h0M62 468h0M921 564h0M480 453h0M887 234h0M25 591h0M623 522h0M545 23h0M1124 387h0M567 631h0M856 275h0M976 493h0M253 226h0M377 469h0M1172 281h0M193 451h0M739 105h0M110 546h0M650 410h0M728 380h0M320 30h0M521 36h0M1185 7h0M468 365h0M193 268h0M674 195h0M133 411h0M1050 611h0M763 435h0M184 444h0M111 437h0M642 593h0M1162 498h0M494 520h0M511 212h0M893 409h0M980 485h0M244 531h0M130 185h0M215 424h0M363 306h0M480 118h0M1131 515h0M529 437h0M746 378h0M92 394h0M571 88h0M899 227h0M792 483h0M999 142h0M717 410h0M703 382h0M345 59h0M411 628h0M741 313h0M411 650h0M271 308h0M673 91h0M286 130h0M1027 634h0M795 130h0M37 393h0M964 649h0M1125 193h0M960 552h0M677 410h0M258 232h0M1039 554h0M719 638h0M879 595h0M322 652h0M1141 112h0M1019 403h0M154 344h0M938 574h0M519 472h0M608 356h0M932 152h0M914 62h0M983 158h0M51 437h0M784 18h0M69 507h0M431 516h0M633 528h0M1016 576h0M12 611h0M537 609h0M252 563h0M383 257h0M44 568h0M837 4h0M494 84h0M147 472h0M330 135h0M951 253h0M326 161h0M955 588h0M871 151h0M220 209h0M1121 215h0M396 618h0M795 164h0M949 188h0M887 127h0M145 353h0M339 11h0M1041 606h0M286 594h0M789 20h0M674 283h0M688 499h0M972 32h0M547 262h0M964 214h0M1012 289h0M235 223h0M496 284h0M695 440h0M955 238h0M252 558h0M1165 479h0M982 128h0M82 207h0M712 359h0M828 441h0M500 245h0M387 227h0M505 535h0M5 183h0M907 332h0M966 78h0M14 644h0M987 552h0M798 514h0M1174 561h0M946 421h0M399 127h0M11 613h0M1142 633h0M393 270h0M176 449h0M17 466h0M200 194h0M1167 462h0M279 547h0M772 446h0M252 600h0M311 353h0M565 148h0M360 496h0M836 518h0M1050 611h0M278 449h0M272 442h0M572 613h0M1028 536h0M492 304h0M357 633h0M357 297h0M313 521h0M953 243h0M397 569h0M1129 373h0M461 233h0M486 421h0M1070 395h0M630 108h0M299 190h0M348 617h0M1155 548h0M870 406h0M980 21h0M1059 289h0M957 205h0M226 244h0M929 257h0M1140 55h0M880 216h0M792 610h0M298 497h0M166 95h0M552 642h0M712 488h0M615 15h0M39 347h0M1115 139h0M994 476h0M514 179h0M637 486h0M1035 55h0M785 50h0M1013 266h0M991 5h0M527 4h0M389 371h0M420 317h0M415 601h0M677 611h0M746 493h0M836 377h0M79 642h0M406 590h0M1155 622h0M637 158h0M1093 473h0M1140 633h0M885 600h0M725 123h0M811 567h0M154 400h0M1008 533h0M1119 625h0M366 483h0M1171 4h0M636 274h0M597 526h0M429 464h0M656 134h0M1179 529h0M30 158h0M333 552h0M1014 424h0M1052 4h0M269 480h0M145 428h0M909 305h0M750 437h0M457 280h0M569 562h0M384 367h0M104 191h0M611 597h0M196 600h0M688 282h0M180 613h0M726 15h0M845 210h0M248 184h0M521 267h0M788 77h0M848 574h0M845 74h0M724 223h0M821 175h0M652 362h0M428 177h0M946 347h0M829 175h0M335 548h0M975 438h0M583 126h0M586 562h0M593 67h0M43 198h0M1031 255h0M573 142h0M1100 418h0M638 336h0M230 261h0M1065 10h0M617 141h0M156 411h0M155 146h0M488 195h0M1062 183h0M282 104h0M215 149h0M354 348h0M881 285h0M121 302h0M870 615h0M1123 144h0M237 226h0M827 628h0M133 518h0M12 345h0M907 116h0M396 616h0M661 151h0M673 495h0M568 65h0M940 591h0M1038 459h0M536 595h0M2 639h0M559 401h0M398 521h0M451 81h0M638 242h0M1000 455h0M824 292h0M781 621h0M1094 601h0M405 118h0M296 528h0M1032 460h0M524 378h0M216 178h0M1026 467h0M364 168h0M80 327h0M1070 170h0M841 495h0M585 74h0M1142 590h0M535 447h0M669 468h0M231 404h0M629 13h0M726 290h0M6 198h0M1052 14h0M386 486h0M891 111h0M19 567h0M188 538h0M170 420h0M1073 655h0M155 101h0M588 536h0M95 523h0M353 397h0M841 398h0M165 471h0M1130 37h0M773 303h0M591 193h0M62 390h0M385 70h0M40 183h0M222 189h0M732 581h0M524 40h0M58 452h0M832 97h0M91 74h0M22 450h0M1130 74h0M158 454h0M546 116h0M218 525h0M822 37h0M803 78h0M582 67h0M253 554h0M591 329h0M205 233h0M666 292h0M348 387h0M119 320h0M877 501h0M625 488h0M403 245h0M521 87h0M102 612h0M959 576h0M1184 302h0M660 313h0M164 52h0M728 74h0M957 430h0M730 326h0M1002 148h0M418 345h0M854 58h0M399 279h0M1000 443h0M300 452h0M195 554h0M352 432h0M1074 409h0M1120 106h0M448 357h0M962 653h0M1113 608h0M293 606h0M177 631h0M464 251h0M834 428h0M376 172h0M191 639h0M815 81h0M197 546h0M305 220h0M973 331h0M573 467h0M1020 524h0M313 408h0M255 168h0M179 475h0M464 160h0M836 243h0M907 609h0M1163 655h0M201 628h0M286 637h0M571 230h0M137 518h0M953 510h0M289 343h0M1160 108h0M817 225h0M671 344h0M175 4h0M5 129h0M525 388h0M792 15h0M186 380h0M618 434h0M1018 232h0M870 44h0M624 558h0M385 582h0M1080 385h0M697 37h0M900 259h0M446 199h0M797 208h0M1045 292h0M324 222h0M122 120h0M906 298h0M658 78h0M501 342h0M1169 473h0M16 388h0M15 118h0M28 322h0M768 633h0M157 67h0M881 63h0M500 494h0M878 575h0M591 99h0M173 287h0M2 573h0M894 386h0M553 518h0M272 435h0M524 332h0M316 567h0M511 342h0M136 464h0M16 53h0M972 435h0M7 653h0M94 183h0M414 267h0M253 504h0M1180 331h0M452 170h0M519 365h0M483 651h0M1133 589h0M1179 274h0M791 139h0M889 91h0M1128 417h0M205 216h0M480 369h0M906 134h0M358 145h0M476 216h0M476 150h0M1062 164h0M316 438h0M944 573h0M695 75h0M388 9h0M35 537h0M339 59h0M258 125h0M861 148h0M1083 633h0M112 502h0M679 405h0M339 66h0M125 4h0M920 644h0M691 128h0M343 32h0M614 320h0M156 294h0M701 296h0M13 457h0M143 31h0M685 295h0M857 23h0M259 385h0M746 297h0M1015 465h0M188 118h0M201 491h0M521 538h0M893 400h0M645 264h0M496 162h0M860 322h0M768 636h0M778 208h0M1061 205h0M675 626h0M450 4h0M360 482h0M513 142h0M940 430h0M829 94h0M513 99h0M836 661h0M836 204h0M241 245h0M774 183h0M1120 420h0M1108 645h0M554 624h0M524 504h0M165 153h0M64 323h0M1161 657h0M1002 213h0M626 88h0M757 349h0M248 249h0M1074 117h0M1078 14h0M394 112h0M257 182h0M784 272h0M672 193h0M634 534h0M1142 145h0M994 236h0M547 173h0M1036 406h0M7 371h0M773 143h0M1183 641h0M317 2h0M1063 467h0M1138 174h0M870 506h0M163 152h0M643 505h0M969 144h0M494 647h0M849 396h0M557 576h0M611 295h0M396 218h0M183 30h0M1043 255h0M145 538h0M1047 581h0M106 537h0M583 446h0M216 611h0M656 100h0M572 57h0M185 180h0M446 323h0M451 422h0M958 397h0M331 143h0M487 317h0M1105 1h0M652 26h0M381 639h0M1052 136h0M954 522h0M601 26h0M209 435h0M213 160h0M502 331h0M108 621h0M980 160h0M1151 188h0M499 207h0M1086 308h0M186 620h0M325 400h0M339 608h0M471 85h0M106 65h0M713 394h0M232 523h0M896 53h0M28 337h0M351 201h0M734 192h0M510 65h0M866 208h0M730 266h0M47 393h0M806 547h0M1173 647h0M236 528h0M1082 337h0M823 490h0M531 188h0M418 455h0M391 411h0M260 125h0M328 607h0M992 376h0M658 561h0M1032 522h0M686 477h0M686 247h0M599 586h0M25 35h0M121 629h0M526 306h0M724 516h0M816 627h0M314 277h0M155 100h0M269 389h0M4 514h0M1046 25h0M1091 209h0M1112 95h0M670 101h0M1076 430h0M174 77h0M429 633h0M673 52h0M754 448h0M440 375h0M862 215h0M383 53h0M1076 522h0M433 185h0M608 330h0M190 337h0M831 639h0M649 624h0M1004 660h0M370 11h0M379 647h0M559 118h0M294 106h0M822 336h0M281 359h0M616 319h0M790 15h0M928 298h0M919 308h0M422 374h0M768 584h0M280 292h0M36 117h0M316 391h0M1160 200h0M615 147h0M624 161h0M248 106h0M874 332h0M336 572h0M1147 241h0M405 381h0M668 132h0M1074 193h0M393 292h0M1048 631h0M329 252h0M82 349h0M1122 314h0M386 148h0M578 96h0M670 366h0M1179 42h0M921 574h0M897 454h0M1093 471h0M1185 108h0M286 364h0M349 59h0M938 134h0M1030 546h0M114 315h0M26 645h0M105 220h0M258 281h0M729 94h0M785 498h0M595 304h0M864 89h0M36 291h0M356 270h0M215 63h0M808 487h0M921 42h0M708 352h0M66 264h0M143 618h0M758 118h0M127 304h0M737 200h0M195 133h0M1130 227h0M998 542h0M554 158h0M619 346h0M495 158h0M335 71h0M454 115h0M773 144h0M1123 33h0M38 229h0M379 379h0M75 657h0M616 627h0M110 253h0M194 605h0M442 507h0M727 603h0M615 65h0M1021 517h0M912 498h0M162 154h0M868 9h0M959 291h0M1106 50h0M25 357h0M878 89h0M716 224h0M565 401h0M355 208h0M668 436h0M237 644h0M613 646h0M843 378h0M592 13h0M171 456h0M1094 542h0M746 298h0M681 274h0M407 336h0M446 277h0M266 647h0M563 124h0M142 305h0M542 247h0M102 601h0M602 100h0M1009 245h0M148 2h0M1084 52h0M1081 598h0M1100 94h0M922 509h0M185 108h0M657 597h0M643 487h0M277 384h0M246 245h0M215 11h0M1172 522h0M368 636h0M308 529h0M746 482h0M336 266h0M986 137h0M783 530h0M915 394h0M986 149h0M967 590h0M477 400h0M199 10h0M72 597h0M463 219h0M375 473h0M656 334h0M69 216h0M456 96h0M1003 354h0M672 28h0M433 142h0M624 42h0M182 185h0M849 402h0M1012 652h0M478 390h0M346 167h0M97 111h0M947 511h0M715 553h0M1157 16h0M479 582h0M1172 19h0M649 618h0M1026 488h0M775 456h0M622 347h0M771 617h0M1098 418h0M292 111h0M988 337h0M643 79h0M593 292h0M271 288h0M475 23h0M507 323h0M137 80h0M989 591h0M742 361h0M157 22h0M210 127h0M128 236h0M1081 118h0M1018 381h0M987 138h0M618 23h0M307 125h0M222 460h0M1057 246h0M419 489h0M399 414h0M133 71h0M213 661h0M201 324h0M510 441h0M245 166h0M1130 22h0M1093 294h0M439 295h0M149 391h0M805 524h0M795 444h0M1148 163h0M1037 402h0M971 607h0M1020 613h0M848 363h0M572 416h0M115 198h0M245 20h0M810 2h0M152 134h0M313 337h0M631 19h0M478 190h0M919 184h0M691 469h0M561 440h0M1056 468h0M723 101h0M915 454h0M872 383h0M654 39h0M1164 246h0M329 222h0M495 218h0M614 611h0M264 66h0M128 442h0M380 196h0M824 139h0M222 521h0M1120 289h0M251 232h0M813 644h0M911 559h0M816 534h0M1064 2h0M731 564h0M972 116h0M1040 594h0M108 330h0M523 129h0M323 217h0M974 185h0M151 473h0M610 319h0M874 242h0M1185 641h0M170 195h0M1072 546h0M205 265h0M884 469h0M711 80h0M379 564h0M477 524h0M44 34h0M997 503h0M360 395h0M1072 173h0M76 344h0M904 303h0M555 485h0M931 289h0M690 616h0M1053 617h0M871 22h0M851 322h0M315 239h0M571 625h0M1168 173h0M664 624h0M1165 216h0M877 229h0M391 540h0M826 635h0M293 589h0M985 440h0M287 533h0M305 408h0M1129 70h0M529 39h0M94 213h0M550 520h0M74 147h0M1148 343h0M29 310h0M738 338h0M1071 490h0M69 152h0M1052 620h0M978 340h0M535 16h0M930 566h0M360 53h0M708 359h0M330 554h0M114 559h0M592 386h0M581 404h0M348 601h0M1023 11h0M548 141h0M665 16h0M1141 444h0M698 177h0M541 347h0M531 78h0M95 551h0M243 69h0M1143 228h0M73 11h0M471 221h0M751 367h0M1046 74h0M351 31h0M219 88h0M149 582h0M664 382h0M586 365h0M776 399h0M1159 615h0M596 461h0M747 590h0M1181 326h0M3 332h0M437 200h0M233 536h0M201 106h0M544 179h0M798 228h0M963 291h0M139 401h0M502 364h0M386 11h0M1154 64h0M9 298h0M178 597h0M384 362h0M537 591h0M1148 101h0M1099 463h0M445 283h0M461 389h0M679 660h0M984 336h0M382 136h0M697 41h0M214 175h0M1176 212h0M69 380h0M207 206h0M262 122h0M853 213h0M819 115h0M881 101h0M1018 572h0M106 324h0M1134 375h0M170 108h0M637 169h0M487 553h0M972 442h0M1050 89h0M973 298h0M339 52h0M1062 253h0M716 317h0M914 323h0M1123 461h0M358 121h0M1078 270h0M1087 17h0M294 386h0M564 356h0M728 282h0M296 571h0M892 436h0M1184 58h0M835 184h0M952 484h0M936 560h0M779 500h0M1154 601h0M1006 605h0M1037 640h0M605 404h0M1108 420h0M252 183h0M129 430h0M137 117h0M931 96h0M750 649h0M722 98h0M388 303h0M366 418h0M1176 262h0M141 52h0M505 83h0M688 241h0M525 327h0M1002 530h0M1104 96h0M585 94h0M1025 24h0M677 443h0M467 53h0M648 8h0M758 191h0M379 616h0M158 652h0M331 653h0M81 484h0M191 540h0M526 304h0M247 23h0M870 191h0M29 444h0M181 336h0M735 366h0M1158 306h0M500 478h0M279 224h0M284 279h0M343 388h0M143 155h0M248 3h0M654 99h0M1017 419h0M651 36h0M251 535h0M401 396h0M654 394h0M544 31h0M620 491h0M173 374h0M209 25h0M715 21h0M1043 281h0M661 519h0M1070 552h0M932 640h0M1008 151h0M536 365h0M1077 285h0M882 559h0M917 263h0M21 402h0M616 302h0M728 132h0M226 123h0M78 372h0M240 108h0M319 170h0M499 245h0M84 437h0M166 396h0M711 88h0M438 244h0M367 263h0M460 67h0M766 262h0M1091 383h0M690 218h0M759 549h0M1037 648h0M358 35h0M337 255h0M593 209h0M242 241h0M576 233h0M158 581h0M1110 123h0M344 316h0M725 556h0M983 48h0M150 418h0M1099 239h0M728 621h0M269 32h0M90 559h0M877 27h0M929 480h0M387 224h0M861 290h0M184 438h0M693 629h0M655 396h0M630 174h0M423 619h0M714 540h0M251 128h0M1064 176h0M169 130h0M251 475h0M999 498h0M76 279h0M1119 235h0M948 289h0M883 422h0M582 399h0M769 355h0M863 265h0M423 545h0M143 493h0M1029 354h0M121 252h0M1129 250h0M400 42h0M876 375h0M115 592h0M378 157h0M1079 224h0M490 597h0M526 295h0M113 119h0M403 574h0M874 478h0M274 653h0M45 336h0M194 555h0M65 156h0M524 653h0M539 106h0M189 368h0M35 312h0M48 5h0M1006 447h0M1087 110h0M1059 149h0M355 563h0M211 161h0M6 11h0M1026 397h0M915 331h0M700 160h0M111 26h0M690 8h0M560 117h0M737 582h0M1079 189h0M1081 654h0M956 9h0M389 103h0M47 355h0M549 9h0M78 276h0M1117 222h0M348 658h0M458 612h0M836 536h0M497 64h0M929 11h0M548 451h0M957 214h0M21 572h0M775 144h0M1021 239h0M1095 630h0M1055 307h0M931 607h0M724 322h0M989 456h0M623 14h0M315 185h0M491 311h0M144 218h0M152 642h0M513 463h0M874 219h0M762 112h0M1153 29h0M724 263h0M396 414h0M16 84h0M672 403h0M763 83h0M1133 535h0M933 291h0M693 93h0M292 293h0M715 114h0M1142 574h0M1150 493h0M993 122h0M993 433h0M646 632h0M546 49h0M429 167h0M36 659h0M1033 5h0M921 506h0M490 536h0M1157 478h0M581 421h0M404 95h0M338 80h0M1162 500h0M983 110h0M576 484h0M1055 639h0M399 111h0M363 150h0M733 233h0M603 440h0M1138 492h0M522 106h0M388 235h0M926 638h0M799 202h0M981 498h0M913 64h0M863 306h0M207 511h0M1160 143h0M729 46h0M378 640h0M867 155h0M1051 497h0M492 52h0M405 448h0M1167 209h0M847 531h0M738 17h0M863 36h0M1152 426h0M247 251h0M263 556h0M1019 436h0M140 433h0M604 566h0M209 144h0M133 279h0M1147 124h0M675 375h0M1096 181h0M1113 644h0M1152 616h0M150 596h0M51 228h0M191 595h0M913 316h0M373 210h0M897 69h0M739 40h0M551 593h0M942 16h0M207 415h0M543 298h0M318 275h0M950 216h0M716 441h0M853 320h0M15 185h0M200 500h0M1112 637h0M354 149h0M905 501h0M208 147h0M97 193h0M739 622h0M890 277h0M357 346h0M1093 362h0M272 489h0M830 99h0M646 158h0M512 566h0M283 396h0M548 72h0M922 43h0M48 584h0M409 247h0M650 288h0M159 252h0M913 428h0M1116 457h0M499 341h0M396 164h0M518 621h0M490 102h0M764 57h0M737 120h0M1074 288h0M784 415h0M654 224h0M33 469h0M11 261h0M922 503h0M1048 432h0M380 139h0M453 121h0M96 84h0M1158 657h0M642 298h0M1027 596h0M849 273h0M684 221h0M609 308h0M827 12h0M158 162h0M926 499h0M39 143h0" stroke="#fff" stroke-opacity="0.5" stroke-width="1.2" stroke-linecap="round" /><path d="M197 618h0M484 185h0M543 437h0M199 176h0M19 36h0M888 119h0M862 164h0M802 621h0M152 349h0M716 316h0M479 416h0M10 638h0M313 145h0M341 466h0M146 441h0M266 469h0M331 121h0M886 181h0M650 533h0M821 450h0M710 360h0M416 330h0M25 655h0M153 345h0M65 642h0M28 277h0M278 560h0M486 36h0M1151 523h0M518 556h0M782 194h0M3 117h0M464 657h0M176 273h0M688 291h0M91 268h0M428 320h0M149 439h0M670 367h0M1060 531h0M1022 570h0M123 211h0M98 163h0M577 615h0M685 633h0M1079 440h0M486 522h0M781 224h0M926 314h0M785 22h0M471 136h0M967 649h0M494 514h0M799 442h0M615 69h0M74 370h0M715 90h0M503 462h0M128 628h0M699 371h0M417 480h0M347 556h0M371 362h0M3 52h0M651 510h0M1092 375h0M71 177h0M2 411h0M978 81h0M226 341h0M737 281h0M189 619h0M137 489h0M756 580h0M969 473h0M462 154h0M612 368h0M20 525h0M657 307h0M79 115h0M116 418h0M780 626h0M77 71h0M1026 431h0M1098 11h0M440 400h0M329 411h0M122 488h0M610 514h0M1053 508h0M553 325h0M306 279h0M467 103h0M1033 173h0M569 599h0M193 446h0M795 10h0M1109 213h0M975 635h0M67 283h0M870 355h0M543 259h0M412 635h0M549 365h0M545 232h0M119 192h0M227 523h0M835 551h0M769 203h0M813 384h0M780 28h0M285 581h0M753 410h0M477 556h0M873 89h0M946 61h0M944 472h0M664 661h0M244 145h0M829 134h0M1165 124h0M747 119h0M1019 331h0M538 48h0M62 409h0M764 433h0M896 314h0M245 92h0M762 385h0M437 172h0M252 225h0M1150 293h0M1115 111h0M109 211h0M1175 505h0M987 583h0M432 49h0M1041 203h0M451 248h0M1124 661h0M466 166h0M119 175h0M422 265h0M377 614h0M59 473h0M762 85h0M664 497h0M1049 563h0M95 360h0M199 209h0M54 109h0M845 577h0M332 192h0M784 558h0M1155 66h0M1124 609h0M1045 273h0M413 339h0M152 205h0M918 255h0M1163 432h0M454 355h0M1140 142h0M997 354h0M449 499h0M1116 27h0M884 486h0M769 593h0M188 229h0M924 658h0M942 110h0M930 579h0M460 293h0M752 331h0M127 499h0M134 315h0M342 12h0M538 77h0M270 145h0M529 491h0M839 97h0M1015 293h0M636 379h0M959 214h0M179 322h0M465 334h0M757 228h0M560 80h0M913 414h0M927 444h0M101 4h0M981 74h0M420 643h0M156 166h0M849 583h0M191 110h0M511 532h0M231 67h0M279 653h0M562 151h0M1005 40h0M8 315h0M102 82h0M350 126h0M602 635h0M974 414h0M120 301h0M66 547h0M715 658h0M161 539h0M1133 140h0M92 471h0M914 499h0M1073 365h0M309 360h0M372 374h0M88 2h0M771 437h0M1068 486h0M1042 270h0M786 115h0M904 383h0M774 26h0M841 576h0M418 605h0M197 121h0M125 198h0M1171 33h0M163 59h0M25 188h0M955 204h0M528 344h0M1125 310h0M1019 597h0M590 82h0M955 226h0M380 350h0M310 382h0M814 113h0M316 273h0M556 585h0M509 252h0M312 125h0M98 329h0M170 218h0M351 226h0M146 390h0M339 490h0M306 395h0M838 120h0M292 161h0M935 581h0M678 576h0M421 640h0M99 273h0M261 270h0M937 22h0M796 339h0M1113 354h0M146 289h0M974 430h0M419 482h0M111 432h0M1185 551h0M708 201h0M241 357h0M924 260h0M728 376h0M329 152h0M1105 106h0M481 237h0M887 187h0M827 282h0M238 230h0M245 269h0M1006 243h0M1184 409h0M256 205h0M547 222h0M945 251h0M603 577h0M1085 238h0M1165 392h0M97 416h0M1032 93h0M175 95h0M638 352h0M674 498h0M221 215h0M395 235h0M450 583h0M1098 359h0M881 503h0M408 462h0M608 87h0M1055 530h0M744 438h0M184 350h0M5 211h0M259 209h0M162 632h0M1009 268h0M666 415h0M38 146h0M1124 591h0M196 585h0M1049 409h0M12 51h0M802 641h0M1129 47h0M41 25h0M744 383h0M769 611h0M984 192h0M841 262h0M1185 232h0M605 292h0M1175 145h0M1125 430h0M253 265h0M212 239h0M775 184h0M617 226h0M480 578h0M105 51h0M904 561h0M223 404h0M1020 406h0M1135 193h0M1039 445h0M1027 198h0M1105 315h0M97 512h0M1069 373h0M245 650h0M804 636h0M1181 364h0M110 12h0M1001 117h0M879 455h0M230 637h0M503 140h0M442 466h0M82 586h0M180 244h0M718 472h0M472 161h0M75 135h0M946 123h0M75 130h0M293 147h0M799 409h0M108 369h0M460 247h0M502 510h0M111 434h0M325 101h0M1132 558h0M303 47h0M3 585h0M98 41h0M323 77h0M331 236h0M1103 47h0M274 219h0M1059 449h0M838 369h0M89 102h0M1153 264h0M599 204h0M379 561h0M55 568h0M1025 555h0M675 605h0M302 206h0M737 452h0M219 43h0M1166 98h0M1179 274h0M867 187h0M73 509h0M285 458h0M259 47h0M662 645h0M509 241h0M227 81h0M896 78h0M73 230h0M473 24h0M809 364h0M1176 511h0M744 515h0M820 513h0M458 429h0M1161 580h0M830 81h0M1176 367h0M1156 522h0M967 168h0M290 5h0M71 647h0M1037 367h0M735 429h0M283 177h0M869 390h0M429 97h0M279 109h0M1180 9h0M1068 26h0M621 572h0M291 445h0M207 559h0M428 555h0M511 108h0M567 605h0M59 329h0M753 524h0M57 150h0M228 533h0M221 650h0M859 190h0M146 109h0M280 53h0M401 577h0M280 19h0M543 311h0M716 500h0M1001 221h0M414 458h0M612 258h0M195 93h0M1019 221h0M440 273h0M837 496h0M787 518h0M665 658h0M243 523h0M557 224h0M780 376h0M214 293h0M1096 577h0M1000 350h0M13 286h0M995 380h0M533 285h0M560 437h0M1007 495h0M363 631h0M161 214h0M1086 169h0M478 565h0M778 188h0M36 152h0M75 185h0M812 37h0M570 353h0M219 562h0M692 564h0M954 166h0M385 444h0M817 563h0M88 173h0M717 355h0M1019 338h0M313 293h0M343 80h0M118 640h0M1033 89h0M575 474h0M269 565h0M103 464h0M742 152h0M293 165h0M707 18h0M435 349h0M918 416h0M805 573h0M963 574h0M593 358h0M180 405h0M950 38h0M157 180h0M508 64h0M1097 504h0M771 147h0M597 383h0M827 493h0M464 648h0M471 636h0M37 543h0M1017 515h0M850 344h0M671 422h0M777 420h0M1167 160h0M934 221h0M1125 441h0M809 66h0M482 11h0M188 158h0M529 268h0M233 203h0M985 116h0M1053 74h0M1006 160h0M603 465h0M800 257h0M873 590h0M51 190h0M452 659h0M399 400h0M628 86h0M672 645h0M362 412h0M785 417h0M320 290h0M418 359h0M657 376h0M61 541h0M955 447h0M21 159h0M325 220h0M495 456h0M92 512h0M934 231h0M794 387h0M1129 516h0M1083 358h0M541 313h0M545 113h0M1080 518h0M962 546h0M794 203h0M285 220h0M876 82h0M404 277h0M447 233h0M1184 440h0M1175 134h0M940 248h0M1159 563h0M415 346h0M1055 9h0M344 628h0M851 596h0M179 656h0M505 327h0M270 184h0M126 326h0M1107 581h0M229 495h0M661 406h0M287 186h0M1032 589h0M501 537h0M520 574h0M283 312h0M265 565h0M177 406h0M451 158h0M129 279h0M959 95h0M467 348h0M62 496h0M919 99h0M430 351h0M1040 444h0M415 520h0M754 148h0M941 404h0M59 563h0M238 137h0M848 527h0M508 576h0M622 305h0M589 233h0M425 650h0M335 158h0M225 609h0M681 5h0M861 550h0M1044 520h0M637 592h0M1040 145h0M0 539h0M144 26h0M1162 89h0M101 545h0M1182 514h0M414 77h0M199 424h0M859 565h0M258 85h0M110 405h0M612 328h0M907 655h0M519 85h0M776 266h0M1129 656h0M814 237h0M179 543h0M8 591h0M612 279h0M306 604h0M342 349h0M690 164h0M616 244h0M1168 265h0M130 238h0M543 615h0M329 621h0M187 479h0M913 411h0M1041 380h0M976 592h0M1081 543h0M830 75h0M607 46h0M715 518h0M25 285h0M929 598h0M666 507h0M507 392h0M1055 219h0M64 334h0M913 285h0M554 262h0M67 42h0M671 134h0M595 477h0M889 110h0M579 45h0M286 231h0M1006 460h0M802 634h0M288 308h0M139 521h0M1016 467h0M348 99h0M717 624h0M952 92h0M778 578h0M1074 609h0M44 332h0M1166 552h0M300 136h0M417 632h0M856 397h0M813 242h0M399 435h0M103 217h0M122 175h0M330 606h0M775 66h0M325 526h0M1032 559h0M215 483h0M1083 422h0M792 63h0M684 102h0M1130 401h0M409 170h0M860 297h0M114 334h0M698 579h0M1039 41h0M834 508h0M288 269h0M557 400h0M580 524h0M336 42h0M526 255h0M975 198h0M338 543h0M145 15h0M1101 648h0M871 312h0M503 264h0M395 407h0M891 615h0M206 477h0M1005 564h0M1183 130h0M117 267h0M793 454h0M635 590h0M792 483h0M1112 71h0M724 392h0M580 337h0M331 72h0M74 77h0M159 30h0M852 460h0M800 197h0M879 13h0M445 407h0M918 212h0M75 356h0M757 4h0" stroke="#fff" stroke-opacity="0.8" stroke-width="1.5" stroke-linecap="round" /><path d="M110 614h0M135 354h0M138 432h0M1166 210h0M435 322h0M262 537h0M859 151h0M830 396h0M1098 73h0M119 426h0M723 10h0M311 503h0M799 216h0M580 584h0M227 351h0M293 558h0M997 474h0M467 639h0M480 248h0M1172 16h0M940 341h0M1007 213h0M1125 194h0M186 57h0M565 529h0M561 643h0M490 325h0M340 603h0M125 294h0M1041 149h0M867 438h0M1085 620h0M631 605h0M842 166h0M955 116h0M100 254h0M602 409h0M333 197h0M184 151h0M1007 472h0M521 642h0M1059 153h0M440 240h0M1114 602h0M565 325h0M445 571h0M411 43h0M484 112h0M35 650h0M30 561h0M49 442h0M927 129h0M926 492h0M580 604h0M701 420h0M86 104h0M409 271h0M185 77h0M6 322h0M991 551h0M902 10h0M1164 282h0M682 123h0M285 144h0M36 87h0M774 390h0M354 291h0M235 64h0M270 396h0M433 612h0M552 649h0M421 495h0M226 19h0M329 372h0M1117 190h0M685 233h0M1185 381h0M145 148h0M164 503h0M1132 467h0M719 430h0M280 588h0M993 490h0M1131 323h0M1052 435h0M1079 660h0M251 17h0M183 150h0M498 524h0M424 227h0M1166 360h0M36 203h0M822 8h0M386 657h0M55 275h0M8 287h0M794 193h0M620 617h0M466 596h0M837 83h0M685 450h0M118 100h0M938 448h0M729 63h0M662 436h0M293 97h0M368 474h0M1067 306h0M5 252h0M794 51h0M1165 218h0M977 68h0M614 116h0M463 521h0M1125 375h0M731 434h0M564 357h0M938 54h0M899 538h0M564 358h0M5 408h0M41 105h0M722 381h0M853 9h0M469 404h0M41 230h0M1011 526h0M783 243h0M896 362h0M801 36h0M773 102h0M1018 132h0M272 340h0M632 216h0M376 453h0M787 221h0M414 51h0M990 95h0M626 495h0M1066 35h0M943 242h0M1053 95h0M183 48h0M510 598h0M983 225h0M63 223h0M224 393h0M825 355h0M537 297h0M643 152h0M955 349h0M20 651h0M721 221h0M7 31h0M984 81h0M192 324h0M109 416h0M79 280h0M824 550h0M128 469h0" stroke="#fff" stroke-opacity="0.95" stroke-width="2.4" stroke-linecap="round" filter="url(#blur1)"/><path d="M398 281h0M1036 490h0M497 82h0M623 473h0M667 123h0M839 573h0M459 529h0M835 143h0M79 540h0M606 479h0M1124 183h0M491 59h0M571 155h0M221 549h0M112 169h0M319 22h0M602 609h0M158 169h0M652 571h0M390 496h0M812 547h0M801 212h0M286 516h0M813 142h0M73 30h0M863 384h0M606 423h0M412 107h0M1116 308h0M312 288h0M144 318h0M962 560h0M720 218h0M781 208h0M303 208h0M198 361h0M199 305h0M134 57h0M421 13h0M903 121h0M80 326h0M893 630h0M362 242h0M1067 294h0M1072 454h0M609 238h0M495 409h0M514 468h0M576 393h0M126 174h0M930 214h0M781 458h0M895 260h0M8 262h0M1030 371h0M6 92h0M607 380h0M164 67h0M557 50h0M1139 503h0" stroke="#fff" stroke-opacity="1.0" stroke-width="3.6" stroke-linecap="round" filter="url(#blur1)"/><g transform="translate(273,252)" fill="#fff"><circle cx="-6" cy="0.5" r="4.3"/><circle cx="1" cy="-4.6" r="4.4"/><rect x="-6.5" y="0" width="12.5" height="7.5"/><path d="M5.5 1.5L10.5 -1V7.5L5.5 5Z"/></g><defs><clipPath id="rockClip"><path d="M638.5 197.1L644.5 197.2L667.1 202.6L693.6 215.9L709.0 229.1L710.1 237.9L702.4 244.5L700.2 262.2L704.6 277.6L713.4 288.6L722.3 295.2L711.2 296.3L700.2 304.0L693.6 317.3L687.0 326.1L677.0 337.0L671.0 355.0L669.0 375.0L673.8 394.4L667.1 405.5L656.1 412.1L629.7 407.7L614.2 407.7L608.6 414.4L600.0 434.6L595.7 447.6L592.8 457.6L582.7 463.4L565.4 457.6L545.3 449.0L530.9 441.8L510.7 434.6L492.0 426.0L476.2 408.7L467.5 394.3L464.6 382.8L469.0 365.5L476.4 345.0L477.6 339.6L483.4 320.8L498.1 302.9L511.7 288.0L518.4 279.9L532.0 266.3L546.9 252.8L559.1 241.9L574.0 225.7L586.2 218.9L599.8 214.8L613.3 206.7L633.6 198.6Z"/></clipPath><linearGradient id="rockBase" x1="511" y1="245" x2="651" y2="445" gradientUnits="userSpaceOnUse"><stop offset="0" stop-color="#948d7c"/><stop offset="0.45" stop-color="#878070"/><stop offset="1" stop-color="#605b50"/></linearGradient><linearGradient id="rockRight" x1="641" y1="0" x2="723" y2="0" gradientUnits="userSpaceOnUse"><stop offset="0" stop-color="#000" stop-opacity="0"/><stop offset="0.45" stop-color="#000" stop-opacity="0.25"/><stop offset="1" stop-color="#000" stop-opacity="0.9"/></linearGradient><filter id="rtexD" x="0" y="0" width="1" height="1"><feTurbulence type="fractalNoise" baseFrequency="0.035 0.08" numOctaves="3" seed="11"/><feColorMatrix type="matrix" values="0 0 0 0 0.2  0 0 0 0 0.19  0 0 0 0 0.16  -3 0 0 0 1.55"/><feComposite in2="SourceAlpha" operator="in"/></filter><filter id="rtexL" x="0" y="0" width="1" height="1"><feTurbulence type="fractalNoise" baseFrequency="0.05 0.12" numOctaves="2" seed="4"/><feColorMatrix type="matrix" values="0 0 0 0 0.72  0 0 0 0 0.69  0 0 0 0 0.61  3 0 0 0 -1.6"/><feComposite in2="SourceAlpha" operator="in"/></filter><filter id="rtexK" x="461" y="193" width="265" height="275" filterUnits="userSpaceOnUse"><feTurbulence type="turbulence" baseFrequency="0.11" numOctaves="2" seed="21"/><feColorMatrix type="matrix" values="0 0 0 0 0  0 0 0 0 0  0 0 0 0 0  -9 0 0 0 2.2"/><feComposite in2="SourceAlpha" operator="in"/></filter></defs><path d="M691.0 211.0L710.0 223.0L718.0 235.0L732.0 266.0L736.0 306.6L732.0 337.0L718.0 367.6L708.0 398.0L691.6 418.0L671.0 428.6L651.0 424.5L611.0 413.0L601.0 440.0L595.0 465.0L571.0 463.0L541.0 451.0L511.0 437.0L489.0 425.0L491.0 385.0L571.0 305.0L651.0 215.0Z" fill="#000" filter="url(#blur1)"/><g clip-path="url(#rockClip)"><path d="M638.5 197.1L644.5 197.2L667.1 202.6L693.6 215.9L709.0 229.1L710.1 237.9L702.4 244.5L700.2 262.2L704.6 277.6L713.4 288.6L722.3 295.2L711.2 296.3L700.2 304.0L693.6 317.3L687.0 326.1L677.0 337.0L671.0 355.0L669.0 375.0L673.8 394.4L667.1 405.5L656.1 412.1L629.7 407.7L614.2 407.7L608.6 414.4L600.0 434.6L595.7 447.6L592.8 457.6L582.7 463.4L565.4 457.6L545.3 449.0L530.9 441.8L510.7 434.6L492.0 426.0L476.2 408.7L467.5 394.3L464.6 382.8L469.0 365.5L476.4 345.0L477.6 339.6L483.4 320.8L498.1 302.9L511.7 288.0L518.4 279.9L532.0 266.3L546.9 252.8L559.1 241.9L574.0 225.7L586.2 218.9L599.8 214.8L613.3 206.7L633.6 198.6Z" fill="url(#rockBase)"/><path d="M601.0 339.0L625.0 335.0L663.0 339.0L677.0 337.0L671.0 355.0L669.0 375.0L674.0 394.0L667.0 405.0L656.0 412.0L630.0 408.0L614.0 408.0L609.0 414.0L600.0 435.0L593.0 458.0L583.0 463.0L565.0 458.0L545.0 449.0L531.0 442.0L541.0 405.0L551.0 375.0L566.0 355.0Z" fill="#4e4b43" opacity="0.6" filter="url(#blur2)"/><ellipse cx="526" cy="355" rx="22" ry="32" fill="#5f5b50" opacity="0.3" filter="url(#blur2)" transform="rotate(-20 526 355)"/><g transform="rotate(-48 593 330)"><rect x="393" y="130" width="400" height="400" fill="#000" filter="url(#rtexD)" opacity="0.5"/><rect x="393" y="130" width="400" height="400" fill="#000" filter="url(#rtexL)" opacity="0.35"/></g><rect x="611" y="193" width="120" height="260" fill="url(#rockRight)"/><clipPath id="bandClip"><path d="M477.0 403.0L491.0 397.0L504.0 407.0L516.0 400.0L529.0 415.0L543.0 409.0L556.0 425.0L571.0 421.0L583.0 435.0L597.0 431.0L603.0 445.0L593.0 465.0L565.0 460.0L531.0 445.0L492.0 430.0L473.0 413.0Z"/></clipPath><g clip-path="url(#bandClip)"><rect x="461" y="193" width="265" height="275" fill="#000" filter="url(#rtexK)" opacity="0.55"/></g><path d="M510.0 430.0L551.0 445.0L593.0 460.0L583.0 464.0L545.0 451.0L492.0 428.0Z" fill="#000" opacity="0.6" filter="url(#blur1)"/><clipPath id="rbandClip"><path d="M671.0 210.0L711.0 230.0L706.0 265.0L724.0 296.0L701.0 305.0L687.0 326.0L673.0 340.0L659.0 325.0L673.0 285.0L676.0 245.0Z"/></clipPath><g clip-path="url(#rbandClip)"><rect x="461" y="193" width="265" height="275" fill="#000" filter="url(#rtexD)" opacity="0.8"/></g><ellipse cx="695" cy="237" rx="5" ry="7" fill="#1e1c18" opacity="0.45" filter="url(#blur2)"/><ellipse cx="691" cy="265" rx="4" ry="6" fill="#1e1c18" opacity="0.4" filter="url(#blur2)"/><ellipse cx="699" cy="287" rx="5" ry="4" fill="#1e1c18" opacity="0.5" filter="url(#blur2)"/><ellipse cx="681" cy="305" rx="7" ry="4" fill="#1e1c18" opacity="0.35" filter="url(#blur2)"/><ellipse cx="659" cy="290" rx="8" ry="3" fill="#1e1c18" opacity="0.3" filter="url(#blur2)"/><path d="M477.0 403.0L491.0 397.0L504.0 407.0L516.0 400.0L529.0 415.0L543.0 409.0L556.0 425.0L571.0 421.0L583.0 435.0L597.0 431.0L603.0 445.0L593.0 465.0L565.0 460.0L531.0 445.0L492.0 430.0L473.0 413.0Z" fill="#141310" opacity="0.7" filter="url(#blur2)"/><path d="M681.0 207.0L711.0 230.0L704.0 265.0L724.0 296.0L699.0 305.0L687.0 326.0L675.0 340.0L669.0 375.0L674.0 395.0L661.0 390.0L661.0 355.0L673.0 325.0L683.0 300.0L689.0 265.0L687.0 235.0Z" fill="#0e0d0b" opacity="0.55" filter="url(#blur2)"/><path d="M621.0 348.0L633.0 343.0L651.0 341.0L661.0 345.0L655.0 353.0L641.0 351.0L629.0 359.0L621.0 357.0Z" fill="#080808" opacity="0.6" filter="url(#blur1)"/></g><path d="M699.5 359.3L711.5 359.3M697.4 365.0L701.5 366.8M694.5 370.3L700.1 375.9M689.2 373.2L691.0 377.3M683.5 375.3L683.5 387.3M677.8 373.2L676.0 377.3M672.5 370.3L666.9 375.9M669.6 365.0L665.5 366.8M667.5 359.3L655.5 359.3M669.6 353.6L665.5 351.8M672.5 348.3L666.9 342.7M677.8 345.4L676.0 341.3M683.5 343.3L683.5 331.3M689.2 345.4L691.0 341.3M694.5 348.3L700.1 342.7M697.4 353.6L701.5 351.8" stroke="#8e8877" stroke-width="3" stroke-linecap="round"/><circle cx="683.5" cy="359.3" r="11.8" fill="#7f7968"/><path d="M683.5 347.5A11.8 11.8 0 0 0 683.5 371.1Z" fill="#8c8675"/><path d="M686.3 465.4L692.4 470.0L690.9 479.0L695.0 490.0L700.0 500.5L712.2 508.0L713.8 514.2L701.0 518.0L697.0 525.0L694.0 534.0L692.4 561.5L672.6 572.2L654.2 569.1L637.5 582.9L634.4 576.8L648.1 544.7L640.5 537.0L651.2 531.0L646.6 518.8L651.2 497.4L661.9 483.7L672.6 483.7L678.7 468.4Z" fill="#030303" stroke="#8ea8da" stroke-width="1.5" stroke-linejoin="round"/><path d="M687.0 467.0L689.0 471.0L681.0 485.0L677.0 497.0L674.0 497.0L677.0 483.0Z" fill="#e6e0d2" opacity="0.95" filter="url(#blur1)"/><path d="M694.0 505.0L701.0 507.0L700.0 513.0L694.0 512.0Z" fill="#e6e0d2" opacity="0.95" filter="url(#blur1)"/><path d="M692.0 490.0L697.0 492.0L694.0 498.0Z" fill="#e6e0d2" opacity="0.8" filter="url(#blur1)"/><path d="M647.0 531.0L658.0 527.0L667.0 531.0L664.0 541.0L655.0 545.0L647.0 540.0Z" fill="#e6e0d2" opacity="0.95" filter="url(#blur1)"/><path d="M651.0 545.0L657.0 543.0L641.0 575.0L636.0 579.0Z" fill="#e6e0d2" opacity="0.95" filter="url(#blur1)"/><path d="M661.0 555.0L666.0 556.0L665.0 564.0L660.0 563.0Z" fill="#e6e0d2" opacity="0.8" filter="url(#blur1)"/><path d="M662.0 484.0L668.0 484.0L668.0 503.0L662.0 503.0Z" fill="#8a8a8a" opacity="0.9" filter="url(#blur1)"/><path d="M651.0 496.0L677.0 488.0L687.8 507.0L661.0 521.8Z" fill="#8a1a14" fill-opacity="0.35" stroke="#c65048" stroke-width="0.8"/><path d="M661.0 521.0L679.0 512.0L686.3 526.0L669.0 534.0Z" fill="#0c1250" opacity="0.95"/><path d="M668.7 510.4L674 450" stroke="#2d5bff" stroke-width="1.7"/><path d="M674.8 428.70000000000005L682 449Q674 454 667 449Z" fill="#2050f0"/><path d="M668.7 510.4L611.5 473" stroke="#6fc04a" stroke-width="1.7"/><path d="M597 463.79999999999995L615 467Q614 476 608 479Z" fill="#66c23e"/><path d="M668.7 510.4L616 553.9" stroke="#d23a2a" stroke-width="1.7"/><path d="M597.8 568.4L610 549Q618 552 619 560Z" fill="#e03a28"/><path d="M1067 10H1085M1067 13.5H1085" stroke="#9a9a9a" stroke-width="1.1"/><path d="M1117.1 26.400000000000006L1132.6 26.400000000000006L1124.3 49Z" fill="#8fcf5a"/><path d="M1093.4 63.400000000000006Q1105 60 1117.1 61.69999999999999L1101.1 78.19999999999999Z" fill="#b8544a"/><path d="M1132 61.19999999999999Q1144 60 1155.7 62.80000000000001L1148.5 78.19999999999999Z" fill="#4a78d0"/><g fill="#c9c9c9"><circle cx="1108.3" cy="50.69999999999999" r="5"/><circle cx="1140.8" cy="50.099999999999994" r="5"/><circle cx="1124.3" cy="78.5" r="5.2"/><path d="M1114 52L1124.3 48L1135 52L1135 65L1124.3 70L1114 65Z"/><path d="M1111 51L1117 56M1138 51L1132 56M1124.3 68V75" stroke="#c9c9c9" stroke-width="5"/></g><path d="M1114 52L1124.3 48L1135 52L1124.3 56Z" fill="#b5b5b5"/><text x="1124.3" y="23" font-size="13" fill="#e8e8e8" text-anchor="middle" font-family="Liberation Sans">y</text><text x="1087.4" y="78" font-size="13" fill="#e8e8e8" text-anchor="middle" font-family="Liberation Sans">x</text><text x="1161.2" y="78" font-size="13" fill="#e8e8e8" text-anchor="middle" font-family="Liberation Sans">z</text><path d="M1157 23V20A3 3 0 0 1 1163 20" fill="none" stroke="#bbb" stroke-width="1.2"/><rect x="1157" y="23" width="8" height="6" fill="#bbb"/><path d="M1108.3 109L1097 114.6L1108.3 120M1097 114.6H1109" fill="none" stroke="#a0a0a0" stroke-width="1.1"/><text x="1111.5" y="119.5" font-size="14" fill="#a8a8a8" font-family="Liberation Sans" letter-spacing="0.3">Persp</text></svg>
<div style="left:391px;top:118px;width:42px;height:165px;background:#a8a8a8;border-radius:4px"></div>
<svg style="left:404px;top:123px" width="16" height="5" viewBox="0 0 16 5"><path d="M0 1H16M0 4H16" stroke="#6a6a6a" stroke-width="1.1"/></svg>
<div style="left:394.5px;top:137.5px;width:35px;height:21.2px;background:#e6e6e6;border-radius:3px 3px 0 0"></div>
<div style="left:394.5px;top:160.3px;width:35px;height:20.899999999999988px;background:#93b7ee;border-radius:0"></div>
<div style="left:394.5px;top:183px;width:35px;height:22.2px;background:#e6e6e6;border-radius:0"></div>
<div style="left:394.5px;top:207px;width:35px;height:21.2px;background:#e6e6e6;border-radius:0"></div>
<div style="left:394.5px;top:230px;width:35px;height:21.2px;background:#e6e6e6;border-radius:0"></div>
<div style="left:394.5px;top:253px;width:35px;height:22.2px;background:#e6e6e6;border-radius:0 0 3px 3px"></div>
<svg style="left:402px;top:139px" width="20" height="19" viewBox="0 0 20 19"><path d="M4 8.5L3 6.5M7 7.5V2.8M10 7.5V1.8M13 7.8V3M15.8 9V5.2" stroke="#484848" stroke-width="2.3" stroke-linecap="round"/><path d="M2.2 9.2C3.5 8.8 4.5 10 5.5 11.3V7.2H16.9V11C16.9 14.5 14.5 17 11 17H9C7 17 6 15.8 4.8 13.8Z" fill="#484848"/></svg>
<svg style="left:402px;top:162px" width="19" height="19" viewBox="0 0 19 19"><path d="M9.5 1.8V6.8M9.5 12.2V17.2M1.8 9.5H6.8M12.2 9.5H17.2M7.3 4L9.5 1.8L11.7 4M7.3 15L9.5 17.2L11.7 15M4 7.3L1.8 9.5L4 11.7M15 7.3L17.2 9.5L15 11.7" fill="none" stroke="#f4f7fd" stroke-width="1.2"/></svg>
<svg style="left:403px;top:186px" width="18" height="18" viewBox="0 0 18 18"><path d="M7 3.5A6 6 0 0 0 8 15.5M11 15A6 6 0 0 0 10 2.5" fill="none" stroke="#555" stroke-width="1.3"/><path d="M5.5 13L8 15.5L5.5 17.5M12.5 1L10 2.5L12.3 5" fill="none" stroke="#555" stroke-width="1.3"/></svg>
<svg style="left:403px;top:209px" width="18" height="18" viewBox="0 0 18 18"><rect x="2" y="2" width="14" height="14" fill="none" stroke="#555" stroke-width="1.3"/><rect x="2" y="10" width="6" height="6" fill="none" stroke="#555" stroke-width="1.3"/><path d="M8 10L13.5 4.5M10 4.5H13.5V8" fill="none" stroke="#555" stroke-width="1.3"/></svg>
<svg style="left:403px;top:232px" width="18" height="18" viewBox="0 0 18 18"><path d="M6 3H12M6 15H12M3 6V12M15 6V12" stroke="#555" stroke-width="1.2"/><rect x="1.5" y="1.5" width="3" height="3" fill="#555"/><rect x="13.5" y="1.5" width="3" height="3" fill="#555"/><rect x="1.5" y="13.5" width="3" height="3" fill="#555"/><rect x="13.5" y="13.5" width="3" height="3" fill="#555"/></svg>
<svg style="left:402px;top:255px" width="19" height="19" viewBox="0 0 19 19"><path d="M4.5 5A7 7 0 0 1 14.5 5M14.5 14A7 7 0 0 1 4.5 14" fill="none" stroke="#555" stroke-width="1.2"/><path d="M9.5 4.5V14.5M4.5 9.5H14.5M8 6L9.5 4.5L11 6M8 13L9.5 14.5L11 13M6 8L4.5 9.5L6 11M13 8L14.5 9.5L13 11" fill="none" stroke="#555" stroke-width="1.2"/><path d="M15 2H17.5V4.5Z M4 17H1.5V14.5Z" fill="#555"/></svg>
<div style="left:1577px;top:65px;width:422px;height:1090px;background:#c8c8c8"></div>
<div style="left:1577px;top:65px;width:422px;height:22px;background:#a4a4a4;border-radius:5px 5px 0 0"></div>
<div style="left:1577px;top:65.5px;width:103px;height:21.5px;background:#cbcbcb;border-radius:5px 5px 0 0"></div>
<svg style="left:1587px;top:69.5px" width="14" height="14" viewBox="0 0 14 14"><circle cx="7" cy="7" r="6.3" fill="#4a4a4a"/><rect x="6" y="5.8" width="2" height="5.2" fill="#cbcbcb"/><circle cx="7" cy="3.8" r="1.1" fill="#cbcbcb"/></svg>
<div class="t" style="left:1603.5px;top:67.5px;letter-spacing:0.45px">Inspector</div>
<svg style="left:1958px;top:69px" width="12" height="13" viewBox="0 0 12 13"><path d="M3 6V4A3 3 0 0 1 9 4V4.5" fill="none" stroke="#5a5a5a" stroke-width="1.3"/><rect x="1.5" y="6.5" width="9" height="5.5" rx="1" fill="none" stroke="#5a5a5a" stroke-width="1.3"/></svg>
<svg style="left:1982px;top:70px" width="4" height="12" viewBox="0 0 4 12"><circle cx="2" cy="2" r="1.3" fill="#555"/><circle cx="2" cy="6" r="1.3" fill="#555"/><circle cx="2" cy="10" r="1.3" fill="#555"/></svg>
<div style="left:1577px;top:87px;width:422px;height:122.5px;background:#cbcbcb;border-bottom:1px solid #999"></div>
<svg style="left:1584px;top:97.5px" width="23" height="23" viewBox="0 0 23 23"><g transform="scale(1.4375)"><path d="M8 0.8L14.8 4.4L8 8L1.2 4.4Z" fill="#6ea2f0"/><path d="M1.2 4.4L8 8V15.4L1.2 11.7Z" fill="#3a73d9"/><path d="M14.8 4.4L8 8V15.4L14.8 11.7Z" fill="#2d5fc0"/><path d="M8 8V15.4 M1.2 4.4L8 8L14.8 4.4" stroke="#e8eefc" stroke-width="0.9" fill="none"/></g></svg>
<svg style="left:1605px;top:121px" width="8" height="5"><path d="M0 0H8L4.0 5Z" fill="#555"/></svg>
<div style="left:1630px;top:99.7px;width:14px;height:13.5px;background:#f2f2f2;border:1px solid #b5b5b5;border-radius:2px"></div>
<svg style="left:1632px;top:101.5px" width="10" height="10" viewBox="0 0 10 10"><path d="M1.5 5L4 7.8L8.8 2" fill="none" stroke="#333" stroke-width="1.5"/></svg>
<div style="left:1652.4px;top:97.8px;width:256.6px;height:17.8px;background:#f0f0f0;border:1px solid #c2c2c2;border-radius:3px"></div>
<div class="t" style="left:1655px;top:98px;font-weight:bold;letter-spacing:0.3px;color:#111">Spaceship</div>
<div style="left:1914px;top:99.5px;width:14px;height:14px;background:#f2f2f2;border:1px solid #b5b5b5;border-radius:2px"></div>
<div class="t" style="left:1933.5px;top:97.5px;letter-spacing:0.4px;color:#222">Static</div>
<svg style="left:1983px;top:104px" width="9" height="5"><path d="M0 0H9L4.5 5Z" fill="#555"/></svg>
<div class="t" style="left:1622px;top:124.5px;letter-spacing:0.4px;color:#222">Tag</div>
<div class="dd" style="left:1651px;top:124px;width:148px;height:18.7px;"></div>
<div class="t" style="left:1655px;top:124.30000000000001px;letter-spacing:0.35px">Untagged</div>
<svg style="left:1784px;top:131px" width="9" height="5"><path d="M0 0H9L4.5 5Z" fill="#333"/></svg>
<div class="t" style="left:1815.7px;top:124.5px;letter-spacing:0.4px;color:#222">Layer</div>
<div class="dd" style="left:1856.6px;top:124px;width:136.4px;height:18.7px;"></div>
<div class="t" style="left:1860px;top:124.30000000000001px;letter-spacing:0.35px">Default</div>
<svg style="left:1979px;top:131px" width="9" height="5"><path d="M0 0H9L4.5 5Z" fill="#333"/></svg>
<div class="t" style="left:1604.7px;top:160px;letter-spacing:0.4px;color:#222">Prefab</div>
<div style="left:1651px;top:159.7px;width:342px;height:18px;background:#ececec;border:1px solid #c2c2c2;border-radius:3px"></div>
<div style="left:1974px;top:160.7px;width:18px;height:16px;background:#e2e2e2;border-radius:0 3px 3px 0"></div>
<svg style="left:1976px;top:162px" width="14" height="14" viewBox="0 0 14 14"><circle cx="7" cy="7" r="5.5" fill="none" stroke="#555" stroke-width="1.1"/><circle cx="7" cy="7" r="2" fill="#555"/></svg>
<svg style="left:1654px;top:162px" width="13" height="13" viewBox="0 0 13 13"><g transform="scale(0.8125)"><path d="M8 0.8L14.8 4.4L8 8L1.2 4.4Z" fill="#6ea2f0"/><path d="M1.2 4.4L8 8V15.4L1.2 11.7Z" fill="#3a73d9"/><path d="M14.8 4.4L8 8V15.4L14.8 11.7Z" fill="#2d5fc0"/><path d="M8 8V15.4 M1.2 4.4L8 8L14.8 4.4" stroke="#e8eefc" stroke-width="0.9" fill="none"/></g></svg>
<div class="t" style="left:1668.5px;top:160.3px;letter-spacing:0.35px">Prefab4</div>
<div class="dd" style="left:1651px;top:184px;width:119.5px;height:18px;"></div>
<div class="t" style="left:1655px;top:184px;letter-spacing:0.4px">Overrides</div>
<svg style="left:1755px;top:190.5px" width="9" height="5"><path d="M0 0H9L4.5 5Z" fill="#333"/></svg>
<div class="btn" style="left:1807.7px;top:184px;width:92.3px;height:18px;"></div>
<div class="t" style="left:1834.5px;top:184px;letter-spacing:0.45px">Select</div>
<div class="btn" style="left:1904.8px;top:184px;width:86.2px;height:18px;"></div>
<div class="t" style="left:1930.5px;top:184px;letter-spacing:0.45px">Open</div>
<div style="left:1577px;top:209.5px;width:422px;height:22.5px;background:#cbcbcb;border-bottom:1px solid #b6b6b6"></div>
<svg style="left:1584px;top:216.25px" width="10" height="10" viewBox="0 0 10 10"><path d="M1 1H9L5 8Z" fill="#7a7a7a"/></svg>
<svg style="left:1598px;top:212px" width="18" height="18" viewBox="0 0 18 18"><path d="M9 3V10" stroke="#3a9a3a" stroke-width="2"/><path d="M9 10L3.5 13.5" stroke="#2d6ad0" stroke-width="2"/><path d="M9 10L14.5 13.5" stroke="#d03a30" stroke-width="2"/></svg>
<div class="t" style="left:1644.5px;top:212.25px;font-weight:bold;letter-spacing:0.35px;color:#1a1a1a">Transform</div>
<svg style="left:1933px;top:214.25px" width="13" height="13" viewBox="0 0 13 13"><circle cx="6.5" cy="6.5" r="6" fill="#555"/><text x="6.5" y="10.3" font-size="10" font-weight="bold" text-anchor="middle" fill="#cbcbcb" font-family="Liberation Sans">?</text></svg>
<svg style="left:1955px;top:214.25px" width="14" height="13" viewBox="0 0 14 13"><path d="M1 4H13M1 9.5H13" stroke="#555" stroke-width="1.3"/><path d="M9 1.5V6.5M5 7V12" stroke="#555" stroke-width="1.6"/></svg>
<svg style="left:1982px;top:214.75px" width="4" height="12" viewBox="0 0 4 12"><circle cx="2" cy="2" r="1.3" fill="#555"/><circle cx="2" cy="6" r="1.3" fill="#555"/><circle cx="2" cy="10" r="1.3" fill="#555"/></svg>
<div class="t" style="left:1598.3px;top:238px;font-weight:bold;letter-spacing:0.3px;color:#1a1a1a">Position</div>
<div class="t" style="left:1745.7px;top:238px;font-weight:bold;letter-spacing:0;color:#222">X</div>
<div class="fld" style="left:1763.3px;top:237.7px;width:60.90000000000009px;height:18.6px;"></div>
<div class="t" style="left:1766.3px;top:238px;font-weight:bold;letter-spacing:0.3px;color:#111">0</div>
<div class="t" style="left:1830.5px;top:238px;font-weight:bold;letter-spacing:0;color:#222">Y</div>
<div class="fld" style="left:1848.6px;top:237.7px;width:60.40000000000009px;height:18.6px;"></div>
<div class="t" style="left:1851.6px;top:238px;font-weight:bold;letter-spacing:0.3px;color:#111">0</div>
<div class="t" style="left:1916px;top:238px;font-weight:bold;letter-spacing:0;color:#222">Z</div>
<div class="fld" style="left:1932.8px;top:237.7px;width:60.40000000000009px;height:18.6px;"></div>
<div class="t" style="left:1935.8px;top:238px;font-weight:bold;letter-spacing:0.3px;color:#111">0</div>
<div class="t" style="left:1598.3px;top:260.7px;font-weight:bold;letter-spacing:0.3px;color:#1a1a1a">Rotation</div>
<div class="t" style="left:1745.7px;top:260.7px;font-weight:bold;letter-spacing:0;color:#222">X</div>
<div class="fld" style="left:1763.3px;top:260.4px;width:60.90000000000009px;height:18.6px;"></div>
<div class="t" style="left:1766.3px;top:260.7px;font-weight:bold;letter-spacing:0.3px;color:#111">-90</div>
<div class="t" style="left:1830.5px;top:260.7px;font-weight:bold;letter-spacing:0;color:#222">Y</div>
<div class="fld" style="left:1848.6px;top:260.4px;width:60.40000000000009px;height:18.6px;"></div>
<div class="t" style="left:1851.6px;top:260.7px;font-weight:bold;letter-spacing:0.3px;color:#111">0</div>
<div class="t" style="left:1916px;top:260.7px;font-weight:bold;letter-spacing:0;color:#222">Z</div>
<div class="fld" style="left:1932.8px;top:260.4px;width:60.40000000000009px;height:18.6px;"></div>
<div class="t" style="left:1935.8px;top:260.7px;font-weight:bold;letter-spacing:0.3px;color:#111">0</div>
<div class="t" style="left:1598.3px;top:283px;font-weight:bold;letter-spacing:0.3px;color:#1a1a1a">Scale</div>
<div class="t" style="left:1745.7px;top:283px;font-weight:bold;letter-spacing:0;color:#222">X</div>
<div class="fld" style="left:1763.3px;top:282.7px;width:60.90000000000009px;height:18.6px;"></div>
<div class="t" style="left:1766.3px;top:283px;font-weight:bold;letter-spacing:0.3px;color:#111">0.016</div>
<div class="t" style="left:1830.5px;top:283px;font-weight:bold;letter-spacing:0;color:#222">Y</div>
<div class="fld" style="left:1848.6px;top:282.7px;width:60.40000000000009px;height:18.6px;"></div>
<div class="t" style="left:1851.6px;top:283px;font-weight:bold;letter-spacing:0.3px;color:#111">0.016</div>
<div class="t" style="left:1916px;top:283px;font-weight:bold;letter-spacing:0;color:#222">Z</div>
<div class="fld" style="left:1932.8px;top:282.7px;width:60.40000000000009px;height:18.6px;"></div>
<div class="t" style="left:1935.8px;top:283px;font-weight:bold;letter-spacing:0.3px;color:#111">0.016</div>
<div style="left:1577px;top:283px;width:3px;height:18px;background:#4c8fe8"></div>
<svg style="left:1719px;top:285px" width="16" height="14" viewBox="0 0 16 14"><path d="M6 4.5H4A2.5 2.5 0 0 0 4 9.5H6M10 4.5H12A2.5 2.5 0 0 1 12 9.5H10M2 1.5L14 12.5" fill="none" stroke="#888" stroke-width="1.3"/></svg>
<div style="left:1577px;top:311.5px;width:422px;height:1px;background:#999"></div>
<div style="left:1577px;top:312.5px;width:422px;height:23.0px;background:#cbcbcb;border-bottom:1px solid #b6b6b6"></div>
<svg style="left:1584px;top:319.5px" width="10" height="10" viewBox="0 0 10 10"><path d="M1 1H9L5 8Z" fill="#7a7a7a"/></svg>
<svg style="left:1600px;top:315.5px" width="16" height="17" viewBox="0 0 16 17"><path d="M1.5 1H10L13.5 4.5V16H1.5Z" fill="#f3f3f3" stroke="#bbb" stroke-width="0.8"/><path d="M4 6H9M4 9H7M5.5 4V10" stroke="#4a9a4a" stroke-width="1"/><circle cx="10.5" cy="11.5" r="4" fill="#55a855"/><path d="M10.5 9.5V13.5M8.5 11.5H12.5" stroke="#fff" stroke-width="1.2"/></svg>
<div style="left:1622.5px;top:317.0px;width:14px;height:14px;background:#f2f2f2;border:1px solid #b5b5b5;border-radius:2px"></div>
<svg style="left:1624.5px;top:319.0px" width="10" height="10" viewBox="0 0 10 10"><path d="M1.5 5L4 7.8L8.8 2" fill="none" stroke="#333" stroke-width="1.5"/></svg>
<div class="t" style="left:1643.5px;top:315.5px;font-weight:bold;letter-spacing:0.35px;color:#1a1a1a">Player Controller (Script)</div>
<svg style="left:1933px;top:317.5px" width="13" height="13" viewBox="0 0 13 13"><circle cx="6.5" cy="6.5" r="6" fill="#555"/><text x="6.5" y="10.3" font-size="10" font-weight="bold" text-anchor="middle" fill="#cbcbcb" font-family="Liberation Sans">?</text></svg>
<svg style="left:1955px;top:317.5px" width="14" height="13" viewBox="0 0 14 13"><path d="M1 4H13M1 9.5H13" stroke="#555" stroke-width="1.3"/><path d="M9 1.5V6.5M5 7V12" stroke="#555" stroke-width="1.6"/></svg>
<svg style="left:1982px;top:318.0px" width="4" height="12" viewBox="0 0 4 12"><circle cx="2" cy="2" r="1.3" fill="#555"/><circle cx="2" cy="6" r="1.3" fill="#555"/><circle cx="2" cy="10" r="1.3" fill="#555"/></svg>
<div style="left:1577px;top:312.5px;width:3px;height:23px;background:#4c8fe8"></div>
<div style="left:1577px;top:335.5px;width:3px;height:115px;background:#4c8fe8"></div>
<div class="t" style="left:1598.3px;top:341px;letter-spacing:0.35px;color:#8a8a8a">Script</div>
<div style="left:1746px;top:341.5px;width:247px;height:17px;background:#dcdcdc;border:1px solid #c8c8c8;border-radius:3px"></div>
<svg style="left:1750px;top:344px" width="10" height="12" viewBox="0 0 10 12"><rect x="0.5" y="0.5" width="9" height="11" fill="#efefef" stroke="#c8c8c8"/><text x="5" y="9" font-size="8" text-anchor="middle" fill="#6a9a6a" font-family="Liberation Sans">#</text></svg>
<div class="t" style="left:1764px;top:341px;letter-spacing:0.35px;color:#8a8a8a">PlayerController</div>
<svg style="left:1976px;top:343.5px" width="14" height="14" viewBox="0 0 14 14"><circle cx="7" cy="7" r="5.3" fill="none" stroke="#999" stroke-width="1.1"/><circle cx="7" cy="7" r="2" fill="#999"/></svg>
<div class="t" style="left:1598.3px;top:363.3px;font-weight:bold;letter-spacing:0.25px;color:#1a1a1a">Rotation Speed</div>
<div class="fld" style="left:1746px;top:363px;width:247px;height:18.3px;"></div>
<div class="t" style="left:1749px;top:363.3px;font-weight:bold;letter-spacing:0.3px">90</div>
<div class="t" style="left:1598.3px;top:385.5px;font-weight:bold;letter-spacing:0.25px;color:#1a1a1a">Movement Speed</div>
<div class="fld" style="left:1746px;top:385.2px;width:247px;height:18.3px;"></div>
<div class="t" style="left:1749px;top:385.5px;font-weight:bold;letter-spacing:0.3px">200</div>
<div class="t" style="left:1598.3px;top:408px;font-weight:bold;letter-spacing:0.3px;color:#2c55a8">Laser</div>
<div style="left:1746px;top:407.2px;width:247px;height:18.8px;background:#ededed;border:1.5px solid #4a78c8;border-radius:3px"></div>
<svg style="left:1749px;top:409.5px" width="13" height="13" viewBox="0 0 13 13"><g transform="scale(0.8125)"><path d="M8 0.8L14.8 4.4L8 8L1.2 4.4Z" fill="#6ea2f0"/><path d="M1.2 4.4L8 8V15.4L1.2 11.7Z" fill="#3a73d9"/><path d="M14.8 4.4L8 8V15.4L14.8 11.7Z" fill="#2d5fc0"/><path d="M8 8V15.4 M1.2 4.4L8 8L14.8 4.4" stroke="#e8eefc" stroke-width="0.9" fill="none"/></g></svg>
<div class="t" style="left:1764px;top:408px;font-weight:bold;letter-spacing:0.3px">Laser</div>
<svg style="left:1596px;top:434.5px" width="10" height="10" viewBox="0 0 10 10"><path d="M1 1H9L5 8Z" fill="#7a7a7a"/></svg>
<div class="t" style="left:1611px;top:430px;font-weight:bold;letter-spacing:0.35px;color:#1a1a1a">Cannons</div>
<div style="left:1594.3px;top:449px;width:399px;height:54.2px;background:#c4c4c4;border:1px solid #9f9f9f;border-radius:4px"></div>
<div style="left:1577px;top:453.3px;width:3px;height:22px;background:#a9c4ec"></div>
<svg style="left:1598px;top:459.8px" width="14" height="4" viewBox="0 0 14 4"><path d="M0 0.8H12M0 3.2H12" stroke="#9a9a9a" stroke-width="1"/></svg>
<div style="left:1577px;top:477.7px;width:3px;height:22px;background:#a9c4ec"></div>
<svg style="left:1598px;top:484.2px" width="14" height="4" viewBox="0 0 14 4"><path d="M0 0.8H12M0 3.2H12" stroke="#9a9a9a" stroke-width="1"/></svg>
<div class="t" style="left:1630.4px;top:455.8px;font-weight:bold;letter-spacing:0.35px;color:#1a1a1a">Element 0</div>
<div class="t" style="left:1630.4px;top:480.2px;font-weight:bold;letter-spacing:0.35px;color:#1a1a1a">Element 1</div>
<div style="left:1746px;top:455.3px;width:247px;height:18px;background:#ececec;border:1px solid #c2c2c2;border-radius:3px"></div>
<svg style="left:1749px;top:457.8px" width="13" height="13" viewBox="0 0 13 13"><g transform="scale(0.8125)"><path d="M8 0.8L14.8 4.4L8 8L1.2 4.4Z" fill="#6ea2f0"/><path d="M1.2 4.4L8 8V15.4L1.2 11.7Z" fill="#3a73d9"/><path d="M14.8 4.4L8 8V15.4L14.8 11.7Z" fill="#2d5fc0"/><path d="M8 8V15.4 M1.2 4.4L8 8L14.8 4.4" stroke="#e8eefc" stroke-width="0.9" fill="none"/></g></svg>
<div class="t" style="left:1764px;top:455.8px;font-weight:bold;letter-spacing:0.3px">Cannon</div>
<div style="left:1746px;top:479.7px;width:247px;height:18px;background:#ececec;border:1px solid #c2c2c2;border-radius:3px"></div>
<svg style="left:1749px;top:482.2px" width="13" height="13" viewBox="0 0 13 13"><g transform="scale(0.8125)"><path d="M8 0.8L14.8 4.4L8 8L1.2 4.4Z" fill="#6ea2f0"/><path d="M1.2 4.4L8 8V15.4L1.2 11.7Z" fill="#3a73d9"/><path d="M14.8 4.4L8 8V15.4L14.8 11.7Z" fill="#2d5fc0"/><path d="M8 8V15.4 M1.2 4.4L8 8L14.8 4.4" stroke="#e8eefc" stroke-width="0.9" fill="none"/></g></svg>
<div class="t" style="left:1764px;top:480.2px;font-weight:bold;letter-spacing:0.3px">Cannon</div>
<div style="left:1577px;top:529.5px;width:3px;height:23.3px;background:#4c8fe8"></div>
<div class="t" style="left:1598.3px;top:529.8px;font-weight:bold;letter-spacing:0.35px;color:#1a1a1a">Cooldown</div>
<div class="fld" style="left:1746px;top:530px;width:247px;height:18.3px;"></div>
<div class="t" style="left:1749px;top:530px;font-weight:bold;letter-spacing:0.3px">1</div>
<div style="left:1577px;top:557px;width:422px;height:1px;background:#9d9d9d"></div>
<div style="left:1661px;top:568.6px;width:248px;height:23.8px;background:#e4e4e4;border:1px solid #b8b8b8;border-bottom-color:#9a9a9a;border-radius:3px"></div>
<div class="t" style="left:1737px;top:571.5px;letter-spacing:0.4px">Add Component</div>
<div style="left:1777px;top:385.4px;width:220.5px;height:462.1px;background:#c2c2c2;border-radius:9px;box-shadow:0 12px 40px rgba(0,0,0,0.35), 0 25px 90px rgba(0,0,0,0.22), 0 0 0 0.5px rgba(0,0,0,0.3)"></div>
<div style="left:1777px;top:385.4px;width:220.5px;height:30px;background:#c9c9c9;border-radius:9px 9px 0 0"></div>
<div style="left:1785.6000000000001px;top:393.09999999999997px;width:13.2px;height:13.2px;border-radius:7px;background:#ee5f56;box-shadow:inset 0 0 0 0.6px #d44c44"></div>
<div style="left:1807.7px;top:393.09999999999997px;width:13.2px;height:13.2px;border-radius:7px;background:#cfcfcf;box-shadow:inset 0 0 0 0.6px #bdbdbd"></div>
<div style="left:1830.2px;top:393.09999999999997px;width:13.2px;height:13.2px;border-radius:7px;background:#55c444;box-shadow:inset 0 0 0 0.6px #43a637"></div>
<div class="t" style="left:1854.3px;top:390.3px;font-weight:bold;font-size:14.5px;letter-spacing:0.35px;color:#3a3a3a">Select Game Obj...</div>
<div style="left:1779.5px;top:419.3px;width:217.3px;height:14.7px;background:#efefef;border:1px solid #c5c5c5;border-radius:4px"></div>
<svg style="left:1783px;top:422.5px" width="9" height="9" viewBox="0 0 9 9"><circle cx="3.5" cy="3.5" r="2.4" fill="none" stroke="#555" stroke-width="1.1"/><path d="M5.3 5.3L7.8 7.8" stroke="#555" stroke-width="1.3"/></svg>
<div class="t" style="left:1795px;top:417.3px;letter-spacing:0.3px;color:#222">laser</div>
<svg style="left:1984px;top:421.5px" width="10" height="10" viewBox="0 0 10 10"><path d="M1.5 1.5L8.5 8.5M8.5 1.5L1.5 8.5" stroke="#888" stroke-width="1.1"/></svg>
<div style="left:1777px;top:438.4px;width:220.5px;height:23px;background:#c8c8c8;border-bottom:1px solid #a9a9a9"></div>
<div style="left:1782px;top:439px;width:53px;height:22.5px;background:#cdcdcd;border:1px solid #a9a9a9;border-bottom:none;border-radius:3px 3px 0 0"></div>
<div class="t" style="left:1788px;top:441.5px;letter-spacing:0.45px;color:#1c1c1c">Assets</div>
<div class="t" style="left:1842.5px;top:441.5px;letter-spacing:0.45px;color:#1c1c1c">Scene</div>
<div style="left:1889px;top:449.8px;width:61px;height:1.4px;background:#8a8a8a"></div>
<div style="left:1918.7px;top:444.5px;width:11.6px;height:11.6px;border-radius:6px;background:#6b6b6b"></div>
<div style="left:1955px;top:438.4px;width:42.5px;height:22.6px;background:#ededed;border-left:1px solid #b5b5b5"></div>
<svg style="left:1960.5px;top:443.5px" width="17" height="12" viewBox="0 0 17 12"><path d="M1 6C4 1.5 12 1.5 15.5 6C12 10.5 4 10.5 1 6Z" fill="none" stroke="#333" stroke-width="1.2"/><circle cx="8.2" cy="6" r="2.2" fill="#333"/><path d="M2 11.5L15 0.5" stroke="#333" stroke-width="1.3"/></svg>
<div class="t" style="left:1978px;top:441.5px;letter-spacing:0.3px;font-size:13.5px;color:#111">15</div>
<div style="left:1904px;top:475px;width:67.6px;height:66.8px;background:#4b4d55;box-shadow:0 1px 2px rgba(0,0,0,0.3)"></div>
<svg style="left:1924px;top:480px" width="28" height="58" viewBox="0 0 28 58"><defs><linearGradient id="capB" x1="0" x2="1"><stop offset="0" stop-color="#7a7d88"/><stop offset="0.45" stop-color="#8a8d98"/><stop offset="1" stop-color="#383a42"/></linearGradient></defs><rect x="1.5" y="2" width="25" height="52" rx="12.5" fill="url(#capB)"/></svg>
<div class="t" style="left:1823px;top:544px;letter-spacing:0.3px;font-size:12.5px;color:#222">None</div>
<div style="left:1895.5px;top:545.8px;width:84.5px;height:14.8px;background:#4a7bcc;border-radius:3px"></div>
<div style="left:1916.5px;top:546.5px;width:13px;height:13px;border-radius:7px;background:#2f62c6"></div>
<div class="t" style="left:1932px;top:544.2px;letter-spacing:0.3px;font-size:12.5px;color:#f4f4f4">Laser</div>
<div style="left:1804.7px;top:578.4px;width:66.3px;height:66.4px;background:#585858;box-shadow:0 1px 2px rgba(0,0,0,0.3)"></div>
<svg style="left:1815px;top:585px" width="46" height="55" viewBox="0 0 46 55"><path d="M12 10L22 4L34 6L41 14L40 26L33 31L30 48L25 52L22 45L20 34L13 30L9 26L4 24L6 18Z" fill="#3d3d3d"/><path d="M6 20L24 17L30 24L14 30Z" fill="#222"/><path d="M14 10L34 8L40 14L32 16Z" fill="#555"/></svg>
<svg style="left:1815.5px;top:649.5px" width="13" height="13" viewBox="0 0 13 13"><g transform="scale(0.8125)"><path d="M8 0.8L14.8 4.4L8 8L1.2 4.4Z" fill="#6ea2f0"/><path d="M1.2 4.4L8 8V15.4L1.2 11.7Z" fill="#3a73d9"/><path d="M14.8 4.4L8 8V15.4L14.8 11.7Z" fill="#2d5fc0"/><path d="M8 8V15.4 M1.2 4.4L8 8L14.8 4.4" stroke="#e8eefc" stroke-width="0.9" fill="none"/></g></svg>
<div class="t" style="left:1830.5px;top:647.6px;letter-spacing:0.35px;font-size:12.5px;color:#222">Laser</div>
<div style="left:1777px;top:753.8px;width:220.5px;height:1px;background:#a9a9a9"></div>
<div style="left:1870px;top:757px;width:36px;height:1px;background:#8e8e8e"></div>
<div style="left:1870px;top:760px;width:36px;height:1px;background:#8e8e8e"></div>
<svg style="left:1868px;top:764px" width="40" height="72" viewBox="0 0 40 72"><defs><radialGradient id="redC" cx="0.4" cy="0.3" r="0.8"><stop offset="0" stop-color="#9a2a22"/><stop offset="0.6" stop-color="#6e150f"/><stop offset="1" stop-color="#2a0504"/></radialGradient></defs><rect x="3" y="2" width="34" height="66" rx="17" fill="url(#redC)"/></svg>
<div class="t" style="left:1777px;width:222px;top:782px;text-align:center;font-weight:bold;font-size:13px;letter-spacing:0.6px;color:#f2f2f2;text-shadow:0 0 2px #000,0 1px 2px #000">Laser</div>
<div class="t" style="left:1777px;width:222px;top:798.4px;text-align:center;font-weight:bold;font-size:13px;letter-spacing:0.6px;color:#f2f2f2;text-shadow:0 0 2px #000,0 1px 2px #000">Game Object</div>
<div class="t" style="left:1777px;width:222px;top:815px;text-align:center;font-weight:bold;font-size:13px;letter-spacing:0.6px;color:#f2f2f2;text-shadow:0 0 2px #000,0 1px 2px #000">Assets/Prefabs/Laser.prefab</div>
<div style="left:0px;top:778px;width:1575px;height:377px;background:#c8c8c8"></div>
<div style="left:0px;top:778px;width:1575px;height:21px;background:#a4a4a4;border-radius:5px 5px 0 0"></div>
<div style="left:0px;top:778.4px;width:89px;height:20.6px;background:#cbcbcb;border-radius:5px 5px 0 0"></div>
<svg style="left:7px;top:782px" width="15" height="13" viewBox="0 0 15 13"><path d="M0.5 1.5V12H14V3.5H6.5L5 1.5Z" fill="#555"/></svg>
<div class="t" style="left:25.5px;top:780px;letter-spacing:0.5px">Project</div>
<svg style="left:100px;top:782px" width="12" height="13" viewBox="0 0 12 13"><rect x="1" y="0.8" width="10" height="11.5" rx="1" fill="none" stroke="#555" stroke-width="1.2"/><path d="M3 4H9M3 6.5H9M3 9H9" stroke="#555" stroke-width="1"/></svg>
<div class="t" style="left:117px;top:780px;letter-spacing:0.4px">Console</div>
<svg style="left:1535px;top:782px" width="12" height="13" viewBox="0 0 12 13"><path d="M3 6V4A3 3 0 0 1 9 4V4.5" fill="none" stroke="#5a5a5a" stroke-width="1.3"/><rect x="1.5" y="6.5" width="9" height="5.5" rx="1" fill="none" stroke="#5a5a5a" stroke-width="1.3"/></svg>
<svg style="left:1558px;top:782.5px" width="4" height="12" viewBox="0 0 4 12"><circle cx="2" cy="2" r="1.3" fill="#555"/><circle cx="2" cy="6" r="1.3" fill="#555"/><circle cx="2" cy="10" r="1.3" fill="#555"/></svg>
<div style="left:0px;top:799px;width:1575px;height:22.6px;background:#cbcbcb;border-bottom:1px solid #a9a9a9"></div>
<svg style="left:8px;top:803px" width="14" height="14" viewBox="0 0 14 14"><path d="M7 1V13M1 7H13" stroke="#444" stroke-width="1.7"/></svg>
<svg style="left:26px;top:808px" width="8" height="5"><path d="M0 0H8L4.0 5Z" fill="#555"/></svg>
<div style="left:1059px;top:801.3px;width:331px;height:17.3px;background:#f0f0f0;border:1px solid #c3c3c3;border-radius:4px 0 0 4px"></div>
<svg style="left:1064px;top:805px" width="10" height="10" viewBox="0 0 10 10"><circle cx="4" cy="4" r="2.6" fill="none" stroke="#666" stroke-width="1.1"/><path d="M6 6L8.5 8.5" stroke="#666" stroke-width="1.3"/></svg>
<div style="left:1390px;top:801px;width:21.7px;height:18px;background:#dedede;border:1px solid #b9b9b9;border-radius:0 4px 4px 0"></div>
<svg style="left:1393px;top:803px" width="15" height="14" viewBox="0 0 15 14"><rect x="5" y="1.5" width="8" height="8" fill="none" stroke="#555" stroke-width="1.1"/><rect x="1.5" y="8" width="5" height="5" fill="#dedede" stroke="#555" stroke-width="1.1"/><path d="M6.5 8L11 3.5M8 3.5H11V6.5" fill="none" stroke="#555" stroke-width="1.1"/></svg>
<div style="left:1415px;top:800px;width:1px;height:21px;background:#b4b4b4"></div>
<div style="left:1443.5px;top:800px;width:1px;height:21px;background:#b4b4b4"></div>
<div style="left:1472.5px;top:800px;width:1px;height:21px;background:#b4b4b4"></div>
<div style="left:1501.5px;top:800px;width:1px;height:21px;background:#b4b4b4"></div>
<div style="left:1530px;top:800px;width:1px;height:21px;background:#b4b4b4"></div>
<svg style="left:1421px;top:802px" width="16" height="16" viewBox="0 0 16 16"><rect x="1" y="1" width="6" height="7" fill="#3a3a3a"/><circle cx="5" cy="11" r="4" fill="#3a3a3a"/><path d="M10 4L14.5 12H5.5Z" fill="#3a3a3a"/></svg>
<svg style="left:1450px;top:802px" width="16" height="16" viewBox="0 0 16 16"><path d="M8 1.5H14.5V8L7.5 15L1 8.5Z" fill="#3a3a3a"/><circle cx="11.5" cy="4.5" r="1.3" fill="#cbcbcb"/></svg>
<svg style="left:1479px;top:802px" width="16" height="16" viewBox="0 0 16 16"><circle cx="8" cy="8" r="6.5" fill="#c2c2c2"/></svg>
<svg style="left:1508px;top:802px" width="16" height="16" viewBox="0 0 16 16"><path d="M8 1L10 6H15L11 9.2L12.5 14.5L8 11.3L3.5 14.5L5 9.2L1 6H6Z" fill="#6b6b6b"/></svg>
<svg style="left:1536px;top:803.5px" width="17" height="13" viewBox="0 0 17 13"><path d="M1 6.5C4 2 12 2 15.5 6.5C12 11 4 11 1 6.5Z" fill="none" stroke="#333" stroke-width="1.2"/><circle cx="8.2" cy="6.5" r="2.2" fill="#333"/><path d="M2 12L15 1" stroke="#333" stroke-width="1.3"/></svg>
<div class="t" style="left:1554.5px;top:801px;font-size:13.5px;letter-spacing:0.2px;color:#111">15</div>
<div style="left:0px;top:1034.8px;width:216px;height:17.2px;background:#adadad"></div>
<svg style="left:4.0px;top:826.5px" width="10" height="10" viewBox="0 0 10 10"><path d="M1 1H9L5 8Z" fill="#7a7a7a"/></svg>
<svg style="left:19.5px;top:824px" width="14" height="14" viewBox="0 0 14 14"><path d="M7 0.8L8.9 5.2H13.5L9.8 8L11.2 12.8L7 10L2.8 12.8L4.2 8L0.5 5.2H5.1Z" fill="#555"/></svg>
<div class="t" style="left:38.0px;top:822.5px;font-weight:bold;letter-spacing:0.3px;color:#111">Favorites</div>
<svg style="left:35px;top:841.8px" width="14" height="14" viewBox="0 0 14 14"><circle cx="5.5" cy="5.5" r="4.3" fill="none" stroke="#6a6a6a" stroke-width="1.2"/><path d="M8.6 8.6L12.5 12.5" stroke="#6a6a6a" stroke-width="1.5"/></svg>
<div class="t" style="left:53px;top:839.8px;letter-spacing:0.35px;color:#1e1e1e">All Materials</div>
<svg style="left:35px;top:859.5px" width="14" height="14" viewBox="0 0 14 14"><circle cx="5.5" cy="5.5" r="4.3" fill="none" stroke="#6a6a6a" stroke-width="1.2"/><path d="M8.6 8.6L12.5 12.5" stroke="#6a6a6a" stroke-width="1.5"/></svg>
<div class="t" style="left:53px;top:857.5px;letter-spacing:0.35px;color:#1e1e1e">All Models</div>
<svg style="left:35px;top:877.1px" width="14" height="14" viewBox="0 0 14 14"><circle cx="5.5" cy="5.5" r="4.3" fill="none" stroke="#6a6a6a" stroke-width="1.2"/><path d="M8.6 8.6L12.5 12.5" stroke="#6a6a6a" stroke-width="1.5"/></svg>
<div class="t" style="left:53px;top:875.1px;letter-spacing:0.35px;color:#1e1e1e">All Prefabs</div>
<svg style="left:4.0px;top:913.5px" width="10" height="10" viewBox="0 0 10 10"><path d="M1 1H9L5 8Z" fill="#7a7a7a"/></svg>
<svg style="left:20.0px;top:911.5px" width="16" height="13" viewBox="0 0 16 13"><path d="M0.5 2V12H13L15.3 5.3H3.5L1.6 11V2.2" fill="none" stroke="#555" stroke-width="1.2"/><path d="M0.8 2H5L6.5 3.6H12.5V5.2" fill="none" stroke="#555" stroke-width="1.2"/><path d="M3.5 5.3H15.3L13 12H1.3Z" fill="#555"/></svg>
<div class="t" style="left:38.0px;top:909.5px;font-weight:bold;letter-spacing:0.3px;color:#111">Assets</div>
<svg style="left:19.5px;top:931.3px" width="10" height="10" viewBox="0 0 10 10"><path d="M1 1H9L5 8Z" fill="#7a7a7a"/></svg>
<svg style="left:35.5px;top:929.3px" width="16" height="13" viewBox="0 0 16 13"><path d="M0.5 2V12H13L15.3 5.3H3.5L1.6 11V2.2" fill="none" stroke="#555" stroke-width="1.2"/><path d="M0.8 2H5L6.5 3.6H12.5V5.2" fill="none" stroke="#555" stroke-width="1.2"/><path d="M3.5 5.3H15.3L13 12H1.3Z" fill="#555"/></svg>
<div class="t" style="left:53.5px;top:927.3px;letter-spacing:0.35px;color:#1e1e1e">BreakableAsteroids</div>
<svg style="left:51.0px;top:947.0px" width="15" height="13" viewBox="0 0 15 13"><path d="M0.5 2.5V12H14V4.2H6.8L5.2 2.5Z" fill="#555"/></svg>
<div class="t" style="left:69.0px;top:945.0px;letter-spacing:0.35px;color:#1e1e1e">Asteroids</div>
<svg style="left:51.0px;top:964.8px" width="15" height="13" viewBox="0 0 15 13"><path d="M0.5 2.5V12H14V4.2H6.8L5.2 2.5Z" fill="#555"/></svg>
<div class="t" style="left:69.0px;top:962.8px;letter-spacing:0.35px;color:#1e1e1e">Scenes</div>
<svg style="left:51.0px;top:982.5px" width="15" height="13" viewBox="0 0 15 13"><path d="M0.5 2.5V12H14V4.2H6.8L5.2 2.5Z" fill="#555"/></svg>
<div class="t" style="left:69.0px;top:980.5px;letter-spacing:0.35px;color:#1e1e1e">Scripts</div>
<svg style="left:51.0px;top:1000.3px" width="15" height="13" viewBox="0 0 15 13"><path d="M0.5 2.5V12H14V4.2H6.8L5.2 2.5Z" fill="#555"/></svg>
<div class="t" style="left:69.0px;top:998.3px;letter-spacing:0.35px;color:#1e1e1e">Textures</div>
<svg style="left:35.5px;top:1018.0px" width="15" height="13" viewBox="0 0 15 13"><path d="M0.5 2.5V12H14V4.2H6.8L5.2 2.5Z" fill="#555"/></svg>
<div class="t" style="left:53.5px;top:1016.0px;letter-spacing:0.35px;color:#1e1e1e">Materials</div>
<svg style="left:35.5px;top:1035.8px" width="15" height="13" viewBox="0 0 15 13"><path d="M0.5 2.5V12H14V4.2H6.8L5.2 2.5Z" fill="#555"/></svg>
<div class="t" style="left:53.5px;top:1033.8px;letter-spacing:0.35px;color:#1e1e1e">Prefabs</div>
<svg style="left:35.5px;top:1053.5px" width="15" height="13" viewBox="0 0 15 13"><path d="M0.5 2.5V12H14V4.2H6.8L5.2 2.5Z" fill="#555"/></svg>
<div class="t" style="left:53.5px;top:1051.5px;letter-spacing:0.35px;color:#1e1e1e">Scenes</div>
<svg style="left:19.5px;top:1073.3px" width="10" height="10" viewBox="0 0 10 10"><path d="M1 1H9L5 8Z" fill="#7a7a7a"/></svg>
<svg style="left:35.5px;top:1071.3px" width="16" height="13" viewBox="0 0 16 13"><path d="M0.5 2V12H13L15.3 5.3H3.5L1.6 11V2.2" fill="none" stroke="#555" stroke-width="1.2"/><path d="M0.8 2H5L6.5 3.6H12.5V5.2" fill="none" stroke="#555" stroke-width="1.2"/><path d="M3.5 5.3H15.3L13 12H1.3Z" fill="#555"/></svg>
<div class="t" style="left:53.5px;top:1069.3px;letter-spacing:0.35px;color:#1e1e1e">Spaceship Fighter</div>
<svg style="left:35.0px;top:1091.0px" width="10" height="10" viewBox="0 0 10 10"><path d="M1 1H9L5 8Z" fill="#7a7a7a"/></svg>
<svg style="left:51.0px;top:1089.0px" width="16" height="13" viewBox="0 0 16 13"><path d="M0.5 2V12H13L15.3 5.3H3.5L1.6 11V2.2" fill="none" stroke="#555" stroke-width="1.2"/><path d="M0.8 2H5L6.5 3.6H12.5V5.2" fill="none" stroke="#555" stroke-width="1.2"/><path d="M3.5 5.3H15.3L13 12H1.3Z" fill="#555"/></svg>
<div class="t" style="left:69.0px;top:1087.0px;letter-spacing:0.35px;color:#1e1e1e">Models</div>
<svg style="left:66.5px;top:1106.8px" width="15" height="13" viewBox="0 0 15 13"><path d="M0.5 2.5V12H14V4.2H6.8L5.2 2.5Z" fill="#555"/></svg>
<div class="t" style="left:84.5px;top:1104.8px;letter-spacing:0.35px;color:#1e1e1e">Materials</div>
<svg style="left:51.0px;top:1124.5px" width="15" height="13" viewBox="0 0 15 13"><path d="M0.5 2.5V12H14V4.2H6.8L5.2 2.5Z" fill="#555"/></svg>
<div class="t" style="left:69.0px;top:1122.5px;letter-spacing:0.35px;color:#1e1e1e">Prefabs</div>
<svg style="left:51.0px;top:1142.3px" width="15" height="13" viewBox="0 0 15 13"><path d="M0.5 2.5V12H14V4.2H6.8L5.2 2.5Z" fill="#555"/></svg>
<div class="t" style="left:69.0px;top:1140.3px;letter-spacing:0.35px;color:#1e1e1e">Textures</div>
<div style="left:216px;top:822px;width:15px;height:333px;background:#c3c3c3;border-left:1px solid #b0b0b0;border-right:1px solid #b0b0b0"></div>
<svg style="left:218px;top:826px" width="10" height="7" viewBox="0 0 10 7"><path d="M1 6H9L5 1Z" fill="#555"/></svg>
<div style="left:218.5px;top:840px;width:10px;height:253px;background:#a3a3a3;border-radius:5px"></div>
<svg style="left:218px;top:1142px" width="10" height="7" viewBox="0 0 10 7"><path d="M1 1H9L5 6Z" fill="#555"/></svg>
<div style="left:231px;top:822.4px;width:1344px;height:332.6px;background:#bebebe"></div>
<div style="left:231px;top:822.4px;width:1344px;height:21.5px;background:#d3d3d3;border-bottom:1px solid #c0c0c0"></div>
<div class="t" style="left:236px;top:824.5px;letter-spacing:0.4px;color:#2a2a2a">Assets</div>
<svg style="left:283px;top:827px" width="8" height="12" viewBox="0 0 8 12"><path d="M1.5 1.5L6 6L1.5 10.5" fill="none" stroke="#777" stroke-width="1.3"/></svg>
<div class="t" style="left:296.5px;top:824.5px;font-weight:bold;letter-spacing:0.35px;color:#111">Prefabs</div>
<div style="left:250px;top:859px;width:66.3px;height:66px;background:#545454;box-shadow:0 1px 2px rgba(0,0,0,0.3)"></div>
<svg style="left:268px;top:864px" width="30" height="56" viewBox="0 0 30 56"><defs><linearGradient id="capG" x1="0" x2="1"><stop offset="0" stop-color="#6c6c6c"/><stop offset="0.4" stop-color="#7f7f7f"/><stop offset="0.85" stop-color="#505050"/><stop offset="1" stop-color="#3c3c3c"/></linearGradient></defs><rect x="1.5" y="1" width="27.5" height="52" rx="13.5" fill="url(#capG)"/></svg>
<svg style="left:260px;top:929px" width="14" height="14" viewBox="0 0 14 14"><g transform="scale(0.875)"><path d="M8 0.8L14.8 4.4L8 8L1.2 4.4Z" fill="#6ea2f0"/><path d="M1.2 4.4L8 8V15.4L1.2 11.7Z" fill="#3a73d9"/><path d="M14.8 4.4L8 8V15.4L14.8 11.7Z" fill="#2d5fc0"/><path d="M8 8V15.4 M1.2 4.4L8 8L14.8 4.4" stroke="#e8eefc" stroke-width="0.9" fill="none"/></g></svg>
<div class="t" style="left:277px;top:928px;letter-spacing:0.4px;color:#1c1c1c">Laser</div>
<div style="left:231px;top:1131.4px;width:1344px;height:23.6px;background:#cfcfcf;border-top:1px solid #bbb"></div>
<div style="left:1496px;top:1142.3px;width:61px;height:1.4px;background:#7a7a7a"></div>
<div style="left:1525px;top:1137px;width:12px;height:12px;border-radius:6px;background:#5e5e5e"></div>
<div style="left:1575px;top:778px;width:2px;height:377px;background:#8b8b8b"></div>
<div style="left:0px;top:1155px;width:1999px;height:25px;background:#8b8b8b"></div>
<svg style="left:3px;top:1158.5px" width="16" height="16"><path d="M7.5 0.8L15 14.8H0Z" fill="#d9ac2c"/><rect x="6.8" y="4.5" width="1.7" height="6" fill="#3a2a10"/><rect x="6.8" y="12" width="1.7" height="1.7" fill="#3a2a10"/></svg>
<div class="t" style="left:22px;top:1158px;color:#48451f;letter-spacing:0.43px">Assets/PlayerController.cs(14,17): warning CS0414: The field 'PlayerController.currentCannon' is assigned but its value is never used</div>
<svg style="left:1888px;top:1159px" width="16" height="16" viewBox="0 0 16 16"><path d="M3 15L5 9L3 5L6 6L8 1L10 6L13 5L11 10L13 15Z" fill="#e0b62e"/></svg>
<svg style="left:1917px;top:1159px" width="17" height="16" viewBox="0 0 17 16"><ellipse cx="8" cy="3.5" rx="6" ry="2.5" fill="#555"/><path d="M2 6.5C2 9 14 9 14 6.5M2 9.5C2 12 14 12 14 9.5M2 12.5C2 15 14 15 14 12.5" fill="none" stroke="#555" stroke-width="1.3"/></svg>
<svg style="left:1946px;top:1159px" width="17" height="16" viewBox="0 0 17 16"><circle cx="8.5" cy="8" r="6" fill="none" stroke="#555" stroke-width="1.3"/><path d="M2 2L15 14" stroke="#555" stroke-width="1.3"/><circle cx="8.5" cy="8" r="2" fill="#555"/></svg>
<svg style="left:1975px;top:1159px" width="16" height="16" viewBox="0 0 16 16"><circle cx="8" cy="8" r="6.5" fill="none" stroke="#666" stroke-width="1.2"/><path d="M5 8L7.3 10.3L11 6" fill="none" stroke="#666" stroke-width="1.3"/></svg>
<div style="left:1880px;top:1157px;width:1px;height:21px;background:#9c9c9c"></div>
<div style="left:1910px;top:1157px;width:1px;height:21px;background:#9c9c9c"></div>
<div style="left:1939px;top:1157px;width:1px;height:21px;background:#9c9c9c"></div>
<div style="left:1968px;top:1157px;width:1px;height:21px;background:#9c9c9c"></div>
<div style="left:0px;top:1179px;width:1999px;height:1px;background:#4d6a75"></div>
<svg style="left:0;top:1168px" width="12" height="12"><path d="M0 0A11 11 0 0 0 11 11H0Z" fill="#1a0806"/></svg>
<svg style="left:1987px;top:1168px" width="12" height="12"><path d="M12 0A11 11 0 0 1 1 11H12Z" fill="#1a0806"/></svg></body></html>
